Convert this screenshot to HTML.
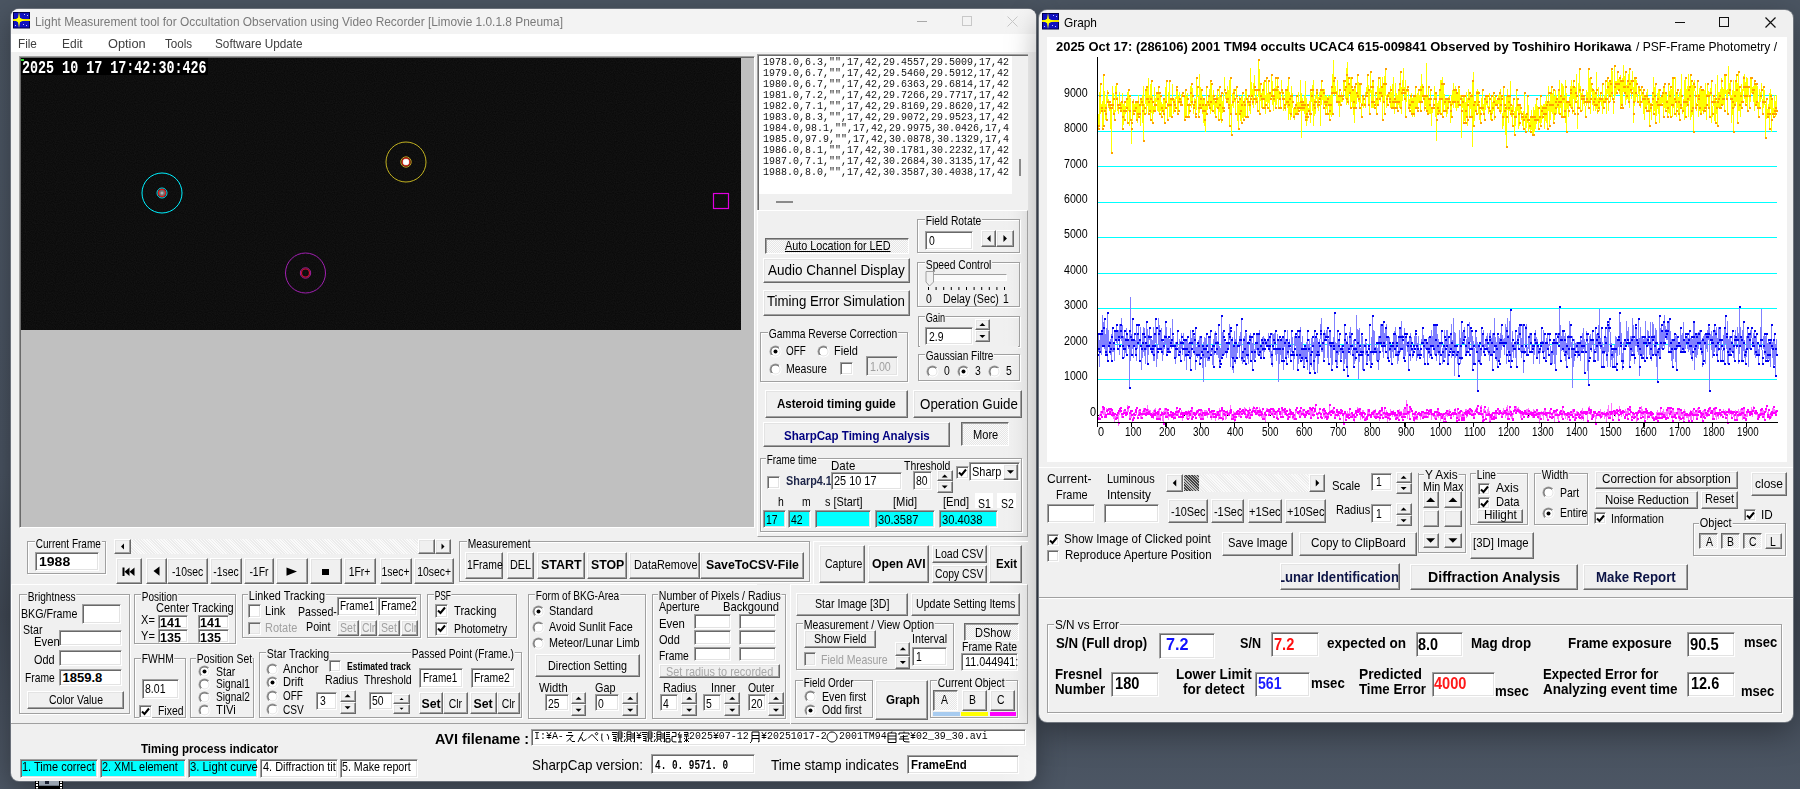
<!DOCTYPE html><html><head><meta charset="utf-8"><style>*{box-sizing:border-box;margin:0;padding:0}
html,body{width:1800px;height:789px;overflow:hidden}
body{position:relative;background:#4a5462;font-family:"Liberation Sans",sans-serif;font-size:13px;color:#000}
.a{position:absolute}
.t{position:absolute;white-space:nowrap;line-height:1;transform-origin:0 0}
</style></head><body>
<svg width="0" height="0" style="position:absolute"><defs><linearGradient id="rgo" x1="0" y1="0" x2="1" y2="1"><stop offset="0.5" stop-color="#a0a0a0"/><stop offset="0.5" stop-color="#ffffff"/></linearGradient><linearGradient id="rgi" x1="0" y1="0" x2="1" y2="1"><stop offset="0.5" stop-color="#696969"/><stop offset="0.5" stop-color="#e3e3e3"/></linearGradient></defs></svg>
<div class="a" style="left:0px;top:0px;width:1800px;height:789px;background:linear-gradient(180deg,#4b5562 0%,#485260 60%,#3f4753 78%,#4c5664 100%);"></div>
<div class="a" style="left:11px;top:9px;width:1025px;height:772px;background:#f0f0f0;border-radius:8px;box-shadow:0 0 0 1px #6a707a,0 8px 28px rgba(0,0,0,0.35);"></div>
<div class="a" style="left:11px;top:9px;width:1025px;height:25px;background:#f3f3f3;border-radius:8px 8px 0 0;"></div>
<svg class="a" style="left:13px;top:12px" width="17" height="17"><rect x="0.5" y="0.5" width="16" height="15.5" fill="#1010c0" stroke="#000050" stroke-width="1"/><path d="M0 8 H17" stroke="#f0e000" stroke-width="2"/><path d="M6 0 L7 6 L12 8 L7 10 L6 16 L5 10 L1 8 L5 6 Z" fill="#ffff00"/><circle cx="6" cy="8" r="2.2" fill="#ffff00"/><g fill="#c0c0ff"><rect x="11" y="2" width="1" height="1"/><rect x="14" y="3" width="1" height="1"/><rect x="10" y="12" width="1" height="1"/><rect x="13" y="13" width="1" height="1"/><rect x="2" y="13" width="1" height="1"/></g></svg>
<span class="t" style="left:35.3px;top:14.6px;font-size:13.5px;color:#7a7a7a;transform:scale(0.882,1.000);">Light Measurement tool for Occultation Observation using Video Recorder [Limovie 1.0.1.8 Pneuma]</span>
<div class="a" style="left:917px;top:21px;width:10px;height:1px;background:#a8a8a8;"></div>
<div class="a" style="left:962px;top:16px;width:10px;height:10px;border:1px solid #c8c8c8;"></div>
<svg class="a" style="left:1007px;top:16px" width="11" height="11"><path d="M0.5 0.5 L10.5 10.5 M10.5 0.5 L0.5 10.5" stroke="#c0c0c0" stroke-width="1"/></svg>
<div class="a" style="left:11px;top:34px;width:1025px;height:18px;background:#fff;"></div>
<span class="t" style="left:18.2px;top:36.5px;font-size:13px;color:#404040;transform:scale(0.902,1.000);">File</span>
<span class="t" style="left:62.1px;top:36.5px;font-size:13px;color:#404040;transform:scale(0.920,1.000);">Edit</span>
<span class="t" style="left:107.8px;top:36.5px;font-size:13px;color:#404040;transform:scale(0.984,1.000);">Option</span>
<span class="t" style="left:165.3px;top:36.5px;font-size:13px;color:#404040;transform:scale(0.896,1.000);">Tools</span>
<span class="t" style="left:215.3px;top:36.5px;font-size:13px;color:#404040;transform:scale(0.905,1.000);">Software Update</span>
<div class="a" style="left:1000px;top:9px;width:36px;height:772px;background:linear-gradient(90deg,rgba(255,255,255,0),rgba(255,255,255,0.35));border-radius:0 8px 8px 0;"></div>
<div class="a" style="left:1039px;top:10px;width:754px;height:712px;background:#f0f0f0;border-radius:8px;box-shadow:0 0 0 1px #70767e,0 10px 32px rgba(0,0,0,0.35);"></div>
<svg class="a" style="left:1042px;top:13px" width="17" height="17"><rect x="0.5" y="0.5" width="16" height="15.5" fill="#1010c0" stroke="#000050" stroke-width="1"/><path d="M0 8 H17" stroke="#f0e000" stroke-width="2"/><path d="M6 0 L7 6 L12 8 L7 10 L6 16 L5 10 L1 8 L5 6 Z" fill="#ffff00"/><circle cx="6" cy="8" r="2.2" fill="#ffff00"/><g fill="#c0c0ff"><rect x="11" y="2" width="1" height="1"/><rect x="14" y="3" width="1" height="1"/><rect x="10" y="12" width="1" height="1"/><rect x="13" y="13" width="1" height="1"/><rect x="2" y="13" width="1" height="1"/></g></svg>
<span class="t" style="left:1064.0px;top:15.9px;font-size:13px;transform:scale(0.911,1.000);">Graph</span>
<div class="a" style="left:1675px;top:22px;width:10px;height:1px;background:#111;"></div>
<div class="a" style="left:1719px;top:17px;width:10px;height:10px;border:1px solid #111;"></div>
<svg class="a" style="left:1765px;top:17px" width="11" height="11"><path d="M0.5 0.5 L10.5 10.5 M10.5 0.5 L0.5 10.5" stroke="#111" stroke-width="1.2"/></svg>
<svg class="a" style="left:35px;top:781px" width="28" height="8"><rect x="0" y="0" width="28" height="8" fill="#000"/><rect x="4" y="0" width="20" height="4" fill="#9aa4b0"/><rect x="10" y="0" width="4" height="3" fill="#1a2030"/><rect x="4" y="4" width="20" height="1" fill="#707a86"/><rect x="1" y="0.5" width="2" height="1.5" fill="#fff"/><rect x="1" y="3" width="2" height="2" fill="#fff"/><rect x="1" y="6" width="2" height="1.5" fill="#fff"/><rect x="25" y="0.5" width="2" height="1.5" fill="#fff"/><rect x="25" y="3" width="2" height="2" fill="#fff"/><rect x="25" y="6" width="2" height="1.5" fill="#fff"/></svg>
<div class="a" style="left:19px;top:56px;width:736px;height:472px;background:#c0c0c0;border-top:1px solid #a0a0a0;border-left:1px solid #a0a0a0;border-right:1px solid #fff;border-bottom:1px solid #fff;box-shadow:inset 1px 1px #696969;"></div>
<svg class="a" style="left:21px;top:58px" width="720" height="272"><defs><filter id="nz" x="0" y="0" width="100%" height="100%"><feTurbulence type="fractalNoise" baseFrequency="0.9" numOctaves="1" seed="3"/><feColorMatrix type="matrix" values="0 0 0 0 0.16  0 0 0 0 0.16  0 0 0 0 0.16  0 0 0 0.16 0"/></filter></defs><rect width="721" height="273" fill="#060606"/><rect width="721" height="273" filter="url(#nz)"/><rect x="0" y="0" width="187" height="17" fill="#000"/><rect x="0" y="1" width="3" height="2" fill="#30e030"/><circle cx="141" cy="135" r="20" fill="none" stroke="#00f0ff" stroke-width="1"/><circle cx="141" cy="135" r="5" fill="none" stroke="#00e0f0" stroke-width="1"/><circle cx="141" cy="135" r="3.6" fill="#707070" stroke="#e01818" stroke-width="1.2"/><circle cx="141" cy="135" r="1.5" fill="#b0b0b0"/><circle cx="385" cy="104" r="20" fill="none" stroke="#c0b020" stroke-width="1"/><circle cx="385" cy="104" r="5.2" fill="none" stroke="#c0a020" stroke-width="1"/><circle cx="385" cy="104" r="3.8" fill="#f0f0f0" stroke="#d02010" stroke-width="1.2"/><circle cx="385" cy="104" r="2.2" fill="#ffffff"/><circle cx="284.5" cy="215" r="20" fill="none" stroke="#a020b0" stroke-width="1"/><circle cx="284.5" cy="215" r="5.2" fill="none" stroke="#a020a0" stroke-width="1"/><circle cx="284.5" cy="215" r="4" fill="none" stroke="#d01030" stroke-width="1.2"/><rect x="692.5" y="135.5" width="15" height="15" fill="none" stroke="#e000e0" stroke-width="1.2"/></svg>
<span class="t" style="left:21.7px;top:59.1px;font-size:14px;font-family:'Liberation Mono',monospace;font-weight:bold;color:#fff;transform:scale(0.955,1.250);">2025 10 17 17:42:30:426</span>
<div class="a" style="left:757px;top:54px;width:271px;height:157px;background:#f0f0f0;border-top:1px solid #a0a0a0;border-left:1px solid #a0a0a0;box-shadow:inset 1px 1px #696969;"></div>
<div class="a" style="left:759px;top:56px;width:253px;height:138px;background:#fff;"></div>
<span class="t" style="left:762.9px;top:55.8px;font-size:10.5px;font-family:'Liberation Mono',monospace;color:#111;transform:scale(0.952,1.120);">1978.0,6.3,"",17,42,29.4557,29.5009,17,42</span>
<span class="t" style="left:762.9px;top:66.9px;font-size:10.5px;font-family:'Liberation Mono',monospace;color:#111;transform:scale(0.952,1.120);">1979.0,6.7,"",17,42,29.5460,29.5912,17,42</span>
<span class="t" style="left:762.9px;top:77.9px;font-size:10.5px;font-family:'Liberation Mono',monospace;color:#111;transform:scale(0.952,1.120);">1980.0,6.7,"",17,42,29.6363,29.6814,17,42</span>
<span class="t" style="left:762.9px;top:88.9px;font-size:10.5px;font-family:'Liberation Mono',monospace;color:#111;transform:scale(0.952,1.120);">1981.0,7.2,"",17,42,29.7266,29.7717,17,42</span>
<span class="t" style="left:762.9px;top:99.9px;font-size:10.5px;font-family:'Liberation Mono',monospace;color:#111;transform:scale(0.952,1.120);">1982.0,7.1,"",17,42,29.8169,29.8620,17,42</span>
<span class="t" style="left:762.9px;top:110.9px;font-size:10.5px;font-family:'Liberation Mono',monospace;color:#111;transform:scale(0.952,1.120);">1983.0,8.3,"",17,42,29.9072,29.9523,17,42</span>
<span class="t" style="left:762.9px;top:121.9px;font-size:10.5px;font-family:'Liberation Mono',monospace;color:#111;transform:scale(0.952,1.120);">1984.0,98.1,"",17,42,29.9975,30.0426,17,4</span>
<span class="t" style="left:762.9px;top:132.9px;font-size:10.5px;font-family:'Liberation Mono',monospace;color:#111;transform:scale(0.952,1.120);">1985.0,97.9,"",17,42,30.0878,30.1329,17,4</span>
<span class="t" style="left:762.9px;top:143.9px;font-size:10.5px;font-family:'Liberation Mono',monospace;color:#111;transform:scale(0.952,1.120);">1986.0,8.1,"",17,42,30.1781,30.2232,17,42</span>
<span class="t" style="left:762.9px;top:154.9px;font-size:10.5px;font-family:'Liberation Mono',monospace;color:#111;transform:scale(0.952,1.120);">1987.0,7.1,"",17,42,30.2684,30.3135,17,42</span>
<span class="t" style="left:762.9px;top:165.9px;font-size:10.5px;font-family:'Liberation Mono',monospace;color:#111;transform:scale(0.952,1.120);">1988.0,8.0,"",17,42,30.3587,30.4038,17,42</span>
<div class="a" style="left:1019px;top:159px;width:2px;height:17px;background:#8a8a8a;"></div>
<div class="a" style="left:776px;top:201px;width:17px;height:1px;background:#8a8a8a;height:2px;"></div>
<div class="a" style="left:757px;top:210px;width:271px;height:327px;border-top:1px solid #fff;border-left:1px solid #fff;border-right:1px solid #a0a0a0;border-bottom:1px solid #a0a0a0;"></div>
<div class="a" style="left:765px;top:238px;width:144px;height:16px;background:repeating-conic-gradient(#fafafa 0 25%,#e6e6e6 0 50%) 0 0/2px 2px;border:1px solid;border-color:#696969 #fff #fff #696969;box-shadow:inset 1px 1px #a0a0a0;"></div>
<span class="t" style="left:784.9px;top:239.1px;font-size:13px;text-decoration:underline;transform:scale(0.830,1.000);">Auto Location for LED</span>
<div class="a" style="left:763px;top:258px;width:147px;height:25px;background:#f0f0f0;border:1px solid;border-color:#fff #696969 #696969 #fff;box-shadow:inset -1px -1px #a0a0a0,inset 1px 1px #e3e3e3;"></div>
<span class="t" style="left:768.0px;top:262.5px;font-size:14.5px;transform:scale(0.932,1.000);">Audio Channel Display</span>
<div class="a" style="left:763px;top:290px;width:147px;height:26px;background:#f0f0f0;border:1px solid;border-color:#fff #696969 #696969 #fff;box-shadow:inset -1px -1px #a0a0a0,inset 1px 1px #e3e3e3;"></div>
<span class="t" style="left:767.2px;top:294.4px;font-size:14.5px;transform:scale(0.914,1.000);">Timing Error Simulation</span>
<div class="a" style="left:917px;top:219px;width:103px;height:34px;border:1px solid #a0a0a0;box-shadow:inset 1px 1px #fff,1px 1px #fff;"></div>
<span class="t" style="left:925.6px;top:214.3px;font-size:13px;background:#f0f0f0;padding:0 1px;margin-left:-1px;transform:scale(0.791,1.000);">Field Rotate</span>
<div class="a" style="left:925px;top:231px;width:48px;height:19px;background:#fff;border:1px solid;border-color:#a0a0a0 #fff #fff #a0a0a0;box-shadow:inset 1px 1px #696969,inset -1px -1px #e3e3e3;"></div>
<span class="t" style="left:928.5px;top:234.3px;font-size:13px;transform:scale(0.800,1.000);">0</span>
<div class="a" style="left:981px;top:230px;width:15px;height:17px;background:#f0f0f0;border:1px solid;border-color:#fff #696969 #696969 #fff;box-shadow:inset -1px -1px #a0a0a0,inset 1px 1px #e3e3e3;"></div>
<svg class="a" style="left:0;top:0;overflow:visible" width="1" height="1"><polygon points="990.55,235.0 990.55,242.0 987.05,238.5" fill="#000"/></svg>
<div class="a" style="left:996px;top:230px;width:18px;height:17px;background:#f0f0f0;border:1px solid;border-color:#fff #696969 #696969 #fff;box-shadow:inset -1px -1px #a0a0a0,inset 1px 1px #e3e3e3;"></div>
<svg class="a" style="left:0;top:0;overflow:visible" width="1" height="1"><polygon points="1003.45,235.0 1003.45,242.0 1006.95,238.5" fill="#000"/></svg>
<div class="a" style="left:917px;top:262px;width:103px;height:45px;border:1px solid #a0a0a0;box-shadow:inset 1px 1px #fff,1px 1px #fff;"></div>
<span class="t" style="left:925.6px;top:257.7px;font-size:13px;background:#f0f0f0;padding:0 1px;margin-left:-1px;transform:scale(0.789,1.000);">Speed Control</span>
<div class="a" style="left:926px;top:274px;width:81px;height:7px;background:#fafafa;border:1px solid;border-color:#a0a0a0 #fff #fff #a0a0a0;"></div>
<svg class="a" style="left:925px;top:271px" width="10" height="16"><path d="M1 0.5 H8.5 V11 L4.5 15 L1 11 Z" fill="#f0f0f0" stroke="#a0a0a0" stroke-width="1"/></svg>
<svg class="a" style="left:928px;top:287px" width="80" height="4"><rect x="0.0" y="0" width="1" height="3" fill="#000"/><rect x="7.6" y="0" width="1" height="3" fill="#000"/><rect x="15.2" y="0" width="1" height="3" fill="#000"/><rect x="22.8" y="0" width="1" height="3" fill="#000"/><rect x="30.4" y="0" width="1" height="3" fill="#000"/><rect x="38.0" y="0" width="1" height="3" fill="#000"/><rect x="45.6" y="0" width="1" height="3" fill="#000"/><rect x="53.2" y="0" width="1" height="3" fill="#000"/><rect x="60.8" y="0" width="1" height="3" fill="#000"/><rect x="68.4" y="0" width="1" height="3" fill="#000"/><rect x="76.0" y="0" width="1" height="3" fill="#000"/></svg>
<span class="t" style="left:926.0px;top:292.3px;font-size:13px;transform:scale(0.800,1.000);">0</span>
<span class="t" style="left:942.8px;top:292.3px;font-size:13px;transform:scale(0.822,1.000);">Delay (Sec)</span>
<span class="t" style="left:1003.0px;top:292.3px;font-size:13px;transform:scale(0.800,1.000);">1</span>
<div class="a" style="left:918px;top:316px;width:102px;height:31px;border:1px solid #a0a0a0;box-shadow:inset 1px 1px #fff,1px 1px #fff;"></div>
<div class="a" style="left:920px;top:346px;width:98px;height:4px;background:#f0f0f0;"></div>
<span class="t" style="left:925.6px;top:310.8px;font-size:13px;background:#f0f0f0;padding:0 1px;margin-left:-1px;transform:scale(0.703,1.000);">Gain</span>
<div class="a" style="left:925px;top:327px;width:48px;height:18px;background:#fff;border:1px solid;border-color:#a0a0a0 #fff #fff #a0a0a0;box-shadow:inset 1px 1px #696969,inset -1px -1px #e3e3e3;"></div>
<span class="t" style="left:928.5px;top:329.8px;font-size:13px;transform:scale(0.800,1.000);">2.9</span>
<div class="a" style="left:975px;top:319px;width:15px;height:11px;background:#f0f0f0;border:1px solid;border-color:#fff #696969 #696969 #fff;box-shadow:inset -1px -1px #a0a0a0,inset 1px 1px #e3e3e3;"></div>
<div class="a" style="left:975px;top:330px;width:15px;height:12px;background:#f0f0f0;border:1px solid;border-color:#fff #696969 #696969 #fff;box-shadow:inset -1px -1px #a0a0a0,inset 1px 1px #e3e3e3;"></div>
<svg class="a" style="left:0;top:0;overflow:visible" width="1" height="1"><polygon points="979.35,326.02500000000003 985.35,326.02500000000003 982.35,323.02500000000003" fill="#000"/></svg>
<svg class="a" style="left:0;top:0;overflow:visible" width="1" height="1"><polygon points="979.35,334.875 985.35,334.875 982.35,337.875" fill="#000"/></svg>
<div class="a" style="left:918px;top:354px;width:102px;height:27px;border:1px solid #a0a0a0;box-shadow:inset 1px 1px #fff,1px 1px #fff;"></div>
<span class="t" style="left:925.6px;top:348.8px;font-size:13px;background:#f0f0f0;padding:0 1px;margin-left:-1px;transform:scale(0.774,1.000);">Gaussian Filtre</span>
<svg class="a" style="left:926px;top:365px" width="13" height="13"><circle cx="6.5" cy="6.5" r="6" fill="url(#rgo)"/><circle cx="6.5" cy="6.5" r="5" fill="url(#rgi)"/><circle cx="6.5" cy="6.5" r="4" fill="#fff"/></svg>
<span class="t" style="left:943.7px;top:363.9px;font-size:13px;transform:scale(0.800,1.000);">0</span>
<svg class="a" style="left:957px;top:365px" width="13" height="13"><circle cx="6.5" cy="6.5" r="6" fill="url(#rgo)"/><circle cx="6.5" cy="6.5" r="5" fill="url(#rgi)"/><circle cx="6.5" cy="6.5" r="4" fill="#fff"/><circle cx="6.5" cy="6.5" r="2" fill="#000"/></svg>
<span class="t" style="left:974.7px;top:363.9px;font-size:13px;transform:scale(0.800,1.000);">3</span>
<svg class="a" style="left:988px;top:365px" width="13" height="13"><circle cx="6.5" cy="6.5" r="6" fill="url(#rgo)"/><circle cx="6.5" cy="6.5" r="5" fill="url(#rgi)"/><circle cx="6.5" cy="6.5" r="4" fill="#fff"/></svg>
<span class="t" style="left:1005.5px;top:363.9px;font-size:13px;transform:scale(0.800,1.000);">5</span>
<div class="a" style="left:760px;top:332px;width:148px;height:50px;border:1px solid #a0a0a0;box-shadow:inset 1px 1px #fff,1px 1px #fff;"></div>
<span class="t" style="left:768.8px;top:326.5px;font-size:13px;background:#f0f0f0;padding:0 1px;margin-left:-1px;transform:scale(0.793,1.000);">Gamma Reverse Correction</span>
<svg class="a" style="left:769px;top:345px" width="13" height="13"><circle cx="6.5" cy="6.5" r="6" fill="url(#rgo)"/><circle cx="6.5" cy="6.5" r="5" fill="url(#rgi)"/><circle cx="6.5" cy="6.5" r="4" fill="#fff"/><circle cx="6.5" cy="6.5" r="2" fill="#000"/></svg>
<span class="t" style="left:786.4px;top:344.0px;font-size:13px;transform:scale(0.760,1.000);">OFF</span>
<svg class="a" style="left:817px;top:345px" width="13" height="13"><circle cx="6.5" cy="6.5" r="6" fill="url(#rgo)"/><circle cx="6.5" cy="6.5" r="5" fill="url(#rgi)"/><circle cx="6.5" cy="6.5" r="4" fill="#fff"/></svg>
<span class="t" style="left:834.4px;top:344.0px;font-size:13px;transform:scale(0.846,1.000);">Field</span>
<svg class="a" style="left:769px;top:363px" width="13" height="13"><circle cx="6.5" cy="6.5" r="6" fill="url(#rgo)"/><circle cx="6.5" cy="6.5" r="5" fill="url(#rgi)"/><circle cx="6.5" cy="6.5" r="4" fill="#fff"/></svg>
<span class="t" style="left:786.4px;top:362.1px;font-size:13px;transform:scale(0.807,1.000);">Measure</span>
<div class="a" style="left:840px;top:362px;width:13px;height:13px;background:#fff;border:1px solid;border-color:#a0a0a0 #fff #fff #a0a0a0;box-shadow:inset 1px 1px #696969,inset -1px -1px #e3e3e3;"></div>
<div class="a" style="left:866px;top:356px;width:32px;height:20px;background:#f0f0f0;border:1px solid;border-color:#a0a0a0 #fff #fff #a0a0a0;box-shadow:inset 1px 1px #696969,inset -1px -1px #e3e3e3;"></div>
<span class="t" style="left:869.5px;top:359.6px;font-size:13px;color:#a0a0a0;transform:scale(0.823,1.000);">1.00</span>
<div class="a" style="left:765px;top:390px;width:143px;height:28px;background:#f0f0f0;border:1px solid;border-color:#fff #696969 #696969 #fff;box-shadow:inset -1px -1px #a0a0a0,inset 1px 1px #e3e3e3;"></div>
<span class="t" style="left:777.3px;top:397.2px;font-size:13.5px;font-weight:bold;transform:scale(0.856,1.000);">Asteroid timing guide</span>
<div class="a" style="left:913px;top:390px;width:109px;height:28px;background:#f0f0f0;border:1px solid;border-color:#fff #696969 #696969 #fff;box-shadow:inset -1px -1px #a0a0a0,inset 1px 1px #e3e3e3;"></div>
<span class="t" style="left:919.5px;top:397.1px;font-size:14.5px;transform:scale(0.920,1.000);">Operation Guide</span>
<div class="a" style="left:763px;top:422px;width:187px;height:25px;background:#f0f0f0;border:1px solid;border-color:#fff #696969 #696969 #fff;box-shadow:inset -1px -1px #a0a0a0,inset 1px 1px #e3e3e3;"></div>
<span class="t" style="left:784.0px;top:428.5px;font-size:13.5px;font-weight:bold;color:#000080;transform:scale(0.856,1.000);">SharpCap Timing Analysis</span>
<div class="a" style="left:961px;top:422px;width:48px;height:24px;background:repeating-conic-gradient(#fafafa 0 25%,#e6e6e6 0 50%) 0 0/2px 2px;border:1px solid;border-color:#696969 #fff #fff #696969;box-shadow:inset 1px 1px #a0a0a0;"></div>
<span class="t" style="left:973.1px;top:427.7px;font-size:13px;transform:scale(0.852,1.000);">More</span>
<div class="a" style="left:760px;top:458px;width:262px;height:74px;border:1px solid #a0a0a0;box-shadow:inset 1px 1px #fff,1px 1px #fff;"></div>
<span class="t" style="left:767.2px;top:452.9px;font-size:13px;background:#f0f0f0;padding:0 1px;margin-left:-1px;transform:scale(0.761,1.000);">Frame time</span>
<span class="t" style="left:831.1px;top:458.6px;font-size:13px;transform:scale(0.884,1.000);">Date</span>
<span class="t" style="left:904.2px;top:458.6px;font-size:13px;transform:scale(0.803,1.000);">Threshold</span>
<div class="a" style="left:767px;top:476px;width:13px;height:13px;background:#fff;border:1px solid;border-color:#a0a0a0 #fff #fff #a0a0a0;box-shadow:inset 1px 1px #696969,inset -1px -1px #e3e3e3;"></div>
<span class="t" style="left:786.1px;top:475.4px;font-size:12.5px;font-weight:bold;color:#1c2448;transform:scale(0.869,1.000);">Sharp4.1</span>
<div class="a" style="left:831px;top:472px;width:71px;height:18px;background:#fff;border:1px solid;border-color:#a0a0a0 #fff #fff #a0a0a0;box-shadow:inset 1px 1px #696969,inset -1px -1px #e3e3e3;"></div>
<span class="t" style="left:834.2px;top:474.2px;font-size:13px;transform:scale(0.839,1.000);">25 10 17</span>
<div class="a" style="left:913px;top:471px;width:19px;height:19px;background:#fff;border:1px solid;border-color:#a0a0a0 #fff #fff #a0a0a0;box-shadow:inset 1px 1px #696969,inset -1px -1px #e3e3e3;"></div>
<span class="t" style="left:916.3px;top:474.2px;font-size:13px;transform:scale(0.800,1.000);">80</span>
<div class="a" style="left:937px;top:470px;width:16px;height:11px;background:#f0f0f0;border:1px solid;border-color:#fff #696969 #696969 #fff;box-shadow:inset -1px -1px #a0a0a0,inset 1px 1px #e3e3e3;"></div>
<div class="a" style="left:937px;top:481px;width:16px;height:12px;background:#f0f0f0;border:1px solid;border-color:#fff #696969 #696969 #fff;box-shadow:inset -1px -1px #a0a0a0,inset 1px 1px #e3e3e3;"></div>
<svg class="a" style="left:0;top:0;overflow:visible" width="1" height="1"><polygon points="941.7,477.375 947.7,477.375 944.7,474.375" fill="#000"/></svg>
<svg class="a" style="left:0;top:0;overflow:visible" width="1" height="1"><polygon points="941.7,485.52500000000003 947.7,485.52500000000003 944.7,488.52500000000003" fill="#000"/></svg>
<div class="a" style="left:956px;top:466px;width:13px;height:13px;background:#fff;border:1px solid;border-color:#a0a0a0 #fff #fff #a0a0a0;box-shadow:inset 1px 1px #696969,inset -1px -1px #e3e3e3;"></div>
<svg class="a" style="left:956px;top:466px" width="13" height="13"><path d="M3 6.5 L5.5 9 L10 3.5" fill="none" stroke="#000" stroke-width="2"/></svg>
<div class="a" style="left:969px;top:462px;width:51px;height:19px;background:#fff;border:1px solid;border-color:#a0a0a0 #fff #fff #a0a0a0;box-shadow:inset 1px 1px #696969,inset -1px -1px #e3e3e3;"></div>
<span class="t" style="left:972.1px;top:465.1px;font-size:13px;transform:scale(0.843,1.000);">Sharp</span>
<div class="a" style="left:1003px;top:464px;width:15px;height:16px;background:#f0f0f0;border:1px solid;border-color:#fff #696969 #696969 #fff;box-shadow:inset -1px -1px #a0a0a0,inset 1px 1px #e3e3e3;"></div>
<svg class="a" style="left:0;top:0;overflow:visible" width="1" height="1"><polygon points="1007.0,470.25 1014.0,470.25 1010.5,473.75" fill="#000"/></svg>
<span class="t" style="left:778.4px;top:495.1px;font-size:13px;transform:scale(0.800,1.000);">h</span>
<span class="t" style="left:801.7px;top:495.1px;font-size:13px;transform:scale(0.800,1.000);">m</span>
<span class="t" style="left:825.0px;top:495.1px;font-size:13px;transform:scale(0.836,1.000);">s [Start]</span>
<span class="t" style="left:893.0px;top:495.1px;font-size:13px;transform:scale(0.858,1.000);">[Mid]</span>
<span class="t" style="left:942.7px;top:495.1px;font-size:13px;transform:scale(0.862,1.000);">[End]</span>
<div class="a" style="left:975px;top:493px;width:18px;height:15px;background:#fff;"></div>
<div class="a" style="left:997px;top:493px;width:19px;height:15px;background:#fff;"></div>
<span class="t" style="left:978.2px;top:496.9px;font-size:13px;transform:scale(0.805,1.000);">S1</span>
<span class="t" style="left:1000.5px;top:496.9px;font-size:13px;transform:scale(0.805,1.000);">S2</span>
<div class="a" style="left:763px;top:510px;width:23px;height:18px;background:#00ffff;border:1px solid;border-color:#a0a0a0 #fff #fff #a0a0a0;box-shadow:inset 1px 1px #696969,inset -1px -1px #e3e3e3;"></div>
<span class="t" style="left:766.2px;top:512.8px;font-size:13px;transform:scale(0.800,1.000);">17</span>
<div class="a" style="left:788px;top:510px;width:23px;height:18px;background:#00ffff;border:1px solid;border-color:#a0a0a0 #fff #fff #a0a0a0;box-shadow:inset 1px 1px #696969,inset -1px -1px #e3e3e3;"></div>
<span class="t" style="left:790.5px;top:512.8px;font-size:13px;transform:scale(0.800,1.000);">42</span>
<div class="a" style="left:815px;top:510px;width:56px;height:18px;background:#00ffff;border:1px solid;border-color:#a0a0a0 #fff #fff #a0a0a0;box-shadow:inset 1px 1px #696969,inset -1px -1px #e3e3e3;"></div>
<div class="a" style="left:875px;top:510px;width:60px;height:18px;background:#00ffff;border:1px solid;border-color:#a0a0a0 #fff #fff #a0a0a0;box-shadow:inset 1px 1px #696969,inset -1px -1px #e3e3e3;"></div>
<span class="t" style="left:877.7px;top:512.8px;font-size:13px;transform:scale(0.859,1.000);">30.3587</span>
<div class="a" style="left:939px;top:510px;width:59px;height:18px;background:#00ffff;border:1px solid;border-color:#a0a0a0 #fff #fff #a0a0a0;box-shadow:inset 1px 1px #696969,inset -1px -1px #e3e3e3;"></div>
<span class="t" style="left:942.0px;top:512.8px;font-size:13px;transform:scale(0.859,1.000);">30.4038</span>
<div class="a" style="left:11px;top:584px;width:746px;height:1px;background:#fff;"></div>
<div class="a" style="left:11px;top:584px;width:1px;height:139px;background:#fff;"></div>
<div class="a" style="left:11px;top:723px;width:1017px;height:1px;background:#a0a0a0;"></div>
<div class="a" style="left:790px;top:584px;width:238px;height:140px;border-top:1px solid #fff;border-left:1px solid #fff;border-right:1px solid #a0a0a0;"></div>
<div class="a" style="left:27px;top:541px;width:79px;height:33px;border:1px solid #a0a0a0;box-shadow:inset 1px 1px #fff,1px 1px #fff;"></div>
<span class="t" style="left:35.5px;top:536.6px;font-size:13px;background:#f0f0f0;padding:0 1px;margin-left:-1px;transform:scale(0.769,1.000);">Current Frame</span>
<div class="a" style="left:35px;top:552px;width:64px;height:19px;background:#fff;border:1px solid;border-color:#a0a0a0 #fff #fff #a0a0a0;box-shadow:inset 1px 1px #696969,inset -1px -1px #e3e3e3;"></div>
<span class="t" style="left:38.9px;top:554.9px;font-size:13px;font-weight:bold;transform:scale(1.078,1.000);">1988</span>
<div class="a" style="left:114px;top:539px;width:337px;height:15px;background:#f4f4f4;background-image:repeating-linear-gradient(45deg,#ececec 0 1px,#fafafa 1px 2px);"></div>
<div class="a" style="left:114px;top:539px;width:17px;height:15px;background:#f0f0f0;border:1px solid;border-color:#fff #696969 #696969 #fff;box-shadow:inset -1px -1px #a0a0a0,inset 1px 1px #e3e3e3;"></div>
<svg class="a" style="left:0;top:0;overflow:visible" width="1" height="1"><polygon points="124.0,543.5 124.0,549.5 121.0,546.5" fill="#000"/></svg>
<div class="a" style="left:418px;top:539px;width:17px;height:15px;background:#f0f0f0;border:1px solid;border-color:#fff #696969 #696969 #fff;box-shadow:inset -1px -1px #a0a0a0,inset 1px 1px #e3e3e3;"></div>
<div class="a" style="left:435px;top:539px;width:16px;height:15px;background:#f0f0f0;border:1px solid;border-color:#fff #696969 #696969 #fff;box-shadow:inset -1px -1px #a0a0a0,inset 1px 1px #e3e3e3;"></div>
<svg class="a" style="left:0;top:0;overflow:visible" width="1" height="1"><polygon points="441.5,543.5 441.5,549.5 444.5,546.5" fill="#000"/></svg>
<div class="a" style="left:116px;top:558px;width:26px;height:26px;background:#f0f0f0;border:1px solid;border-color:#fff #696969 #696969 #fff;box-shadow:inset -1px -1px #a0a0a0,inset 1px 1px #e3e3e3;"></div>
<div class="a" style="left:146px;top:558px;width:21px;height:26px;background:#f0f0f0;border:1px solid;border-color:#fff #696969 #696969 #fff;box-shadow:inset -1px -1px #a0a0a0,inset 1px 1px #e3e3e3;"></div>
<div class="a" style="left:167px;top:558px;width:41px;height:26px;background:#f0f0f0;border:1px solid;border-color:#fff #696969 #696969 #fff;box-shadow:inset -1px -1px #a0a0a0,inset 1px 1px #e3e3e3;"></div>
<div class="a" style="left:167px;top:558px;width:41px;height:25px;display:flex;align-items:center;justify-content:center;"><span style="font-size:13px;transform:scaleX(0.8);white-space:nowrap;line-height:1;margin-top:1px">-10sec</span></div>
<div class="a" style="left:210px;top:558px;width:32px;height:26px;background:#f0f0f0;border:1px solid;border-color:#fff #696969 #696969 #fff;box-shadow:inset -1px -1px #a0a0a0,inset 1px 1px #e3e3e3;"></div>
<div class="a" style="left:210px;top:558px;width:32px;height:25px;display:flex;align-items:center;justify-content:center;"><span style="font-size:13px;transform:scaleX(0.8);white-space:nowrap;line-height:1;margin-top:1px">-1sec</span></div>
<div class="a" style="left:244px;top:558px;width:30px;height:26px;background:#f0f0f0;border:1px solid;border-color:#fff #696969 #696969 #fff;box-shadow:inset -1px -1px #a0a0a0,inset 1px 1px #e3e3e3;"></div>
<div class="a" style="left:244px;top:558px;width:30px;height:25px;display:flex;align-items:center;justify-content:center;"><span style="font-size:13px;transform:scaleX(0.8);white-space:nowrap;line-height:1;margin-top:1px">-1Fr</span></div>
<div class="a" style="left:276px;top:558px;width:32px;height:26px;background:#f0f0f0;border:1px solid;border-color:#fff #696969 #696969 #fff;box-shadow:inset -1px -1px #a0a0a0,inset 1px 1px #e3e3e3;"></div>
<div class="a" style="left:310px;top:558px;width:32px;height:26px;background:#f0f0f0;border:1px solid;border-color:#fff #696969 #696969 #fff;box-shadow:inset -1px -1px #a0a0a0,inset 1px 1px #e3e3e3;"></div>
<div class="a" style="left:344px;top:558px;width:32px;height:26px;background:#f0f0f0;border:1px solid;border-color:#fff #696969 #696969 #fff;box-shadow:inset -1px -1px #a0a0a0,inset 1px 1px #e3e3e3;"></div>
<div class="a" style="left:344px;top:558px;width:32px;height:25px;display:flex;align-items:center;justify-content:center;"><span style="font-size:13px;transform:scaleX(0.8);white-space:nowrap;line-height:1;margin-top:1px">1Fr+</span></div>
<div class="a" style="left:380px;top:558px;width:32px;height:26px;background:#f0f0f0;border:1px solid;border-color:#fff #696969 #696969 #fff;box-shadow:inset -1px -1px #a0a0a0,inset 1px 1px #e3e3e3;"></div>
<div class="a" style="left:380px;top:558px;width:32px;height:25px;display:flex;align-items:center;justify-content:center;"><span style="font-size:13px;transform:scaleX(0.8);white-space:nowrap;line-height:1;margin-top:1px">1sec+</span></div>
<div class="a" style="left:414px;top:558px;width:40px;height:26px;background:#f0f0f0;border:1px solid;border-color:#fff #696969 #696969 #fff;box-shadow:inset -1px -1px #a0a0a0,inset 1px 1px #e3e3e3;"></div>
<div class="a" style="left:414px;top:558px;width:40px;height:25px;display:flex;align-items:center;justify-content:center;"><span style="font-size:13px;transform:scaleX(0.8);white-space:nowrap;line-height:1;margin-top:1px">10sec+</span></div>
<svg class="a" style="left:122px;top:567px" width="14" height="10"><rect x="0.5" y="0.5" width="2" height="8.5" fill="#000"/><polygon points="2.5,4.8 7.5,0.5 7.5,9" fill="#000"/><polygon points="7.5,4.8 12.5,0.5 12.5,9" fill="#000"/></svg>
<svg class="a" style="left:153px;top:566px" width="8" height="11"><polygon points="0.5,5 6.5,0.5 6.5,9.8" fill="#000"/></svg>
<svg class="a" style="left:286px;top:567px" width="12" height="10"><polygon points="0.5,0.5 11,4.6 0.5,8.8" fill="#000"/></svg>
<div class="a" style="left:322px;top:569px;width:7px;height:6px;background:#000;"></div>
<div class="a" style="left:19px;top:594px;width:111px;height:120px;border:1px solid #a0a0a0;box-shadow:inset 1px 1px #fff,1px 1px #fff;"></div>
<span class="t" style="left:27.5px;top:589.9px;font-size:13px;background:#f0f0f0;padding:0 1px;margin-left:-1px;transform:scale(0.780,1.000);">Brightness</span>
<span class="t" style="left:21.4px;top:606.9px;font-size:13px;transform:scale(0.821,1.000);">BKG/Frame</span>
<div class="a" style="left:82px;top:604px;width:39px;height:20px;background:#fff;border:1px solid;border-color:#a0a0a0 #fff #fff #a0a0a0;box-shadow:inset 1px 1px #696969,inset -1px -1px #e3e3e3;"></div>
<span class="t" style="left:23.4px;top:623.3px;font-size:13px;transform:scale(0.814,1.000);">Star</span>
<span class="t" style="left:33.6px;top:634.7px;font-size:13px;transform:scale(0.866,1.000);">Even</span>
<div class="a" style="left:59px;top:630px;width:63px;height:16px;background:#fff;border:1px solid;border-color:#a0a0a0 #fff #fff #a0a0a0;box-shadow:inset 1px 1px #696969,inset -1px -1px #e3e3e3;"></div>
<span class="t" style="left:33.6px;top:653.1px;font-size:13px;transform:scale(0.836,1.000);">Odd</span>
<div class="a" style="left:59px;top:650px;width:63px;height:16px;background:#fff;border:1px solid;border-color:#a0a0a0 #fff #fff #a0a0a0;box-shadow:inset 1px 1px #696969,inset -1px -1px #e3e3e3;"></div>
<span class="t" style="left:25.2px;top:671.1px;font-size:13px;transform:scale(0.790,1.000);">Frame</span>
<div class="a" style="left:59px;top:669px;width:63px;height:17px;background:#fff;border:1px solid;border-color:#a0a0a0 #fff #fff #a0a0a0;box-shadow:inset 1px 1px #696969,inset -1px -1px #e3e3e3;"></div>
<span class="t" style="left:62.5px;top:671.4px;font-size:13px;font-weight:bold;">1859.8</span>
<div class="a" style="left:27px;top:691px;width:97px;height:18px;background:#f0f0f0;border:1px solid;border-color:#fff #696969 #696969 #fff;box-shadow:inset -1px -1px #a0a0a0,inset 1px 1px #e3e3e3;"></div>
<span class="t" style="left:48.8px;top:693.4px;font-size:13px;transform:scale(0.806,1.000);">Color Value</span>
<div class="a" style="left:134px;top:594px;width:102px;height:50px;border:1px solid #a0a0a0;box-shadow:inset 1px 1px #fff,1px 1px #fff;"></div>
<span class="t" style="left:141.6px;top:589.9px;font-size:13px;background:#f0f0f0;padding:0 1px;margin-left:-1px;transform:scale(0.770,1.000);">Position</span>
<span class="t" style="left:155.5px;top:600.8px;font-size:13px;transform:scale(0.847,1.000);">Center Tracking</span>
<span class="t" style="left:140.5px;top:613.4px;font-size:13px;transform:scale(0.852,1.000);">X=</span>
<span class="t" style="left:140.5px;top:629.4px;font-size:13px;transform:scale(0.852,1.000);">Y=</span>
<div class="a" style="left:158px;top:615px;width:30px;height:14px;background:#fff;border:1px solid;border-color:#a0a0a0 #fff #fff #a0a0a0;box-shadow:inset 1px 1px #696969,inset -1px -1px #e3e3e3;"></div>
<span class="t" style="left:159.8px;top:616.0px;font-size:13px;font-weight:bold;transform:scale(0.966,1.000);">141</span>
<div class="a" style="left:198px;top:615px;width:31px;height:14px;background:#fff;border:1px solid;border-color:#a0a0a0 #fff #fff #a0a0a0;box-shadow:inset 1px 1px #696969,inset -1px -1px #e3e3e3;"></div>
<span class="t" style="left:200.1px;top:616.0px;font-size:13px;font-weight:bold;transform:scale(0.966,1.000);">141</span>
<div class="a" style="left:158px;top:629px;width:30px;height:14px;background:#fff;border:1px solid;border-color:#a0a0a0 #fff #fff #a0a0a0;box-shadow:inset 1px 1px #696969,inset -1px -1px #e3e3e3;"></div>
<span class="t" style="left:159.8px;top:630.9px;font-size:13px;font-weight:bold;transform:scale(0.966,1.000);">135</span>
<div class="a" style="left:198px;top:629px;width:31px;height:14px;background:#fff;border:1px solid;border-color:#a0a0a0 #fff #fff #a0a0a0;box-shadow:inset 1px 1px #696969,inset -1px -1px #e3e3e3;"></div>
<span class="t" style="left:200.1px;top:630.9px;font-size:13px;font-weight:bold;transform:scale(0.966,1.000);">135</span>
<div class="a" style="left:134px;top:658px;width:52px;height:60px;border:1px solid #a0a0a0;box-shadow:inset 1px 1px #fff,1px 1px #fff;"></div>
<span class="t" style="left:141.6px;top:652.3px;font-size:13px;background:#f0f0f0;padding:0 1px;margin-left:-1px;transform:scale(0.789,1.000);">FWHM</span>
<div class="a" style="left:142px;top:679px;width:37px;height:20px;background:#fff;border:1px solid;border-color:#a0a0a0 #fff #fff #a0a0a0;box-shadow:inset 1px 1px #696969,inset -1px -1px #e3e3e3;"></div>
<span class="t" style="left:145.4px;top:682.0px;font-size:13px;transform:scale(0.810,1.000);">8.01</span>
<div class="a" style="left:139px;top:705px;width:13px;height:13px;background:#fff;border:1px solid;border-color:#a0a0a0 #fff #fff #a0a0a0;box-shadow:inset 1px 1px #696969,inset -1px -1px #e3e3e3;"></div>
<svg class="a" style="left:139px;top:705px" width="13" height="13"><path d="M3 6.5 L5.5 9 L10 3.5" fill="none" stroke="#000" stroke-width="2"/></svg>
<span class="t" style="left:157.5px;top:704.1px;font-size:13px;transform:scale(0.802,1.000);">Fixed</span>
<div class="a" style="left:190px;top:658px;width:64px;height:60px;border:1px solid #a0a0a0;box-shadow:inset 1px 1px #fff,1px 1px #fff;"></div>
<span class="t" style="left:197.4px;top:652.3px;font-size:13px;background:#f0f0f0;padding:0 1px;margin-left:-1px;transform:scale(0.796,1.000);">Position Set</span>
<svg class="a" style="left:198px;top:665px" width="13" height="13"><circle cx="6.5" cy="6.5" r="6" fill="url(#rgo)"/><circle cx="6.5" cy="6.5" r="5" fill="url(#rgi)"/><circle cx="6.5" cy="6.5" r="4" fill="#fff"/><circle cx="6.5" cy="6.5" r="2" fill="#000"/></svg>
<span class="t" style="left:215.6px;top:664.5px;font-size:13px;transform:scale(0.805,1.000);">Star</span>
<svg class="a" style="left:198px;top:678px" width="13" height="13"><circle cx="6.5" cy="6.5" r="6" fill="url(#rgo)"/><circle cx="6.5" cy="6.5" r="5" fill="url(#rgi)"/><circle cx="6.5" cy="6.5" r="4" fill="#fff"/></svg>
<span class="t" style="left:215.6px;top:676.7px;font-size:13px;transform:scale(0.779,1.000);">Signal1</span>
<svg class="a" style="left:198px;top:691px" width="13" height="13"><circle cx="6.5" cy="6.5" r="6" fill="url(#rgo)"/><circle cx="6.5" cy="6.5" r="5" fill="url(#rgi)"/><circle cx="6.5" cy="6.5" r="4" fill="#fff"/></svg>
<span class="t" style="left:215.6px;top:689.6px;font-size:13px;transform:scale(0.779,1.000);">Signal2</span>
<svg class="a" style="left:198px;top:704px" width="13" height="13"><circle cx="6.5" cy="6.5" r="6" fill="url(#rgo)"/><circle cx="6.5" cy="6.5" r="5" fill="url(#rgi)"/><circle cx="6.5" cy="6.5" r="4" fill="#fff"/></svg>
<span class="t" style="left:215.6px;top:702.5px;font-size:13px;transform:scale(0.868,1.000);">TIVi</span>
<div class="a" style="left:242px;top:594px;width:179px;height:44px;border:1px solid #a0a0a0;box-shadow:inset 1px 1px #fff,1px 1px #fff;"></div>
<span class="t" style="left:249.4px;top:588.7px;font-size:13px;background:#f0f0f0;padding:0 1px;margin-left:-1px;transform:scale(0.836,1.000);">Linked Tracking</span>
<div class="a" style="left:248px;top:604px;width:13px;height:14px;background:#fff;border:1px solid;border-color:#a0a0a0 #fff #fff #a0a0a0;box-shadow:inset 1px 1px #696969,inset -1px -1px #e3e3e3;"></div>
<span class="t" style="left:265.1px;top:603.9px;font-size:13px;transform:scale(0.853,1.000);">Link</span>
<span class="t" style="left:297.5px;top:604.7px;font-size:13px;transform:scale(0.814,1.000);">Passed-</span>
<div class="a" style="left:248px;top:622px;width:13px;height:13px;background:#f0f0f0;border:1px solid;border-color:#a0a0a0 #fff #fff #a0a0a0;box-shadow:inset 1px 1px #696969,inset -1px -1px #e3e3e3;"></div>
<span class="t" style="left:265.1px;top:621.4px;font-size:13px;color:#a0a0a0;transform:scale(0.844,1.000);">Rotate</span>
<span class="t" style="left:305.7px;top:620.4px;font-size:13px;transform:scale(0.824,1.000);">Point</span>
<div class="a" style="left:337px;top:597px;width:41px;height:19px;background:#fff;border:1px solid;border-color:#a0a0a0 #fff #fff #a0a0a0;box-shadow:inset 1px 1px #696969,inset -1px -1px #e3e3e3;"></div>
<span class="t" style="left:340.4px;top:599.4px;font-size:13px;transform:scale(0.763,1.000);">Frame1</span>
<div class="a" style="left:378px;top:597px;width:39px;height:19px;background:#fff;border:1px solid;border-color:#a0a0a0 #fff #fff #a0a0a0;box-shadow:inset 1px 1px #696969,inset -1px -1px #e3e3e3;"></div>
<span class="t" style="left:380.7px;top:599.4px;font-size:13px;transform:scale(0.799,1.000);">Frame2</span>
<div class="a" style="left:337px;top:620px;width:22px;height:16px;background:#f0f0f0;border:1px solid;border-color:#fff #696969 #696969 #fff;box-shadow:inset -1px -1px #a0a0a0,inset 1px 1px #e3e3e3;"></div>
<span class="t" style="left:340.4px;top:621.4px;font-size:13px;color:#a0a0a0;transform:scale(0.810,1.000);">Set</span>
<div class="a" style="left:360px;top:620px;width:17px;height:16px;background:#f0f0f0;border:1px solid;border-color:#fff #696969 #696969 #fff;box-shadow:inset -1px -1px #a0a0a0,inset 1px 1px #e3e3e3;"></div>
<span class="t" style="left:362.4px;top:621.4px;font-size:13px;color:#a0a0a0;transform:scale(0.801,1.000);">Clr</span>
<div class="a" style="left:378px;top:620px;width:22px;height:16px;background:#f0f0f0;border:1px solid;border-color:#fff #696969 #696969 #fff;box-shadow:inset -1px -1px #a0a0a0,inset 1px 1px #e3e3e3;"></div>
<span class="t" style="left:381.4px;top:621.4px;font-size:13px;color:#a0a0a0;transform:scale(0.810,1.000);">Set</span>
<div class="a" style="left:401px;top:620px;width:17px;height:16px;background:#f0f0f0;border:1px solid;border-color:#fff #696969 #696969 #fff;box-shadow:inset -1px -1px #a0a0a0,inset 1px 1px #e3e3e3;"></div>
<span class="t" style="left:403.5px;top:621.4px;font-size:13px;color:#a0a0a0;transform:scale(0.801,1.000);">Clr</span>
<div class="a" style="left:427px;top:594px;width:90px;height:44px;border:1px solid #a0a0a0;box-shadow:inset 1px 1px #fff,1px 1px #fff;"></div>
<span class="t" style="left:435.4px;top:588.7px;font-size:13px;background:#f0f0f0;padding:0 1px;margin-left:-1px;transform:scale(0.646,1.000);">PSF</span>
<div class="a" style="left:435px;top:604px;width:13px;height:14px;background:#fff;border:1px solid;border-color:#a0a0a0 #fff #fff #a0a0a0;box-shadow:inset 1px 1px #696969,inset -1px -1px #e3e3e3;"></div>
<svg class="a" style="left:435px;top:604px" width="13" height="13"><path d="M3 6.5 L5.5 9 L10 3.5" fill="none" stroke="#000" stroke-width="2"/></svg>
<span class="t" style="left:453.8px;top:603.9px;font-size:13px;transform:scale(0.858,1.000);">Tracking</span>
<div class="a" style="left:435px;top:622px;width:13px;height:14px;background:#fff;border:1px solid;border-color:#a0a0a0 #fff #fff #a0a0a0;box-shadow:inset 1px 1px #696969,inset -1px -1px #e3e3e3;"></div>
<svg class="a" style="left:435px;top:622px" width="13" height="13"><path d="M3 6.5 L5.5 9 L10 3.5" fill="none" stroke="#000" stroke-width="2"/></svg>
<span class="t" style="left:453.8px;top:621.9px;font-size:13px;transform:scale(0.799,1.000);">Photometry</span>
<div class="a" style="left:259px;top:652px;width:263px;height:66px;border:1px solid #a0a0a0;box-shadow:inset 1px 1px #fff,1px 1px #fff;"></div>
<span class="t" style="left:267.4px;top:646.8px;font-size:13px;background:#f0f0f0;padding:0 1px;margin-left:-1px;transform:scale(0.812,1.000);">Star Tracking</span>
<span class="t" style="left:411.5px;top:646.8px;font-size:13px;background:#f0f0f0;padding:0 1px;margin-left:-1px;transform:scale(0.786,1.000);">Passed Point (Frame.)</span>
<svg class="a" style="left:266px;top:663px" width="13" height="13"><circle cx="6.5" cy="6.5" r="6" fill="url(#rgo)"/><circle cx="6.5" cy="6.5" r="5" fill="url(#rgi)"/><circle cx="6.5" cy="6.5" r="4" fill="#fff"/></svg>
<span class="t" style="left:282.8px;top:662.4px;font-size:13px;transform:scale(0.858,1.000);">Anchor</span>
<svg class="a" style="left:266px;top:676px" width="13" height="13"><circle cx="6.5" cy="6.5" r="6" fill="url(#rgo)"/><circle cx="6.5" cy="6.5" r="5" fill="url(#rgi)"/><circle cx="6.5" cy="6.5" r="4" fill="#fff"/><circle cx="6.5" cy="6.5" r="2" fill="#000"/></svg>
<span class="t" style="left:282.8px;top:675.4px;font-size:13px;transform:scale(0.854,1.000);">Drift</span>
<svg class="a" style="left:266px;top:690px" width="13" height="13"><circle cx="6.5" cy="6.5" r="6" fill="url(#rgo)"/><circle cx="6.5" cy="6.5" r="5" fill="url(#rgi)"/><circle cx="6.5" cy="6.5" r="4" fill="#fff"/></svg>
<span class="t" style="left:282.8px;top:689.4px;font-size:13px;transform:scale(0.760,1.000);">OFF</span>
<svg class="a" style="left:266px;top:703px" width="13" height="13"><circle cx="6.5" cy="6.5" r="6" fill="url(#rgo)"/><circle cx="6.5" cy="6.5" r="5" fill="url(#rgi)"/><circle cx="6.5" cy="6.5" r="4" fill="#fff"/></svg>
<span class="t" style="left:282.8px;top:702.9px;font-size:13px;transform:scale(0.777,1.000);">CSV</span>
<div class="a" style="left:329px;top:660px;width:12px;height:12px;background:#fff;border:1px solid;border-color:#a0a0a0 #fff #fff #a0a0a0;box-shadow:inset 1px 1px #696969,inset -1px -1px #e3e3e3;"></div>
<span class="t" style="left:346.7px;top:661.2px;font-size:11px;font-weight:bold;transform:scale(0.778,1.000);">Estimated track</span>
<span class="t" style="left:325.4px;top:673.4px;font-size:13px;transform:scale(0.818,1.000);">Radius</span>
<span class="t" style="left:363.6px;top:673.4px;font-size:13px;transform:scale(0.827,1.000);">Threshold</span>
<div class="a" style="left:316px;top:692px;width:21px;height:18px;background:#fff;border:1px solid;border-color:#a0a0a0 #fff #fff #a0a0a0;box-shadow:inset 1px 1px #696969,inset -1px -1px #e3e3e3;"></div>
<span class="t" style="left:319.5px;top:694.4px;font-size:13px;transform:scale(0.800,1.000);">3</span>
<div class="a" style="left:340px;top:690px;width:16px;height:12px;background:#f0f0f0;border:1px solid;border-color:#fff #696969 #696969 #fff;box-shadow:inset -1px -1px #a0a0a0,inset 1px 1px #e3e3e3;"></div>
<div class="a" style="left:340px;top:702px;width:16px;height:12px;background:#f0f0f0;border:1px solid;border-color:#fff #696969 #696969 #fff;box-shadow:inset -1px -1px #a0a0a0,inset 1px 1px #e3e3e3;"></div>
<svg class="a" style="left:0;top:0;overflow:visible" width="1" height="1"><polygon points="344.6,697.1750000000001 350.6,697.1750000000001 347.6,694.1750000000001" fill="#000"/></svg>
<svg class="a" style="left:0;top:0;overflow:visible" width="1" height="1"><polygon points="344.6,706.125 350.6,706.125 347.6,709.125" fill="#000"/></svg>
<div class="a" style="left:369px;top:692px;width:24px;height:18px;background:#fff;border:1px solid;border-color:#a0a0a0 #fff #fff #a0a0a0;box-shadow:inset 1px 1px #696969,inset -1px -1px #e3e3e3;"></div>
<span class="t" style="left:372.0px;top:694.4px;font-size:13px;transform:scale(0.800,1.000);">50</span>
<div class="a" style="left:393px;top:694px;width:17px;height:10px;background:#f0f0f0;border:1px solid;border-color:#fff #696969 #696969 #fff;box-shadow:inset -1px -1px #a0a0a0,inset 1px 1px #e3e3e3;"></div>
<div class="a" style="left:393px;top:704px;width:17px;height:10px;background:#f0f0f0;border:1px solid;border-color:#fff #696969 #696969 #fff;box-shadow:inset -1px -1px #a0a0a0,inset 1px 1px #e3e3e3;"></div>
<svg class="a" style="left:0;top:0;overflow:visible" width="1" height="1"><polygon points="399.54999999999995,699.9 403.54999999999995,699.9 401.54999999999995,697.9" fill="#000"/></svg>
<svg class="a" style="left:0;top:0;overflow:visible" width="1" height="1"><polygon points="399.54999999999995,707.7 403.54999999999995,707.7 401.54999999999995,709.7" fill="#000"/></svg>
<div class="a" style="left:419px;top:668px;width:44px;height:20px;background:#fff;border:1px solid;border-color:#a0a0a0 #fff #fff #a0a0a0;box-shadow:inset 1px 1px #696969,inset -1px -1px #e3e3e3;"></div>
<span class="t" style="left:422.5px;top:670.9px;font-size:13px;transform:scale(0.763,1.000);">Frame1</span>
<div class="a" style="left:471px;top:668px;width:44px;height:20px;background:#fff;border:1px solid;border-color:#a0a0a0 #fff #fff #a0a0a0;box-shadow:inset 1px 1px #696969,inset -1px -1px #e3e3e3;"></div>
<span class="t" style="left:474.2px;top:670.9px;font-size:13px;transform:scale(0.799,1.000);">Frame2</span>
<div class="a" style="left:419px;top:692px;width:24px;height:22px;background:#f0f0f0;border:1px solid;border-color:#fff #696969 #696969 #fff;box-shadow:inset -1px -1px #a0a0a0,inset 1px 1px #e3e3e3;"></div>
<div class="a" style="left:419px;top:692px;width:24px;height:21px;display:flex;align-items:center;justify-content:center;"><span style="font-size:13px;font-weight:bold;transform:scaleX(0.95);white-space:nowrap;line-height:1;margin-top:1px">Set</span></div>
<div class="a" style="left:443px;top:692px;width:25px;height:22px;background:#f0f0f0;border:1px solid;border-color:#fff #696969 #696969 #fff;box-shadow:inset -1px -1px #a0a0a0,inset 1px 1px #e3e3e3;"></div>
<div class="a" style="left:443px;top:692px;width:25px;height:21px;display:flex;align-items:center;justify-content:center;"><span style="font-size:13px;transform:scaleX(0.8);white-space:nowrap;line-height:1;margin-top:1px">Clr</span></div>
<div class="a" style="left:470px;top:692px;width:27px;height:22px;background:#f0f0f0;border:1px solid;border-color:#fff #696969 #696969 #fff;box-shadow:inset -1px -1px #a0a0a0,inset 1px 1px #e3e3e3;"></div>
<div class="a" style="left:470px;top:692px;width:27px;height:21px;display:flex;align-items:center;justify-content:center;"><span style="font-size:13px;font-weight:bold;transform:scaleX(0.95);white-space:nowrap;line-height:1;margin-top:1px">Set</span></div>
<div class="a" style="left:497px;top:692px;width:23px;height:22px;background:#f0f0f0;border:1px solid;border-color:#fff #696969 #696969 #fff;box-shadow:inset -1px -1px #a0a0a0,inset 1px 1px #e3e3e3;"></div>
<div class="a" style="left:497px;top:692px;width:23px;height:21px;display:flex;align-items:center;justify-content:center;"><span style="font-size:13px;transform:scaleX(0.8);white-space:nowrap;line-height:1;margin-top:1px">Clr</span></div>
<div class="a" style="left:459px;top:541px;width:351px;height:41px;border:1px solid #a0a0a0;box-shadow:inset 1px 1px #fff,1px 1px #fff;"></div>
<span class="t" style="left:467.5px;top:537.3px;font-size:13px;background:#f0f0f0;padding:0 1px;margin-left:-1px;transform:scale(0.789,1.000);">Measurement</span>
<div class="a" style="left:465px;top:552px;width:38px;height:27px;background:#f0f0f0;border:1px solid;border-color:#fff #696969 #696969 #fff;box-shadow:inset -1px -1px #a0a0a0,inset 1px 1px #e3e3e3;"></div>
<span class="t" style="left:466.6px;top:558.3px;font-size:13px;transform:scale(0.799,1.000);">1Frame</span>
<div class="a" style="left:507px;top:552px;width:27px;height:27px;background:#f0f0f0;border:1px solid;border-color:#fff #696969 #696969 #fff;box-shadow:inset -1px -1px #a0a0a0,inset 1px 1px #e3e3e3;"></div>
<span class="t" style="left:510.4px;top:558.3px;font-size:13px;transform:scale(0.831,1.000);">DEL</span>
<div class="a" style="left:537px;top:552px;width:48px;height:27px;background:#f0f0f0;border:1px solid;border-color:#fff #696969 #696969 #fff;box-shadow:inset -1px -1px #a0a0a0,inset 1px 1px #e3e3e3;"></div>
<span class="t" style="left:541.1px;top:558.3px;font-size:13px;font-weight:bold;transform:scale(0.957,1.000);">START</span>
<div class="a" style="left:587px;top:552px;width:40px;height:27px;background:#f0f0f0;border:1px solid;border-color:#fff #696969 #696969 #fff;box-shadow:inset -1px -1px #a0a0a0,inset 1px 1px #e3e3e3;"></div>
<span class="t" style="left:590.8px;top:558.3px;font-size:13px;font-weight:bold;transform:scale(0.948,1.000);">STOP</span>
<div class="a" style="left:629px;top:552px;width:71px;height:27px;background:#f0f0f0;border:1px solid;border-color:#fff #696969 #696969 #fff;box-shadow:inset -1px -1px #a0a0a0,inset 1px 1px #e3e3e3;"></div>
<span class="t" style="left:633.6px;top:558.3px;font-size:13px;transform:scale(0.836,1.000);">DataRemove</span>
<div class="a" style="left:700px;top:552px;width:104px;height:27px;background:#f0f0f0;border:1px solid;border-color:#fff #696969 #696969 #fff;box-shadow:inset -1px -1px #a0a0a0,inset 1px 1px #e3e3e3;"></div>
<span class="t" style="left:706.1px;top:558.3px;font-size:13px;font-weight:bold;transform:scale(0.948,1.000);">SaveToCSV-File</span>
<div class="a" style="left:528px;top:594px;width:118px;height:125px;border:1px solid #a0a0a0;box-shadow:inset 1px 1px #fff,1px 1px #fff;"></div>
<span class="t" style="left:535.6px;top:588.7px;font-size:13px;background:#f0f0f0;padding:0 1px;margin-left:-1px;transform:scale(0.775,1.000);">Form of BKG-Area</span>
<svg class="a" style="left:532px;top:605px" width="13" height="13"><circle cx="6.5" cy="6.5" r="6" fill="url(#rgo)"/><circle cx="6.5" cy="6.5" r="5" fill="url(#rgi)"/><circle cx="6.5" cy="6.5" r="4" fill="#fff"/><circle cx="6.5" cy="6.5" r="2" fill="#000"/></svg>
<span class="t" style="left:549.3px;top:603.9px;font-size:13px;transform:scale(0.836,1.000);">Standard</span>
<svg class="a" style="left:532px;top:621px" width="13" height="13"><circle cx="6.5" cy="6.5" r="6" fill="url(#rgo)"/><circle cx="6.5" cy="6.5" r="5" fill="url(#rgi)"/><circle cx="6.5" cy="6.5" r="4" fill="#fff"/></svg>
<span class="t" style="left:549.3px;top:619.9px;font-size:13px;transform:scale(0.830,1.000);">Avoid Sunlit Face</span>
<svg class="a" style="left:532px;top:637px" width="13" height="13"><circle cx="6.5" cy="6.5" r="6" fill="url(#rgo)"/><circle cx="6.5" cy="6.5" r="5" fill="url(#rgi)"/><circle cx="6.5" cy="6.5" r="4" fill="#fff"/></svg>
<span class="t" style="left:549.3px;top:635.9px;font-size:13px;transform:scale(0.830,1.000);">Meteor/Lunar Limb</span>
<div class="a" style="left:535px;top:654px;width:105px;height:23px;background:#f0f0f0;border:1px solid;border-color:#fff #696969 #696969 #fff;box-shadow:inset -1px -1px #a0a0a0,inset 1px 1px #e3e3e3;"></div>
<span class="t" style="left:548.4px;top:658.9px;font-size:13px;transform:scale(0.827,1.000);">Direction Setting</span>
<span class="t" style="left:539.2px;top:680.5px;font-size:13px;transform:scale(0.862,1.000);">Width</span>
<span class="t" style="left:595.4px;top:680.5px;font-size:13px;transform:scale(0.831,1.000);">Gap</span>
<div class="a" style="left:545px;top:694px;width:24px;height:17px;background:#fff;border:1px solid;border-color:#a0a0a0 #fff #fff #a0a0a0;box-shadow:inset 1px 1px #696969,inset -1px -1px #e3e3e3;"></div>
<span class="t" style="left:547.5px;top:696.5px;font-size:13px;transform:scale(0.800,1.000);">25</span>
<div class="a" style="left:571px;top:692px;width:15px;height:12px;background:#f0f0f0;border:1px solid;border-color:#fff #696969 #696969 #fff;box-shadow:inset -1px -1px #a0a0a0,inset 1px 1px #e3e3e3;"></div>
<div class="a" style="left:571px;top:704px;width:15px;height:12px;background:#f0f0f0;border:1px solid;border-color:#fff #696969 #696969 #fff;box-shadow:inset -1px -1px #a0a0a0,inset 1px 1px #e3e3e3;"></div>
<svg class="a" style="left:0;top:0;overflow:visible" width="1" height="1"><polygon points="575.55,699.8 581.55,699.8 578.55,696.8" fill="#000"/></svg>
<svg class="a" style="left:0;top:0;overflow:visible" width="1" height="1"><polygon points="575.55,708.8 581.55,708.8 578.55,711.8" fill="#000"/></svg>
<div class="a" style="left:595px;top:694px;width:24px;height:17px;background:#fff;border:1px solid;border-color:#a0a0a0 #fff #fff #a0a0a0;box-shadow:inset 1px 1px #696969,inset -1px -1px #e3e3e3;"></div>
<span class="t" style="left:598.4px;top:696.5px;font-size:13px;transform:scale(0.800,1.000);">0</span>
<div class="a" style="left:622px;top:692px;width:16px;height:12px;background:#f0f0f0;border:1px solid;border-color:#fff #696969 #696969 #fff;box-shadow:inset -1px -1px #a0a0a0,inset 1px 1px #e3e3e3;"></div>
<div class="a" style="left:622px;top:704px;width:16px;height:12px;background:#f0f0f0;border:1px solid;border-color:#fff #696969 #696969 #fff;box-shadow:inset -1px -1px #a0a0a0,inset 1px 1px #e3e3e3;"></div>
<svg class="a" style="left:0;top:0;overflow:visible" width="1" height="1"><polygon points="627.25,699.8 633.25,699.8 630.25,696.8" fill="#000"/></svg>
<svg class="a" style="left:0;top:0;overflow:visible" width="1" height="1"><polygon points="627.25,708.8 633.25,708.8 630.25,711.8" fill="#000"/></svg>
<div class="a" style="left:652px;top:594px;width:134px;height:125px;border:1px solid #a0a0a0;box-shadow:inset 1px 1px #fff,1px 1px #fff;"></div>
<span class="t" style="left:659.3px;top:588.7px;font-size:13px;background:#f0f0f0;padding:0 1px;margin-left:-1px;transform:scale(0.812,1.000);">Number of Pixels / Radius</span>
<span class="t" style="left:659.3px;top:600.1px;font-size:13px;transform:scale(0.816,1.000);">Aperture</span>
<span class="t" style="left:723.2px;top:600.1px;font-size:13px;transform:scale(0.860,1.000);">Backgound</span>
<span class="t" style="left:659.3px;top:616.9px;font-size:13px;transform:scale(0.873,1.000);">Even</span>
<span class="t" style="left:659.3px;top:632.5px;font-size:13px;transform:scale(0.848,1.000);">Odd</span>
<span class="t" style="left:659.3px;top:648.5px;font-size:13px;transform:scale(0.793,1.000);">Frame</span>
<div class="a" style="left:694px;top:614px;width:37px;height:15px;background:#fff;border:1px solid;border-color:#a0a0a0 #fff #fff #a0a0a0;box-shadow:inset 1px 1px #696969,inset -1px -1px #e3e3e3;"></div>
<div class="a" style="left:739px;top:614px;width:37px;height:15px;background:#fff;border:1px solid;border-color:#a0a0a0 #fff #fff #a0a0a0;box-shadow:inset 1px 1px #696969,inset -1px -1px #e3e3e3;"></div>
<div class="a" style="left:694px;top:630px;width:37px;height:15px;background:#fff;border:1px solid;border-color:#a0a0a0 #fff #fff #a0a0a0;box-shadow:inset 1px 1px #696969,inset -1px -1px #e3e3e3;"></div>
<div class="a" style="left:739px;top:630px;width:37px;height:15px;background:#fff;border:1px solid;border-color:#a0a0a0 #fff #fff #a0a0a0;box-shadow:inset 1px 1px #696969,inset -1px -1px #e3e3e3;"></div>
<div class="a" style="left:694px;top:647px;width:37px;height:14px;background:#fff;border:1px solid;border-color:#a0a0a0 #fff #fff #a0a0a0;box-shadow:inset 1px 1px #696969,inset -1px -1px #e3e3e3;"></div>
<div class="a" style="left:739px;top:647px;width:37px;height:14px;background:#fff;border:1px solid;border-color:#a0a0a0 #fff #fff #a0a0a0;box-shadow:inset 1px 1px #696969,inset -1px -1px #e3e3e3;"></div>
<div class="a" style="left:659px;top:664px;width:121px;height:14px;background:#f0f0f0;border:1px solid;border-color:#fff #696969 #696969 #fff;box-shadow:inset -1px -1px #a0a0a0,inset 1px 1px #e3e3e3;"></div>
<span class="t" style="left:666.4px;top:664.5px;font-size:13px;color:#a8a8a8;transform:scale(0.838,1.000);">Set  radius to recorded</span>
<span class="t" style="left:663.4px;top:680.5px;font-size:13px;transform:scale(0.826,1.000);">Radius</span>
<span class="t" style="left:711.3px;top:680.5px;font-size:13px;transform:scale(0.827,1.000);">Inner</span>
<span class="t" style="left:747.5px;top:680.5px;font-size:13px;transform:scale(0.803,1.000);">Outer</span>
<div class="a" style="left:660px;top:694px;width:18px;height:17px;background:#fff;border:1px solid;border-color:#a0a0a0 #fff #fff #a0a0a0;box-shadow:inset 1px 1px #696969,inset -1px -1px #e3e3e3;"></div>
<span class="t" style="left:662.8px;top:696.5px;font-size:13px;transform:scale(0.800,1.000);">4</span>
<div class="a" style="left:681px;top:692px;width:16px;height:12px;background:#f0f0f0;border:1px solid;border-color:#fff #696969 #696969 #fff;box-shadow:inset -1px -1px #a0a0a0,inset 1px 1px #e3e3e3;"></div>
<div class="a" style="left:681px;top:704px;width:16px;height:12px;background:#f0f0f0;border:1px solid;border-color:#fff #696969 #696969 #fff;box-shadow:inset -1px -1px #a0a0a0,inset 1px 1px #e3e3e3;"></div>
<svg class="a" style="left:0;top:0;overflow:visible" width="1" height="1"><polygon points="686.25,699.8 692.25,699.8 689.25,696.8" fill="#000"/></svg>
<svg class="a" style="left:0;top:0;overflow:visible" width="1" height="1"><polygon points="686.25,708.8 692.25,708.8 689.25,711.8" fill="#000"/></svg>
<div class="a" style="left:703px;top:694px;width:18px;height:17px;background:#fff;border:1px solid;border-color:#a0a0a0 #fff #fff #a0a0a0;box-shadow:inset 1px 1px #696969,inset -1px -1px #e3e3e3;"></div>
<span class="t" style="left:706.3px;top:696.5px;font-size:13px;transform:scale(0.800,1.000);">5</span>
<div class="a" style="left:724px;top:692px;width:16px;height:12px;background:#f0f0f0;border:1px solid;border-color:#fff #696969 #696969 #fff;box-shadow:inset -1px -1px #a0a0a0,inset 1px 1px #e3e3e3;"></div>
<div class="a" style="left:724px;top:704px;width:16px;height:12px;background:#f0f0f0;border:1px solid;border-color:#fff #696969 #696969 #fff;box-shadow:inset -1px -1px #a0a0a0,inset 1px 1px #e3e3e3;"></div>
<svg class="a" style="left:0;top:0;overflow:visible" width="1" height="1"><polygon points="729.25,699.8 735.25,699.8 732.25,696.8" fill="#000"/></svg>
<svg class="a" style="left:0;top:0;overflow:visible" width="1" height="1"><polygon points="729.25,708.8 735.25,708.8 732.25,711.8" fill="#000"/></svg>
<div class="a" style="left:748px;top:694px;width:18px;height:17px;background:#fff;border:1px solid;border-color:#a0a0a0 #fff #fff #a0a0a0;box-shadow:inset 1px 1px #696969,inset -1px -1px #e3e3e3;"></div>
<span class="t" style="left:750.7px;top:696.5px;font-size:13px;transform:scale(0.800,1.000);">20</span>
<div class="a" style="left:768px;top:692px;width:16px;height:12px;background:#f0f0f0;border:1px solid;border-color:#fff #696969 #696969 #fff;box-shadow:inset -1px -1px #a0a0a0,inset 1px 1px #e3e3e3;"></div>
<div class="a" style="left:768px;top:704px;width:16px;height:12px;background:#f0f0f0;border:1px solid;border-color:#fff #696969 #696969 #fff;box-shadow:inset -1px -1px #a0a0a0,inset 1px 1px #e3e3e3;"></div>
<svg class="a" style="left:0;top:0;overflow:visible" width="1" height="1"><polygon points="773.0,699.8 779.0,699.8 776.0,696.8" fill="#000"/></svg>
<svg class="a" style="left:0;top:0;overflow:visible" width="1" height="1"><polygon points="773.0,708.8 779.0,708.8 776.0,711.8" fill="#000"/></svg>
<div class="a" style="left:813px;top:541px;width:215px;height:44px;border-top:1px solid #fff;border-left:1px solid #fff;"></div>
<div class="a" style="left:819px;top:545px;width:46px;height:38px;background:#f0f0f0;border:1px solid;border-color:#fff #696969 #696969 #fff;box-shadow:inset -1px -1px #a0a0a0,inset 1px 1px #e3e3e3;"></div>
<span class="t" style="left:824.5px;top:557.2px;font-size:13px;transform:scale(0.807,1.000);">Capture</span>
<div class="a" style="left:868px;top:545px;width:61px;height:38px;background:#f0f0f0;border:1px solid;border-color:#fff #696969 #696969 #fff;box-shadow:inset -1px -1px #a0a0a0,inset 1px 1px #e3e3e3;"></div>
<span class="t" style="left:871.6px;top:557.2px;font-size:13px;font-weight:bold;transform:scale(0.940,1.000);">Open AVI</span>
<div class="a" style="left:932px;top:545px;width:55px;height:18px;background:#f0f0f0;border:1px solid;border-color:#fff #696969 #696969 #fff;box-shadow:inset -1px -1px #a0a0a0,inset 1px 1px #e3e3e3;"></div>
<span class="t" style="left:935.4px;top:547.2px;font-size:13px;transform:scale(0.817,1.000);">Load CSV</span>
<div class="a" style="left:932px;top:565px;width:55px;height:18px;background:#f0f0f0;border:1px solid;border-color:#fff #696969 #696969 #fff;box-shadow:inset -1px -1px #a0a0a0,inset 1px 1px #e3e3e3;"></div>
<span class="t" style="left:935.4px;top:567.2px;font-size:13px;transform:scale(0.797,1.000);">Copy CSV</span>
<div class="a" style="left:989px;top:545px;width:33px;height:38px;background:#f0f0f0;border:1px solid;border-color:#fff #696969 #696969 #fff;box-shadow:inset -1px -1px #a0a0a0,inset 1px 1px #e3e3e3;"></div>
<span class="t" style="left:995.6px;top:557.2px;font-size:13px;font-weight:bold;transform:scale(0.884,1.000);">Exit</span>
<div class="a" style="left:796px;top:593px;width:112px;height:23px;background:#f0f0f0;border:1px solid;border-color:#fff #696969 #696969 #fff;box-shadow:inset -1px -1px #a0a0a0,inset 1px 1px #e3e3e3;"></div>
<span class="t" style="left:814.6px;top:596.8px;font-size:13px;transform:scale(0.817,1.000);">Star Image [3D]</span>
<div class="a" style="left:911px;top:593px;width:109px;height:23px;background:#f0f0f0;border:1px solid;border-color:#fff #696969 #696969 #fff;box-shadow:inset -1px -1px #a0a0a0,inset 1px 1px #e3e3e3;"></div>
<span class="t" style="left:916.4px;top:596.8px;font-size:13px;transform:scale(0.819,1.000);">Update Setting Items</span>
<div class="a" style="left:796px;top:623px;width:158px;height:47px;border:1px solid #a0a0a0;box-shadow:inset 1px 1px #fff,1px 1px #fff;"></div>
<span class="t" style="left:804.0px;top:618.2px;font-size:13px;background:#f0f0f0;padding:0 1px;margin-left:-1px;transform:scale(0.813,1.000);">Measurement / View Option</span>
<div class="a" style="left:804px;top:630px;width:72px;height:18px;background:#f0f0f0;border:1px solid;border-color:#fff #696969 #696969 #fff;box-shadow:inset -1px -1px #a0a0a0,inset 1px 1px #e3e3e3;"></div>
<span class="t" style="left:813.8px;top:632.1px;font-size:13px;transform:scale(0.813,1.000);">Show Field</span>
<div class="a" style="left:804px;top:652px;width:12px;height:14px;background:#f0f0f0;border:1px solid;border-color:#a0a0a0 #fff #fff #a0a0a0;box-shadow:inset 1px 1px #696969,inset -1px -1px #e3e3e3;"></div>
<span class="t" style="left:821.3px;top:652.9px;font-size:13px;color:#a0a0a0;transform:scale(0.810,1.000);">Field Measure</span>
<div class="a" style="left:895px;top:642px;width:15px;height:14px;background:#f0f0f0;border:1px solid;border-color:#fff #696969 #696969 #fff;box-shadow:inset -1px -1px #a0a0a0,inset 1px 1px #e3e3e3;"></div>
<div class="a" style="left:895px;top:656px;width:15px;height:13px;background:#f0f0f0;border:1px solid;border-color:#fff #696969 #696969 #fff;box-shadow:inset -1px -1px #a0a0a0,inset 1px 1px #e3e3e3;"></div>
<svg class="a" style="left:0;top:0;overflow:visible" width="1" height="1"><polygon points="899.9,650.125 905.9,650.125 902.9,647.125" fill="#000"/></svg>
<svg class="a" style="left:0;top:0;overflow:visible" width="1" height="1"><polygon points="899.9,660.9749999999999 905.9,660.9749999999999 902.9,663.9749999999999" fill="#000"/></svg>
<span class="t" style="left:911.7px;top:631.7px;font-size:13px;transform:scale(0.824,1.000);">Interval</span>
<div class="a" style="left:912px;top:647px;width:35px;height:19px;background:#fff;border:1px solid;border-color:#a0a0a0 #fff #fff #a0a0a0;box-shadow:inset 1px 1px #696969,inset -1px -1px #e3e3e3;"></div>
<span class="t" style="left:915.6px;top:650.4px;font-size:13px;transform:scale(0.800,1.000);">1</span>
<div class="a" style="left:964px;top:623px;width:55px;height:18px;background:repeating-conic-gradient(#fafafa 0 25%,#e6e6e6 0 50%) 0 0/2px 2px;border:1px solid;border-color:#696969 #fff #fff #696969;box-shadow:inset 1px 1px #a0a0a0;"></div>
<span class="t" style="left:974.6px;top:625.8px;font-size:13px;transform:scale(0.850,1.000);">DShow</span>
<span class="t" style="left:961.9px;top:640.4px;font-size:13px;transform:scale(0.803,1.000);">Frame Rate</span>
<div class="a" style="left:961px;top:653px;width:57px;height:18px;background:#fff;border:1px solid;border-color:#a0a0a0 #fff #fff #a0a0a0;box-shadow:inset 1px 1px #696969,inset -1px -1px #e3e3e3;"></div>
<span class="t" style="left:964.7px;top:655.3px;font-size:13px;transform:scale(0.832,1.000);">11.044941:</span>
<div class="a" style="left:795px;top:680px;width:78px;height:38px;border:1px solid #a0a0a0;box-shadow:inset 1px 1px #fff,1px 1px #fff;"></div>
<span class="t" style="left:803.5px;top:675.9px;font-size:13px;background:#f0f0f0;padding:0 1px;margin-left:-1px;transform:scale(0.765,1.000);">Field Order</span>
<svg class="a" style="left:804px;top:690px" width="13" height="13"><circle cx="6.5" cy="6.5" r="6" fill="url(#rgo)"/><circle cx="6.5" cy="6.5" r="5" fill="url(#rgi)"/><circle cx="6.5" cy="6.5" r="4" fill="#fff"/></svg>
<span class="t" style="left:821.6px;top:689.9px;font-size:13px;transform:scale(0.816,1.000);">Even first</span>
<svg class="a" style="left:804px;top:704px" width="13" height="13"><circle cx="6.5" cy="6.5" r="6" fill="url(#rgo)"/><circle cx="6.5" cy="6.5" r="5" fill="url(#rgi)"/><circle cx="6.5" cy="6.5" r="4" fill="#fff"/><circle cx="6.5" cy="6.5" r="2" fill="#000"/></svg>
<span class="t" style="left:821.6px;top:703.1px;font-size:13px;transform:scale(0.810,1.000);">Odd first</span>
<div class="a" style="left:875px;top:680px;width:53px;height:40px;background:#f0f0f0;border:1px solid;border-color:#fff #696969 #696969 #fff;box-shadow:inset -1px -1px #a0a0a0,inset 1px 1px #e3e3e3;"></div>
<span class="t" style="left:885.9px;top:693.2px;font-size:13px;font-weight:bold;transform:scale(0.885,1.000);">Graph</span>
<div class="a" style="left:930px;top:680px;width:88px;height:38px;border:1px solid #a0a0a0;box-shadow:inset 1px 1px #fff,1px 1px #fff;"></div>
<span class="t" style="left:937.5px;top:675.9px;font-size:13px;background:#f0f0f0;padding:0 1px;margin-left:-1px;transform:scale(0.789,1.000);">Current Object</span>
<div class="a" style="left:933px;top:690px;width:25px;height:21px;background:repeating-conic-gradient(#fafafa 0 25%,#e6e6e6 0 50%) 0 0/2px 2px;border:1px solid;border-color:#696969 #fff #fff #696969;box-shadow:inset 1px 1px #a0a0a0;"></div>
<div class="a" style="left:962px;top:690px;width:25px;height:21px;background:#f0f0f0;border:1px solid;border-color:#fff #696969 #696969 #fff;box-shadow:inset -1px -1px #a0a0a0,inset 1px 1px #e3e3e3;"></div>
<div class="a" style="left:990px;top:690px;width:25px;height:21px;background:#f0f0f0;border:1px solid;border-color:#fff #696969 #696969 #fff;box-shadow:inset -1px -1px #a0a0a0,inset 1px 1px #e3e3e3;"></div>
<span class="t" style="left:941.0px;top:693.4px;font-size:13px;transform:scale(0.800,1.000);">A</span>
<span class="t" style="left:968.5px;top:693.4px;font-size:13px;transform:scale(0.800,1.000);">B</span>
<span class="t" style="left:997.0px;top:693.4px;font-size:13px;transform:scale(0.800,1.000);">C</span>
<div class="a" style="left:933px;top:712px;width:27px;height:4px;background:#a8ccf0;"></div>
<div class="a" style="left:961px;top:712px;width:27px;height:4px;background:#ffff00;"></div>
<div class="a" style="left:990px;top:712px;width:26px;height:4px;background:#ff00ff;"></div>
<span class="t" style="left:140.5px;top:742.1px;font-size:13px;font-weight:bold;transform:scale(0.890,1.000);">Timing process indicator</span>
<div class="a" style="left:20px;top:759px;width:78px;height:19px;background:#00ffff;border:1px solid;border-color:#a0a0a0 #fff #fff #a0a0a0;box-shadow:inset 1px 1px #696969,inset -1px -1px #e3e3e3;"></div>
<span class="t" style="left:22.0px;top:760.4px;font-size:13px;transform:scale(0.847,1.000);">1. Time correct</span>
<div class="a" style="left:100px;top:759px;width:86px;height:19px;background:#00ffff;border:1px solid;border-color:#a0a0a0 #fff #fff #a0a0a0;box-shadow:inset 1px 1px #696969,inset -1px -1px #e3e3e3;"></div>
<span class="t" style="left:102.0px;top:760.4px;font-size:13px;transform:scale(0.837,1.000);">2. XML element</span>
<div class="a" style="left:188px;top:759px;width:70px;height:19px;background:#00ffff;border:1px solid;border-color:#a0a0a0 #fff #fff #a0a0a0;box-shadow:inset 1px 1px #696969,inset -1px -1px #e3e3e3;"></div>
<span class="t" style="left:190.3px;top:760.4px;font-size:13px;transform:scale(0.870,1.000);">3. Light curve</span>
<div class="a" style="left:260px;top:759px;width:78px;height:19px;background:#fff;border:1px solid;border-color:#a0a0a0 #fff #fff #a0a0a0;box-shadow:inset 1px 1px #696969,inset -1px -1px #e3e3e3;"></div>
<span class="t" style="left:262.5px;top:760.4px;font-size:13px;transform:scale(0.842,1.000);">4. Diffraction tit</span>
<div class="a" style="left:340px;top:759px;width:78px;height:19px;background:#fff;border:1px solid;border-color:#a0a0a0 #fff #fff #a0a0a0;box-shadow:inset 1px 1px #696969,inset -1px -1px #e3e3e3;"></div>
<span class="t" style="left:342.4px;top:760.4px;font-size:13px;transform:scale(0.821,1.000);">5. Make report</span>
<span class="t" style="left:435.4px;top:730.6px;font-size:15px;font-weight:bold;transform:scale(0.960,1.000);">AVI filename :</span>
<div class="a" style="left:531px;top:729px;width:495px;height:17px;background:#fff;border:1px solid;border-color:#a0a0a0 #fff #fff #a0a0a0;box-shadow:inset 1px 1px #696969,inset -1px -1px #e3e3e3;"></div>
<span class="t" style="left:534.2px;top:731.3px;font-size:10px;font-family:'Liberation Mono',monospace;color:#000;transform:scale(0.994,1.150);">I:¥A-</span>
<svg class="a" style="left:563.6px;top:730.8px" width="12" height="12"><path d="M4 1.5 h4 M2 4.5 h7 L3 10.5 M5.5 7.5 L8 10.5 h3" fill="none" stroke="#000" stroke-width="1"/></svg>
<svg class="a" style="left:575.5px;top:730.8px" width="12" height="12"><path d="M7 1 L2 11 M3.5 8 Q6 4.5 6.5 9 Q7 11 10.5 8" fill="none" stroke="#000" stroke-width="1"/></svg>
<svg class="a" style="left:587.4px;top:730.8px" width="12" height="12"><path d="M1 7.5 L5 3.5 L11 10 M9.5 1.5 a1.2 1.2 0 1 0 0.1 0" fill="none" stroke="#000" stroke-width="1"/></svg>
<svg class="a" style="left:599.4px;top:730.8px" width="12" height="12"><path d="M3 2.5 Q2 9 4 10.5 M8 3 Q10.5 6 9.5 8.5" fill="none" stroke="#000" stroke-width="1"/></svg>
<svg class="a" style="left:611.3px;top:730.8px" width="12" height="12"><path d="M1 1.5 h5 M1 3.5 h5 M2 5.5 h3 v5.5 M2 7.5 h3 M2 9.5 h3 M7 1 v6 h4 v-6 z M7 3 h4 M7 5 h4 M8 7 L7 11 M10 7 v3.5 h1.5" fill="none" stroke="#000" stroke-width="1"/></svg>
<svg class="a" style="left:623.2px;top:730.8px" width="12" height="12"><path d="M1 2 l1 1 M1 5 l1 1 M1 11 L2.5 8 M4 1 v7 h4 v-7 z M4 3.5 h4 M4 5.7 h4 M5 8 L3.5 11 M7 8 L8.5 11 M10 2 v6 M11.5 1 v10 l-1 -0.5" fill="none" stroke="#000" stroke-width="1"/></svg>
<span class="t" style="left:635.7px;top:731.3px;font-size:10px;font-family:'Liberation Mono',monospace;color:#000;transform:scale(0.991,1.150);">¥</span>
<svg class="a" style="left:641.2px;top:730.8px" width="12" height="12"><path d="M1 1.5 h5 M1 3.5 h5 M2 5.5 h3 v5.5 M2 7.5 h3 M2 9.5 h3 M7 1 v6 h4 v-6 z M7 3 h4 M7 5 h4 M8 7 L7 11 M10 7 v3.5 h1.5" fill="none" stroke="#000" stroke-width="1"/></svg>
<svg class="a" style="left:653.1px;top:730.8px" width="12" height="12"><path d="M1 2 l1 1 M1 5 l1 1 M1 11 L2.5 8 M4 1 v7 h4 v-7 z M4 3.5 h4 M4 5.7 h4 M5 8 L3.5 11 M7 8 L8.5 11 M10 2 v6 M11.5 1 v10 l-1 -0.5" fill="none" stroke="#000" stroke-width="1"/></svg>
<svg class="a" style="left:665.0px;top:730.8px" width="12" height="12"><path d="M1 1.5 h4 M1 3.5 h4 M1 5.5 h4 M1 7.5 h4 v3.5 h-4 z M7 1.5 h4 v4 h-4 M7 5.5 v4.5 q0 1 4.5 1" fill="none" stroke="#000" stroke-width="1"/></svg>
<svg class="a" style="left:677.0px;top:730.8px" width="12" height="12"><path d="M3 1 L1 4 h4 M1 6 h4 M3 4 v7 M1 11 h4 M7 1.5 h4 v2 h-4 M7 5 h5 M9.5 5 v6 M7 7 l1.5 1.5 M12 7 l-1.5 1.5 M7 11 l2 -2 M12 11 l-2 -2" fill="none" stroke="#000" stroke-width="1"/></svg>
<span class="t" style="left:689.4px;top:731.3px;font-size:10px;font-family:'Liberation Mono',monospace;color:#000;transform:scale(0.995,1.150);">2025¥07-12</span>
<svg class="a" style="left:748.6px;top:730.8px" width="12" height="12"><path d="M3 1 v7 q0 3 -2 4 M3 1 h7 v10 l-1 -0.5 M3 4.5 h7 M3 7.5 h7" fill="none" stroke="#000" stroke-width="1"/></svg>
<span class="t" style="left:761.1px;top:731.3px;font-size:10px;font-family:'Liberation Mono',monospace;color:#000;transform:scale(0.995,1.150);">¥20251017-2</span>
<svg class="a" style="left:826.2px;top:730.8px" width="12" height="12"><path d="M6 1 a5 5 0 1 0 0.1 0" fill="none" stroke="#000" stroke-width="1"/></svg>
<span class="t" style="left:838.7px;top:731.3px;font-size:10px;font-family:'Liberation Mono',monospace;color:#000;transform:scale(0.995,1.150);">2001TM94</span>
<svg class="a" style="left:885.9px;top:730.8px" width="12" height="12"><path d="M6 0.5 L5 2 M2 2 h8 v9.5 h-8 z M2 5 h8 M2 8 h8" fill="none" stroke="#000" stroke-width="1"/></svg>
<svg class="a" style="left:897.9px;top:730.8px" width="12" height="12"><path d="M6 0.5 v1.5 M1 4 v-2 h10 v2 M2 6 L10 5 M1 8 h10 M5.5 4 v6 q0 1 6 1" fill="none" stroke="#000" stroke-width="1"/></svg>
<span class="t" style="left:910.3px;top:731.3px;font-size:10px;font-family:'Liberation Mono',monospace;color:#000;transform:scale(0.995,1.150);">¥02_39_30.avi</span>
<span class="t" style="left:531.5px;top:757.5px;font-size:14.5px;transform:scale(0.924,1.000);">SharpCap version:</span>
<div class="a" style="left:651px;top:754px;width:104px;height:20px;background:#fff;border:1px solid;border-color:#a0a0a0 #fff #fff #a0a0a0;box-shadow:inset 1px 1px #696969,inset -1px -1px #e3e3e3;"></div>
<span class="t" style="left:654.8px;top:758.6px;font-size:12px;font-family:'Liberation Mono',monospace;font-weight:bold;transform:scale(0.782,1.100);">4. 0. 9571. 0</span>
<span class="t" style="left:771.0px;top:758.2px;font-size:14.5px;transform:scale(0.937,1.000);">Time stamp indicates</span>
<div class="a" style="left:907px;top:755px;width:112px;height:19px;background:#fff;border:1px solid;border-color:#a0a0a0 #fff #fff #a0a0a0;box-shadow:inset 1px 1px #696969,inset -1px -1px #e3e3e3;"></div>
<span class="t" style="left:911.1px;top:758.0px;font-size:13px;font-weight:bold;transform:scale(0.877,1.000);">FrameEnd</span>
<div class="a" style="left:1047px;top:37px;width:740px;height:425px;background:#fff;"></div>
<span class="t" style="left:1055.6px;top:39.7px;font-size:13px;font-weight:bold;transform:scale(0.996,1.000);">2025 Oct 17: (286106) 2001 TM94 occults UCAC4 615-009841 Observed by Toshihiro Horikawa</span>
<span class="t" style="left:1635.5px;top:39.7px;font-size:13px;transform:scale(0.930,1.000);">/ PSF-Frame Photometry /</span>
<svg class="a" style="left:0;top:0" width="1800" height="470" shape-rendering="crispEdges"><rect x="1098" y="379" width="679" height="1" fill="#00ffff"/><rect x="1098" y="344" width="679" height="1" fill="#00ffff"/><rect x="1098" y="308" width="679" height="1" fill="#00ffff"/><rect x="1098" y="273" width="679" height="1" fill="#00ffff"/><rect x="1098" y="237" width="679" height="1" fill="#00ffff"/><rect x="1098" y="202" width="679" height="1" fill="#00ffff"/><rect x="1098" y="166" width="679" height="1" fill="#00ffff"/><rect x="1098" y="131" width="679" height="1" fill="#00ffff"/><rect x="1098" y="95" width="679" height="1" fill="#00ffff"/><line x1="1098" y1="415.5" x2="1777" y2="415.5" stroke="#000" stroke-width="1" stroke-dasharray="1 42"/><polyline points="1097.5,417.5 1097.5,416.5 1098.5,418.5 1098.5,419.5 1098.5,418.5 1099.5,418.5 1099.5,418.5 1099.5,414.5 1100.5,414.5 1100.5,411.5 1101.5,416.5 1101.5,417.5 1101.5,411.5 1102.5,413.5 1102.5,406.5 1102.5,408.5 1103.5,408.5 1103.5,414.5 1103.5,407.5 1104.5,411.5 1104.5,416.5 1104.5,411.5 1105.5,416.5 1105.5,417.5 1105.5,414.5 1106.5,409.5 1106.5,410.5 1106.5,408.5 1107.5,413.5 1107.5,410.5 1107.5,409.5 1108.5,410.5 1108.5,408.5 1108.5,408.5 1109.5,413.5 1109.5,412.5 1109.5,411.5 1110.5,409.5 1110.5,408.5 1110.5,409.5 1111.5,414.5 1111.5,412.5 1111.5,409.5 1112.5,412.5 1112.5,412.5 1112.5,416.5 1113.5,414.5 1113.5,418.5 1113.5,413.5 1114.5,421.5 1114.5,413.5 1115.5,419.5 1115.5,418.5 1115.5,417.5 1116.5,414.5 1116.5,416.5 1116.5,417.5 1117.5,416.5 1117.5,412.5 1117.5,413.5 1118.5,422.5 1118.5,425.5 1118.5,410.5 1119.5,414.5 1119.5,408.5 1119.5,411.5 1120.5,410.5 1120.5,410.5 1120.5,407.5 1121.5,417.5 1121.5,413.5 1121.5,413.5 1122.5,413.5 1122.5,412.5 1122.5,416.5 1123.5,413.5 1123.5,412.5 1123.5,411.5 1124.5,409.5 1124.5,408.5 1124.5,412.5 1125.5,414.5 1125.5,414.5 1125.5,411.5 1126.5,412.5 1126.5,413.5 1126.5,413.5 1127.5,409.5 1127.5,407.5 1127.5,405.5 1128.5,406.5 1128.5,411.5 1129.5,412.5 1129.5,413.5 1129.5,418.5 1130.5,416.5 1130.5,410.5 1130.5,410.5 1131.5,410.5 1131.5,414.5 1131.5,414.5 1132.5,420.5 1132.5,419.5 1132.5,421.5 1133.5,417.5 1133.5,413.5 1133.5,413.5 1134.5,412.5 1134.5,414.5 1134.5,413.5 1135.5,411.5 1135.5,411.5 1135.5,409.5 1136.5,413.5 1136.5,407.5 1136.5,411.5 1137.5,417.5 1137.5,417.5 1137.5,417.5 1138.5,414.5 1138.5,414.5 1138.5,410.5 1139.5,412.5 1139.5,410.5 1139.5,409.5 1140.5,418.5 1140.5,413.5 1140.5,410.5 1141.5,417.5 1141.5,418.5 1142.5,413.5 1142.5,412.5 1142.5,413.5 1143.5,408.5 1143.5,410.5 1143.5,414.5 1144.5,413.5 1144.5,412.5 1144.5,408.5 1145.5,410.5 1145.5,414.5 1145.5,408.5 1146.5,412.5 1146.5,411.5 1146.5,409.5 1147.5,411.5 1147.5,413.5 1147.5,405.5 1148.5,411.5 1148.5,411.5 1148.5,411.5 1149.5,411.5 1149.5,413.5 1149.5,410.5 1150.5,413.5 1150.5,409.5 1150.5,414.5 1151.5,414.5 1151.5,416.5 1151.5,417.5 1152.5,414.5 1152.5,411.5 1152.5,416.5 1153.5,418.5 1153.5,413.5 1153.5,410.5 1154.5,414.5 1154.5,409.5 1154.5,410.5 1155.5,408.5 1155.5,412.5 1156.5,419.5 1156.5,418.5 1156.5,412.5 1157.5,413.5 1157.5,418.5 1157.5,411.5 1158.5,416.5 1158.5,418.5 1158.5,410.5 1159.5,408.5 1159.5,414.5 1159.5,418.5 1160.5,419.5 1160.5,414.5 1160.5,420.5 1161.5,412.5 1161.5,410.5 1161.5,412.5 1162.5,413.5 1162.5,413.5 1162.5,417.5 1163.5,423.5 1163.5,411.5 1163.5,413.5 1164.5,408.5 1164.5,412.5 1164.5,411.5 1165.5,408.5 1165.5,413.5 1165.5,416.5 1166.5,414.5 1166.5,416.5 1166.5,411.5 1167.5,409.5 1167.5,409.5 1167.5,412.5 1168.5,419.5 1168.5,414.5 1168.5,417.5 1169.5,414.5 1169.5,416.5 1170.5,411.5 1170.5,416.5 1170.5,414.5 1171.5,412.5 1171.5,416.5 1171.5,414.5 1172.5,414.5 1172.5,411.5 1172.5,412.5 1173.5,419.5 1173.5,417.5 1173.5,414.5 1174.5,413.5 1174.5,417.5 1174.5,417.5 1175.5,414.5 1175.5,411.5 1175.5,417.5 1176.5,407.5 1176.5,410.5 1176.5,414.5 1177.5,410.5 1177.5,411.5 1177.5,414.5 1178.5,410.5 1178.5,413.5 1178.5,416.5 1179.5,410.5 1179.5,408.5 1179.5,411.5 1180.5,413.5 1180.5,411.5 1180.5,416.5 1181.5,410.5 1181.5,412.5 1181.5,413.5 1182.5,414.5 1182.5,420.5 1182.5,416.5 1183.5,413.5 1183.5,412.5 1184.5,413.5 1184.5,413.5 1184.5,414.5 1185.5,411.5 1185.5,412.5 1185.5,411.5 1186.5,411.5 1186.5,413.5 1186.5,418.5 1187.5,418.5 1187.5,417.5 1187.5,412.5 1188.5,410.5 1188.5,411.5 1188.5,416.5 1189.5,414.5 1189.5,418.5 1189.5,413.5 1190.5,410.5 1190.5,410.5 1190.5,413.5 1191.5,418.5 1191.5,407.5 1191.5,407.5 1192.5,411.5 1192.5,416.5 1192.5,411.5 1193.5,412.5 1193.5,412.5 1193.5,413.5 1194.5,412.5 1194.5,414.5 1194.5,412.5 1195.5,417.5 1195.5,411.5 1195.5,413.5 1196.5,413.5 1196.5,411.5 1196.5,410.5 1197.5,410.5 1197.5,412.5 1198.5,414.5 1198.5,413.5 1198.5,409.5 1199.5,417.5 1199.5,413.5 1199.5,416.5 1200.5,409.5 1200.5,412.5 1200.5,418.5 1201.5,418.5 1201.5,414.5 1201.5,411.5 1202.5,412.5 1202.5,409.5 1202.5,418.5 1203.5,413.5 1203.5,412.5 1203.5,417.5 1204.5,412.5 1204.5,409.5 1204.5,414.5 1205.5,410.5 1205.5,413.5 1205.5,411.5 1206.5,412.5 1206.5,409.5 1206.5,413.5 1207.5,417.5 1207.5,413.5 1207.5,414.5 1208.5,408.5 1208.5,410.5 1208.5,409.5 1209.5,411.5 1209.5,411.5 1209.5,414.5 1210.5,411.5 1210.5,413.5 1210.5,416.5 1211.5,419.5 1211.5,410.5 1212.5,411.5 1212.5,413.5 1212.5,417.5 1213.5,410.5 1213.5,414.5 1213.5,416.5 1214.5,413.5 1214.5,413.5 1214.5,413.5 1215.5,414.5 1215.5,420.5 1215.5,416.5 1216.5,417.5 1216.5,414.5 1216.5,411.5 1217.5,411.5 1217.5,410.5 1217.5,412.5 1218.5,419.5 1218.5,414.5 1218.5,413.5 1219.5,410.5 1219.5,407.5 1219.5,417.5 1220.5,416.5 1220.5,417.5 1220.5,414.5 1221.5,409.5 1221.5,408.5 1221.5,407.5 1222.5,412.5 1222.5,418.5 1222.5,420.5 1223.5,413.5 1223.5,417.5 1223.5,410.5 1224.5,413.5 1224.5,414.5 1224.5,412.5 1225.5,411.5 1225.5,419.5 1226.5,411.5 1226.5,418.5 1226.5,411.5 1227.5,410.5 1227.5,413.5 1227.5,411.5 1228.5,414.5 1228.5,413.5 1228.5,414.5 1229.5,410.5 1229.5,412.5 1229.5,414.5 1230.5,409.5 1230.5,404.5 1230.5,411.5 1231.5,416.5 1231.5,418.5 1231.5,412.5 1232.5,418.5 1232.5,417.5 1232.5,414.5 1233.5,416.5 1233.5,416.5 1233.5,411.5 1234.5,413.5 1234.5,422.5 1234.5,419.5 1235.5,418.5 1235.5,416.5 1235.5,412.5 1236.5,411.5 1236.5,411.5 1236.5,413.5 1237.5,414.5 1237.5,410.5 1237.5,412.5 1238.5,413.5 1238.5,416.5 1239.5,408.5 1239.5,416.5 1239.5,411.5 1240.5,412.5 1240.5,416.5 1240.5,413.5 1241.5,413.5 1241.5,413.5 1241.5,410.5 1242.5,412.5 1242.5,409.5 1242.5,411.5 1243.5,412.5 1243.5,409.5 1243.5,411.5 1244.5,410.5 1244.5,413.5 1244.5,407.5 1245.5,409.5 1245.5,411.5 1245.5,416.5 1246.5,417.5 1246.5,416.5 1246.5,418.5 1247.5,410.5 1247.5,413.5 1247.5,414.5 1248.5,418.5 1248.5,412.5 1248.5,417.5 1249.5,417.5 1249.5,406.5 1249.5,409.5 1250.5,416.5 1250.5,414.5 1250.5,413.5 1251.5,411.5 1251.5,414.5 1251.5,414.5 1252.5,414.5 1252.5,410.5 1253.5,406.5 1253.5,407.5 1253.5,410.5 1254.5,411.5 1254.5,411.5 1254.5,410.5 1255.5,410.5 1255.5,413.5 1255.5,409.5 1256.5,407.5 1256.5,406.5 1256.5,412.5 1257.5,413.5 1257.5,410.5 1257.5,414.5 1258.5,411.5 1258.5,413.5 1258.5,414.5 1259.5,416.5 1259.5,410.5 1259.5,407.5 1260.5,411.5 1260.5,413.5 1260.5,414.5 1261.5,417.5 1261.5,413.5 1261.5,413.5 1262.5,408.5 1262.5,413.5 1262.5,418.5 1263.5,417.5 1263.5,418.5 1263.5,414.5 1264.5,413.5 1264.5,414.5 1264.5,412.5 1265.5,422.5 1265.5,414.5 1265.5,411.5 1266.5,410.5 1266.5,408.5 1267.5,409.5 1267.5,407.5 1267.5,410.5 1268.5,412.5 1268.5,414.5 1268.5,413.5 1269.5,411.5 1269.5,413.5 1269.5,409.5 1270.5,414.5 1270.5,408.5 1270.5,412.5 1271.5,413.5 1271.5,414.5 1271.5,413.5 1272.5,408.5 1272.5,408.5 1272.5,414.5 1273.5,416.5 1273.5,417.5 1273.5,410.5 1274.5,409.5 1274.5,413.5 1274.5,412.5 1275.5,411.5 1275.5,412.5 1275.5,411.5 1276.5,413.5 1276.5,417.5 1276.5,418.5 1277.5,418.5 1277.5,413.5 1277.5,410.5 1278.5,410.5 1278.5,408.5 1278.5,410.5 1279.5,413.5 1279.5,408.5 1279.5,411.5 1280.5,413.5 1280.5,416.5 1281.5,413.5 1281.5,407.5 1281.5,411.5 1282.5,416.5 1282.5,407.5 1282.5,409.5 1283.5,412.5 1283.5,409.5 1283.5,410.5 1284.5,411.5 1284.5,414.5 1284.5,408.5 1285.5,409.5 1285.5,413.5 1285.5,410.5 1286.5,414.5 1286.5,410.5 1286.5,410.5 1287.5,419.5 1287.5,418.5 1287.5,417.5 1288.5,416.5 1288.5,412.5 1288.5,413.5 1289.5,412.5 1289.5,409.5 1289.5,408.5 1290.5,411.5 1290.5,417.5 1290.5,413.5 1291.5,412.5 1291.5,413.5 1291.5,413.5 1292.5,412.5 1292.5,418.5 1292.5,416.5 1293.5,413.5 1293.5,414.5 1293.5,419.5 1294.5,418.5 1294.5,414.5 1295.5,418.5 1295.5,413.5 1295.5,409.5 1296.5,408.5 1296.5,407.5 1296.5,412.5 1297.5,411.5 1297.5,413.5 1297.5,412.5 1298.5,412.5 1298.5,411.5 1298.5,414.5 1299.5,410.5 1299.5,417.5 1299.5,416.5 1300.5,412.5 1300.5,407.5 1300.5,417.5 1301.5,413.5 1301.5,410.5 1301.5,413.5 1302.5,409.5 1302.5,413.5 1302.5,413.5 1303.5,409.5 1303.5,413.5 1303.5,414.5 1304.5,413.5 1304.5,416.5 1304.5,416.5 1305.5,411.5 1305.5,416.5 1305.5,414.5 1306.5,414.5 1306.5,412.5 1306.5,411.5 1307.5,410.5 1307.5,413.5 1307.5,410.5 1308.5,414.5 1308.5,413.5 1309.5,410.5 1309.5,407.5 1309.5,412.5 1310.5,408.5 1310.5,409.5 1310.5,417.5 1311.5,418.5 1311.5,409.5 1311.5,409.5 1312.5,407.5 1312.5,412.5 1312.5,414.5 1313.5,411.5 1313.5,414.5 1313.5,416.5 1314.5,410.5 1314.5,409.5 1314.5,408.5 1315.5,409.5 1315.5,404.5 1315.5,410.5 1316.5,413.5 1316.5,413.5 1316.5,413.5 1317.5,414.5 1317.5,417.5 1317.5,414.5 1318.5,412.5 1318.5,414.5 1318.5,412.5 1319.5,411.5 1319.5,408.5 1319.5,410.5 1320.5,413.5 1320.5,412.5 1320.5,416.5 1321.5,417.5 1321.5,417.5 1321.5,417.5 1322.5,409.5 1322.5,411.5 1323.5,408.5 1323.5,416.5 1323.5,413.5 1324.5,412.5 1324.5,410.5 1324.5,418.5 1325.5,416.5 1325.5,414.5 1325.5,412.5 1326.5,417.5 1326.5,418.5 1326.5,414.5 1327.5,413.5 1327.5,412.5 1327.5,416.5 1328.5,413.5 1328.5,412.5 1328.5,418.5 1329.5,411.5 1329.5,412.5 1329.5,404.5 1330.5,414.5 1330.5,414.5 1330.5,414.5 1331.5,411.5 1331.5,409.5 1331.5,410.5 1332.5,411.5 1332.5,412.5 1332.5,410.5 1333.5,407.5 1333.5,411.5 1333.5,411.5 1334.5,412.5 1334.5,417.5 1334.5,418.5 1335.5,414.5 1335.5,416.5 1336.5,409.5 1336.5,411.5 1336.5,411.5 1337.5,410.5 1337.5,414.5 1337.5,416.5 1338.5,411.5 1338.5,411.5 1338.5,412.5 1339.5,419.5 1339.5,418.5 1339.5,418.5 1340.5,412.5 1340.5,412.5 1340.5,409.5 1341.5,410.5 1341.5,410.5 1341.5,413.5 1342.5,413.5 1342.5,411.5 1342.5,414.5 1343.5,414.5 1343.5,423.5 1343.5,419.5 1344.5,411.5 1344.5,414.5 1344.5,412.5 1345.5,414.5 1345.5,419.5 1345.5,416.5 1346.5,416.5 1346.5,412.5 1346.5,414.5 1347.5,411.5 1347.5,416.5 1347.5,411.5 1348.5,414.5 1348.5,416.5 1348.5,417.5 1349.5,413.5 1349.5,408.5 1350.5,416.5 1350.5,416.5 1350.5,417.5 1351.5,416.5 1351.5,413.5 1351.5,412.5 1352.5,412.5 1352.5,414.5 1352.5,414.5 1353.5,414.5 1353.5,419.5 1353.5,419.5 1354.5,421.5 1354.5,416.5 1354.5,413.5 1355.5,412.5 1355.5,411.5 1355.5,410.5 1356.5,417.5 1356.5,414.5 1356.5,411.5 1357.5,411.5 1357.5,406.5 1357.5,409.5 1358.5,409.5 1358.5,410.5 1358.5,408.5 1359.5,408.5 1359.5,413.5 1359.5,413.5 1360.5,410.5 1360.5,412.5 1360.5,419.5 1361.5,414.5 1361.5,412.5 1361.5,412.5 1362.5,418.5 1362.5,416.5 1362.5,410.5 1363.5,412.5 1363.5,410.5 1364.5,413.5 1364.5,412.5 1364.5,419.5 1365.5,420.5 1365.5,418.5 1365.5,417.5 1366.5,416.5 1366.5,420.5 1366.5,418.5 1367.5,419.5 1367.5,414.5 1367.5,409.5 1368.5,410.5 1368.5,416.5 1368.5,409.5 1369.5,409.5 1369.5,414.5 1369.5,414.5 1370.5,414.5 1370.5,414.5 1370.5,416.5 1371.5,414.5 1371.5,412.5 1371.5,412.5 1372.5,413.5 1372.5,410.5 1372.5,412.5 1373.5,410.5 1373.5,411.5 1373.5,416.5 1374.5,410.5 1374.5,409.5 1374.5,416.5 1375.5,409.5 1375.5,417.5 1375.5,416.5 1376.5,413.5 1376.5,414.5 1376.5,416.5 1377.5,413.5 1377.5,416.5 1378.5,412.5 1378.5,412.5 1378.5,412.5 1379.5,410.5 1379.5,420.5 1379.5,417.5 1380.5,416.5 1380.5,414.5 1380.5,411.5 1381.5,409.5 1381.5,411.5 1381.5,407.5 1382.5,410.5 1382.5,417.5 1382.5,417.5 1383.5,412.5 1383.5,411.5 1383.5,412.5 1384.5,411.5 1384.5,407.5 1384.5,417.5 1385.5,416.5 1385.5,411.5 1385.5,413.5 1386.5,410.5 1386.5,412.5 1386.5,413.5 1387.5,417.5 1387.5,421.5 1387.5,414.5 1388.5,416.5 1388.5,413.5 1388.5,417.5 1389.5,414.5 1389.5,420.5 1389.5,418.5 1390.5,409.5 1390.5,413.5 1390.5,411.5 1391.5,411.5 1391.5,414.5 1392.5,411.5 1392.5,416.5 1392.5,413.5 1393.5,410.5 1393.5,412.5 1393.5,413.5 1394.5,412.5 1394.5,416.5 1394.5,414.5 1395.5,412.5 1395.5,418.5 1395.5,414.5 1396.5,414.5 1396.5,419.5 1396.5,417.5 1397.5,418.5 1397.5,410.5 1397.5,417.5 1398.5,419.5 1398.5,413.5 1398.5,412.5 1399.5,416.5 1399.5,414.5 1399.5,409.5 1400.5,412.5 1400.5,414.5 1400.5,413.5 1401.5,411.5 1401.5,416.5 1401.5,412.5 1402.5,416.5 1402.5,412.5 1402.5,419.5 1403.5,409.5 1403.5,413.5 1403.5,417.5 1404.5,416.5 1404.5,407.5 1404.5,407.5 1405.5,411.5 1405.5,413.5 1406.5,411.5 1406.5,404.5 1406.5,400.5 1407.5,411.5 1407.5,418.5 1407.5,412.5 1408.5,411.5 1408.5,411.5 1408.5,411.5 1409.5,418.5 1409.5,417.5 1409.5,406.5 1410.5,409.5 1410.5,408.5 1410.5,412.5 1411.5,410.5 1411.5,411.5 1411.5,410.5 1412.5,410.5 1412.5,413.5 1412.5,416.5 1413.5,417.5 1413.5,416.5 1413.5,419.5 1414.5,412.5 1414.5,413.5 1414.5,421.5 1415.5,417.5 1415.5,411.5 1415.5,411.5 1416.5,416.5 1416.5,416.5 1416.5,419.5 1417.5,413.5 1417.5,419.5 1417.5,413.5 1418.5,414.5 1418.5,412.5 1418.5,414.5 1419.5,414.5 1419.5,413.5 1420.5,413.5 1420.5,419.5 1420.5,414.5 1421.5,416.5 1421.5,411.5 1421.5,411.5 1422.5,411.5 1422.5,418.5 1422.5,417.5 1423.5,412.5 1423.5,416.5 1423.5,414.5 1424.5,412.5 1424.5,412.5 1424.5,416.5 1425.5,417.5 1425.5,412.5 1425.5,417.5 1426.5,416.5 1426.5,417.5 1426.5,409.5 1427.5,414.5 1427.5,412.5 1427.5,413.5 1428.5,410.5 1428.5,417.5 1428.5,413.5 1429.5,414.5 1429.5,410.5 1429.5,409.5 1430.5,411.5 1430.5,410.5 1430.5,409.5 1431.5,419.5 1431.5,413.5 1431.5,417.5 1432.5,413.5 1432.5,413.5 1433.5,413.5 1433.5,413.5 1433.5,414.5 1434.5,418.5 1434.5,411.5 1434.5,411.5 1435.5,418.5 1435.5,414.5 1435.5,418.5 1436.5,416.5 1436.5,411.5 1436.5,419.5 1437.5,414.5 1437.5,414.5 1437.5,408.5 1438.5,412.5 1438.5,412.5 1438.5,417.5 1439.5,413.5 1439.5,413.5 1439.5,414.5 1440.5,416.5 1440.5,413.5 1440.5,420.5 1441.5,417.5 1441.5,414.5 1441.5,416.5 1442.5,416.5 1442.5,414.5 1442.5,413.5 1443.5,421.5 1443.5,420.5 1443.5,413.5 1444.5,419.5 1444.5,418.5 1444.5,419.5 1445.5,412.5 1445.5,413.5 1445.5,421.5 1446.5,410.5 1446.5,410.5 1447.5,416.5 1447.5,413.5 1447.5,411.5 1448.5,413.5 1448.5,409.5 1448.5,414.5 1449.5,409.5 1449.5,411.5 1449.5,414.5 1450.5,417.5 1450.5,417.5 1450.5,414.5 1451.5,416.5 1451.5,413.5 1451.5,413.5 1452.5,412.5 1452.5,412.5 1452.5,413.5 1453.5,416.5 1453.5,413.5 1453.5,414.5 1454.5,412.5 1454.5,412.5 1454.5,409.5 1455.5,408.5 1455.5,413.5 1455.5,410.5 1456.5,417.5 1456.5,417.5 1456.5,420.5 1457.5,410.5 1457.5,408.5 1457.5,418.5 1458.5,412.5 1458.5,413.5 1458.5,419.5 1459.5,417.5 1459.5,411.5 1459.5,413.5 1460.5,410.5 1460.5,414.5 1461.5,419.5 1461.5,413.5 1461.5,417.5 1462.5,411.5 1462.5,414.5 1462.5,416.5 1463.5,417.5 1463.5,411.5 1463.5,419.5 1464.5,419.5 1464.5,412.5 1464.5,412.5 1465.5,413.5 1465.5,408.5 1465.5,411.5 1466.5,417.5 1466.5,414.5 1466.5,409.5 1467.5,410.5 1467.5,416.5 1467.5,412.5 1468.5,409.5 1468.5,411.5 1468.5,413.5 1469.5,413.5 1469.5,412.5 1469.5,408.5 1470.5,413.5 1470.5,409.5 1470.5,413.5 1471.5,414.5 1471.5,411.5 1471.5,410.5 1472.5,410.5 1472.5,414.5 1472.5,414.5 1473.5,413.5 1473.5,417.5 1473.5,417.5 1474.5,416.5 1474.5,413.5 1475.5,409.5 1475.5,410.5 1475.5,411.5 1476.5,411.5 1476.5,407.5 1476.5,408.5 1477.5,406.5 1477.5,405.5 1477.5,413.5 1478.5,413.5 1478.5,414.5 1478.5,412.5 1479.5,414.5 1479.5,413.5 1479.5,413.5 1480.5,410.5 1480.5,413.5 1480.5,407.5 1481.5,405.5 1481.5,413.5 1481.5,414.5 1482.5,416.5 1482.5,414.5 1482.5,420.5 1483.5,414.5 1483.5,419.5 1483.5,409.5 1484.5,411.5 1484.5,408.5 1484.5,406.5 1485.5,414.5 1485.5,418.5 1485.5,410.5 1486.5,414.5 1486.5,411.5 1486.5,414.5 1487.5,409.5 1487.5,414.5 1487.5,414.5 1488.5,413.5 1488.5,407.5 1489.5,414.5 1489.5,414.5 1489.5,421.5 1490.5,421.5 1490.5,416.5 1490.5,414.5 1491.5,414.5 1491.5,412.5 1491.5,418.5 1492.5,413.5 1492.5,412.5 1492.5,418.5 1493.5,416.5 1493.5,416.5 1493.5,418.5 1494.5,413.5 1494.5,412.5 1494.5,417.5 1495.5,410.5 1495.5,411.5 1495.5,417.5 1496.5,417.5 1496.5,412.5 1496.5,412.5 1497.5,408.5 1497.5,410.5 1497.5,408.5 1498.5,412.5 1498.5,413.5 1498.5,411.5 1499.5,410.5 1499.5,411.5 1499.5,411.5 1500.5,410.5 1500.5,412.5 1500.5,411.5 1501.5,416.5 1501.5,414.5 1501.5,416.5 1502.5,416.5 1502.5,413.5 1503.5,408.5 1503.5,412.5 1503.5,411.5 1504.5,410.5 1504.5,412.5 1504.5,410.5 1505.5,413.5 1505.5,412.5 1505.5,417.5 1506.5,413.5 1506.5,410.5 1506.5,409.5 1507.5,405.5 1507.5,418.5 1507.5,412.5 1508.5,418.5 1508.5,416.5 1508.5,413.5 1509.5,409.5 1509.5,406.5 1509.5,413.5 1510.5,411.5 1510.5,409.5 1510.5,414.5 1511.5,418.5 1511.5,413.5 1511.5,413.5 1512.5,418.5 1512.5,412.5 1512.5,419.5 1513.5,410.5 1513.5,410.5 1513.5,412.5 1514.5,409.5 1514.5,409.5 1514.5,406.5 1515.5,410.5 1515.5,412.5 1515.5,409.5 1516.5,410.5 1516.5,406.5 1517.5,409.5 1517.5,409.5 1517.5,409.5 1518.5,412.5 1518.5,410.5 1518.5,407.5 1519.5,410.5 1519.5,413.5 1519.5,411.5 1520.5,412.5 1520.5,412.5 1520.5,417.5 1521.5,411.5 1521.5,412.5 1521.5,418.5 1522.5,413.5 1522.5,413.5 1522.5,413.5 1523.5,412.5 1523.5,413.5 1523.5,416.5 1524.5,413.5 1524.5,410.5 1524.5,411.5 1525.5,412.5 1525.5,414.5 1525.5,413.5 1526.5,409.5 1526.5,413.5 1526.5,414.5 1527.5,413.5 1527.5,408.5 1527.5,416.5 1528.5,411.5 1528.5,410.5 1528.5,408.5 1529.5,413.5 1529.5,416.5 1530.5,412.5 1530.5,412.5 1530.5,412.5 1531.5,414.5 1531.5,414.5 1531.5,411.5 1532.5,412.5 1532.5,417.5 1532.5,414.5 1533.5,412.5 1533.5,416.5 1533.5,409.5 1534.5,411.5 1534.5,411.5 1534.5,414.5 1535.5,411.5 1535.5,414.5 1535.5,413.5 1536.5,409.5 1536.5,411.5 1536.5,413.5 1537.5,410.5 1537.5,416.5 1537.5,412.5 1538.5,413.5 1538.5,418.5 1538.5,412.5 1539.5,412.5 1539.5,412.5 1539.5,423.5 1540.5,412.5 1540.5,416.5 1540.5,418.5 1541.5,411.5 1541.5,412.5 1541.5,412.5 1542.5,412.5 1542.5,414.5 1542.5,412.5 1543.5,419.5 1543.5,413.5 1544.5,408.5 1544.5,408.5 1544.5,412.5 1545.5,412.5 1545.5,408.5 1545.5,414.5 1546.5,416.5 1546.5,412.5 1546.5,416.5 1547.5,419.5 1547.5,412.5 1547.5,412.5 1548.5,412.5 1548.5,412.5 1548.5,412.5 1549.5,412.5 1549.5,409.5 1549.5,416.5 1550.5,410.5 1550.5,408.5 1550.5,414.5 1551.5,413.5 1551.5,414.5 1551.5,417.5 1552.5,417.5 1552.5,416.5 1552.5,413.5 1553.5,410.5 1553.5,413.5 1553.5,411.5 1554.5,412.5 1554.5,410.5 1554.5,422.5 1555.5,410.5 1555.5,412.5 1555.5,414.5 1556.5,412.5 1556.5,409.5 1556.5,411.5 1557.5,414.5 1557.5,416.5 1558.5,421.5 1558.5,417.5 1558.5,414.5 1559.5,413.5 1559.5,412.5 1559.5,411.5 1560.5,410.5 1560.5,412.5 1560.5,413.5 1561.5,410.5 1561.5,413.5 1561.5,416.5 1562.5,418.5 1562.5,417.5 1562.5,406.5 1563.5,412.5 1563.5,411.5 1563.5,414.5 1564.5,413.5 1564.5,410.5 1564.5,413.5 1565.5,418.5 1565.5,413.5 1565.5,416.5 1566.5,414.5 1566.5,414.5 1566.5,413.5 1567.5,413.5 1567.5,412.5 1567.5,419.5 1568.5,416.5 1568.5,417.5 1568.5,413.5 1569.5,412.5 1569.5,419.5 1569.5,416.5 1570.5,414.5 1570.5,414.5 1570.5,411.5 1571.5,412.5 1571.5,414.5 1572.5,409.5 1572.5,416.5 1572.5,409.5 1573.5,409.5 1573.5,413.5 1573.5,410.5 1574.5,416.5 1574.5,419.5 1574.5,414.5 1575.5,417.5 1575.5,417.5 1575.5,414.5 1576.5,411.5 1576.5,414.5 1576.5,414.5 1577.5,413.5 1577.5,410.5 1577.5,412.5 1578.5,412.5 1578.5,416.5 1578.5,412.5 1579.5,417.5 1579.5,418.5 1579.5,414.5 1580.5,412.5 1580.5,411.5 1580.5,412.5 1581.5,416.5 1581.5,419.5 1581.5,412.5 1582.5,408.5 1582.5,417.5 1582.5,417.5 1583.5,412.5 1583.5,420.5 1583.5,411.5 1584.5,412.5 1584.5,411.5 1584.5,413.5 1585.5,413.5 1585.5,413.5 1586.5,412.5 1586.5,412.5 1586.5,411.5 1587.5,411.5 1587.5,420.5 1587.5,418.5 1588.5,409.5 1588.5,406.5 1588.5,408.5 1589.5,406.5 1589.5,412.5 1589.5,412.5 1590.5,411.5 1590.5,414.5 1590.5,409.5 1591.5,412.5 1591.5,418.5 1591.5,412.5 1592.5,416.5 1592.5,416.5 1592.5,414.5 1593.5,417.5 1593.5,411.5 1593.5,411.5 1594.5,411.5 1594.5,416.5 1594.5,412.5 1595.5,418.5 1595.5,423.5 1595.5,416.5 1596.5,414.5 1596.5,418.5 1596.5,413.5 1597.5,412.5 1597.5,414.5 1597.5,414.5 1598.5,411.5 1598.5,412.5 1598.5,411.5 1599.5,416.5 1599.5,414.5 1600.5,409.5 1600.5,416.5 1600.5,418.5 1601.5,412.5 1601.5,416.5 1601.5,412.5 1602.5,412.5 1602.5,413.5 1602.5,416.5 1603.5,413.5 1603.5,413.5 1603.5,413.5 1604.5,411.5 1604.5,413.5 1604.5,418.5 1605.5,414.5 1605.5,412.5 1605.5,413.5 1606.5,416.5 1606.5,412.5 1606.5,421.5 1607.5,413.5 1607.5,416.5 1607.5,413.5 1608.5,405.5 1608.5,417.5 1608.5,416.5 1609.5,417.5 1609.5,417.5 1609.5,411.5 1610.5,414.5 1610.5,413.5 1610.5,416.5 1611.5,412.5 1611.5,402.5 1611.5,411.5 1612.5,412.5 1612.5,419.5 1612.5,412.5 1613.5,410.5 1613.5,414.5 1614.5,413.5 1614.5,412.5 1614.5,411.5 1615.5,416.5 1615.5,412.5 1615.5,411.5 1616.5,409.5 1616.5,412.5 1616.5,412.5 1617.5,412.5 1617.5,410.5 1617.5,410.5 1618.5,419.5 1618.5,418.5 1618.5,414.5 1619.5,411.5 1619.5,409.5 1619.5,406.5 1620.5,413.5 1620.5,414.5 1620.5,411.5 1621.5,413.5 1621.5,412.5 1621.5,416.5 1622.5,411.5 1622.5,411.5 1622.5,410.5 1623.5,410.5 1623.5,411.5 1623.5,414.5 1624.5,417.5 1624.5,417.5 1624.5,416.5 1625.5,416.5 1625.5,414.5 1625.5,409.5 1626.5,414.5 1626.5,411.5 1627.5,418.5 1627.5,411.5 1627.5,408.5 1628.5,409.5 1628.5,413.5 1628.5,410.5 1629.5,409.5 1629.5,408.5 1629.5,406.5 1630.5,409.5 1630.5,411.5 1630.5,412.5 1631.5,419.5 1631.5,417.5 1631.5,416.5 1632.5,417.5 1632.5,412.5 1632.5,413.5 1633.5,417.5 1633.5,418.5 1633.5,413.5 1634.5,413.5 1634.5,416.5 1634.5,413.5 1635.5,412.5 1635.5,413.5 1635.5,412.5 1636.5,412.5 1636.5,414.5 1636.5,422.5 1637.5,418.5 1637.5,416.5 1637.5,412.5 1638.5,410.5 1638.5,410.5 1638.5,413.5 1639.5,411.5 1639.5,407.5 1639.5,407.5 1640.5,412.5 1640.5,417.5 1641.5,414.5 1641.5,412.5 1641.5,406.5 1642.5,412.5 1642.5,416.5 1642.5,416.5 1643.5,411.5 1643.5,411.5 1643.5,414.5 1644.5,411.5 1644.5,412.5 1644.5,420.5 1645.5,416.5 1645.5,408.5 1645.5,412.5 1646.5,412.5 1646.5,412.5 1646.5,410.5 1647.5,410.5 1647.5,416.5 1647.5,419.5 1648.5,412.5 1648.5,414.5 1648.5,416.5 1649.5,414.5 1649.5,412.5 1649.5,417.5 1650.5,414.5 1650.5,413.5 1650.5,411.5 1651.5,417.5 1651.5,412.5 1651.5,411.5 1652.5,413.5 1652.5,417.5 1652.5,417.5 1653.5,416.5 1653.5,419.5 1653.5,416.5 1654.5,418.5 1654.5,419.5 1655.5,416.5 1655.5,418.5 1655.5,418.5 1656.5,417.5 1656.5,417.5 1656.5,412.5 1657.5,420.5 1657.5,409.5 1657.5,413.5 1658.5,412.5 1658.5,417.5 1658.5,414.5 1659.5,417.5 1659.5,412.5 1659.5,413.5 1660.5,410.5 1660.5,407.5 1660.5,411.5 1661.5,413.5 1661.5,417.5 1661.5,417.5 1662.5,411.5 1662.5,416.5 1662.5,412.5 1663.5,414.5 1663.5,408.5 1663.5,414.5 1664.5,414.5 1664.5,416.5 1664.5,412.5 1665.5,418.5 1665.5,411.5 1665.5,417.5 1666.5,413.5 1666.5,409.5 1666.5,411.5 1667.5,417.5 1667.5,414.5 1667.5,407.5 1668.5,413.5 1668.5,407.5 1669.5,409.5 1669.5,413.5 1669.5,416.5 1670.5,411.5 1670.5,413.5 1670.5,407.5 1671.5,412.5 1671.5,416.5 1671.5,413.5 1672.5,420.5 1672.5,414.5 1672.5,408.5 1673.5,413.5 1673.5,416.5 1673.5,410.5 1674.5,414.5 1674.5,411.5 1674.5,416.5 1675.5,412.5 1675.5,417.5 1675.5,417.5 1676.5,412.5 1676.5,413.5 1676.5,412.5 1677.5,414.5 1677.5,408.5 1677.5,408.5 1678.5,408.5 1678.5,411.5 1678.5,416.5 1679.5,420.5 1679.5,417.5 1679.5,409.5 1680.5,409.5 1680.5,411.5 1680.5,418.5 1681.5,413.5 1681.5,412.5 1681.5,411.5 1682.5,417.5 1682.5,412.5 1683.5,411.5 1683.5,416.5 1683.5,421.5 1684.5,417.5 1684.5,414.5 1684.5,409.5 1685.5,414.5 1685.5,410.5 1685.5,413.5 1686.5,414.5 1686.5,413.5 1686.5,417.5 1687.5,414.5 1687.5,417.5 1687.5,414.5 1688.5,414.5 1688.5,420.5 1688.5,418.5 1689.5,414.5 1689.5,411.5 1689.5,413.5 1690.5,410.5 1690.5,411.5 1690.5,418.5 1691.5,420.5 1691.5,418.5 1691.5,413.5 1692.5,414.5 1692.5,414.5 1692.5,410.5 1693.5,414.5 1693.5,419.5 1693.5,408.5 1694.5,414.5 1694.5,414.5 1694.5,413.5 1695.5,414.5 1695.5,412.5 1695.5,410.5 1696.5,410.5 1696.5,418.5 1697.5,419.5 1697.5,414.5 1697.5,409.5 1698.5,407.5 1698.5,412.5 1698.5,411.5 1699.5,411.5 1699.5,410.5 1699.5,412.5 1700.5,412.5 1700.5,417.5 1700.5,416.5 1701.5,412.5 1701.5,414.5 1701.5,413.5 1702.5,413.5 1702.5,410.5 1702.5,420.5 1703.5,411.5 1703.5,416.5 1703.5,410.5 1704.5,409.5 1704.5,409.5 1704.5,417.5 1705.5,414.5 1705.5,412.5 1705.5,410.5 1706.5,414.5 1706.5,416.5 1706.5,413.5 1707.5,413.5 1707.5,410.5 1707.5,416.5 1708.5,414.5 1708.5,413.5 1708.5,408.5 1709.5,410.5 1709.5,407.5 1709.5,410.5 1710.5,412.5 1710.5,409.5 1711.5,412.5 1711.5,413.5 1711.5,410.5 1712.5,414.5 1712.5,418.5 1712.5,411.5 1713.5,408.5 1713.5,413.5 1713.5,418.5 1714.5,407.5 1714.5,413.5 1714.5,413.5 1715.5,407.5 1715.5,416.5 1715.5,412.5 1716.5,413.5 1716.5,412.5 1716.5,419.5 1717.5,412.5 1717.5,412.5 1717.5,414.5 1718.5,418.5 1718.5,413.5 1718.5,414.5 1719.5,409.5 1719.5,410.5 1719.5,412.5 1720.5,416.5 1720.5,414.5 1720.5,412.5 1721.5,411.5 1721.5,414.5 1721.5,411.5 1722.5,416.5 1722.5,416.5 1722.5,416.5 1723.5,411.5 1723.5,409.5 1724.5,413.5 1724.5,414.5 1724.5,412.5 1725.5,410.5 1725.5,417.5 1725.5,418.5 1726.5,411.5 1726.5,414.5 1726.5,414.5 1727.5,416.5 1727.5,422.5 1727.5,418.5 1728.5,409.5 1728.5,407.5 1728.5,411.5 1729.5,414.5 1729.5,411.5 1729.5,408.5 1730.5,412.5 1730.5,409.5 1730.5,411.5 1731.5,416.5 1731.5,417.5 1731.5,410.5 1732.5,412.5 1732.5,414.5 1732.5,411.5 1733.5,416.5 1733.5,411.5 1733.5,416.5 1734.5,414.5 1734.5,416.5 1734.5,419.5 1735.5,410.5 1735.5,412.5 1735.5,412.5 1736.5,419.5 1736.5,414.5 1736.5,411.5 1737.5,418.5 1737.5,414.5 1738.5,416.5 1738.5,414.5 1738.5,409.5 1739.5,414.5 1739.5,412.5 1739.5,413.5 1740.5,409.5 1740.5,413.5 1740.5,409.5 1741.5,408.5 1741.5,410.5 1741.5,412.5 1742.5,419.5 1742.5,412.5 1742.5,411.5 1743.5,407.5 1743.5,414.5 1743.5,417.5 1744.5,409.5 1744.5,414.5 1744.5,418.5 1745.5,419.5 1745.5,417.5 1745.5,418.5 1746.5,414.5 1746.5,411.5 1746.5,411.5 1747.5,411.5 1747.5,416.5 1747.5,409.5 1748.5,410.5 1748.5,411.5 1748.5,410.5 1749.5,412.5 1749.5,412.5 1749.5,414.5 1750.5,414.5 1750.5,411.5 1750.5,413.5 1751.5,413.5 1751.5,407.5 1752.5,410.5 1752.5,416.5 1752.5,410.5 1753.5,408.5 1753.5,407.5 1753.5,406.5 1754.5,412.5 1754.5,411.5 1754.5,412.5 1755.5,414.5 1755.5,410.5 1755.5,410.5 1756.5,412.5 1756.5,413.5 1756.5,412.5 1757.5,416.5 1757.5,418.5 1757.5,414.5 1758.5,416.5 1758.5,418.5 1758.5,414.5 1759.5,416.5 1759.5,414.5 1759.5,413.5 1760.5,413.5 1760.5,413.5 1760.5,409.5 1761.5,410.5 1761.5,408.5 1761.5,414.5 1762.5,416.5 1762.5,408.5 1762.5,413.5 1763.5,410.5 1763.5,413.5 1763.5,416.5 1764.5,419.5 1764.5,411.5 1764.5,411.5 1765.5,412.5 1765.5,408.5 1766.5,409.5 1766.5,405.5 1766.5,406.5 1767.5,416.5 1767.5,413.5 1767.5,414.5 1768.5,414.5 1768.5,409.5 1768.5,412.5 1769.5,417.5 1769.5,419.5 1769.5,416.5 1770.5,412.5 1770.5,413.5 1770.5,416.5 1771.5,411.5 1771.5,417.5 1771.5,414.5 1772.5,411.5 1772.5,412.5 1772.5,408.5 1773.5,412.5 1773.5,410.5 1773.5,406.5 1774.5,412.5 1774.5,412.5 1774.5,413.5 1775.5,411.5 1775.5,409.5 1775.5,414.5 1776.5,412.5 1776.5,410.5" fill="none" stroke="#ff70ff" stroke-width="1"/><path d="M1097 417.5h2M1098 418.5h2M1098 418.5h2M1099 418.5h2M1100 414.5h2M1101 416.5h2M1101 411.5h2M1102 406.5h2M1103 408.5h2M1103 407.5h2M1104 416.5h2M1105 416.5h2M1105 414.5h2M1106 410.5h2M1107 413.5h2M1107 409.5h2M1108 408.5h2M1109 413.5h2M1109 411.5h2M1110 408.5h2M1111 414.5h2M1111 409.5h2M1112 412.5h2M1113 414.5h2M1113 413.5h2M1114 413.5h2M1115 418.5h2M1116 414.5h2M1116 417.5h2M1117 412.5h2M1118 422.5h2M1118 410.5h2M1119 408.5h2M1120 410.5h2M1120 407.5h2M1121 413.5h2M1122 413.5h2M1122 416.5h2M1123 412.5h2M1124 409.5h2M1124 412.5h2M1125 414.5h2M1126 412.5h2M1126 413.5h2M1127 407.5h2M1128 406.5h2M1129 412.5h2M1129 418.5h2M1130 410.5h2M1131 410.5h2M1131 414.5h2M1132 419.5h2M1133 417.5h2M1133 413.5h2M1134 414.5h2M1135 411.5h2M1135 409.5h2M1136 407.5h2M1137 417.5h2M1137 417.5h2M1138 414.5h2M1139 412.5h2M1139 409.5h2M1140 413.5h2M1141 417.5h2M1142 413.5h2M1142 413.5h2M1143 410.5h2M1144 413.5h2M1144 408.5h2M1145 414.5h2M1146 412.5h2M1146 409.5h2M1147 413.5h2M1148 411.5h2M1148 411.5h2M1149 413.5h2M1150 413.5h2M1150 414.5h2M1151 416.5h2M1152 414.5h2M1152 416.5h2M1153 413.5h2M1154 414.5h2M1154 410.5h2M1155 412.5h2M1156 418.5h2M1157 413.5h2M1157 411.5h2M1158 418.5h2M1159 408.5h2M1159 418.5h2M1160 414.5h2M1161 412.5h2M1161 412.5h2M1162 413.5h2M1163 423.5h2M1163 413.5h2M1164 412.5h2M1165 408.5h2M1165 416.5h2M1166 416.5h2M1167 409.5h2M1167 412.5h2M1168 414.5h2M1169 414.5h2M1170 411.5h2M1170 414.5h2M1171 416.5h2M1172 414.5h2M1172 412.5h2M1173 417.5h2M1174 413.5h2M1174 417.5h2M1175 411.5h2M1176 407.5h2M1176 414.5h2M1177 411.5h2M1178 410.5h2M1178 416.5h2M1179 408.5h2M1180 413.5h2M1180 416.5h2M1181 412.5h2M1182 414.5h2M1182 416.5h2M1183 412.5h2M1184 413.5h2M1185 411.5h2M1185 411.5h2M1186 413.5h2M1187 418.5h2M1187 412.5h2M1188 411.5h2M1189 414.5h2M1189 413.5h2M1190 410.5h2M1191 418.5h2M1191 407.5h2M1192 416.5h2M1193 412.5h2M1193 413.5h2M1194 414.5h2M1195 417.5h2M1195 413.5h2M1196 411.5h2M1197 410.5h2M1198 414.5h2M1198 409.5h2M1199 413.5h2M1200 409.5h2M1200 418.5h2M1201 414.5h2M1202 412.5h2M1202 418.5h2M1203 412.5h2M1204 412.5h2M1204 414.5h2M1205 413.5h2M1206 412.5h2M1206 413.5h2M1207 413.5h2M1208 408.5h2M1208 409.5h2M1209 411.5h2M1210 411.5h2M1210 416.5h2M1211 410.5h2M1212 413.5h2M1213 410.5h2M1213 416.5h2M1214 413.5h2M1215 414.5h2M1215 416.5h2M1216 414.5h2M1217 411.5h2M1217 412.5h2M1218 414.5h2M1219 410.5h2M1219 417.5h2M1220 417.5h2M1221 409.5h2M1221 407.5h2M1222 418.5h2M1223 413.5h2M1223 410.5h2M1224 414.5h2M1225 411.5h2M1226 411.5h2M1226 411.5h2M1227 413.5h2M1228 414.5h2M1228 414.5h2M1229 412.5h2M1230 409.5h2M1230 411.5h2M1231 418.5h2M1232 418.5h2M1232 414.5h2M1233 416.5h2M1234 413.5h2M1234 419.5h2M1235 416.5h2M1236 411.5h2M1236 413.5h2M1237 410.5h2M1238 413.5h2M1239 408.5h2M1239 411.5h2M1240 416.5h2M1241 413.5h2M1241 410.5h2M1242 409.5h2M1243 412.5h2M1243 411.5h2M1244 413.5h2M1245 409.5h2M1245 416.5h2M1246 416.5h2M1247 410.5h2M1247 414.5h2M1248 412.5h2M1249 417.5h2M1249 409.5h2M1250 414.5h2M1251 411.5h2M1251 414.5h2M1252 410.5h2M1253 407.5h2M1254 411.5h2M1254 410.5h2M1255 413.5h2M1256 407.5h2M1256 412.5h2M1257 410.5h2M1258 411.5h2M1258 414.5h2M1259 410.5h2M1260 411.5h2M1260 414.5h2M1261 413.5h2M1262 408.5h2M1262 418.5h2M1263 418.5h2M1264 413.5h2M1264 412.5h2M1265 414.5h2M1266 410.5h2M1267 409.5h2M1267 410.5h2M1268 414.5h2M1269 411.5h2M1269 409.5h2M1270 408.5h2M1271 413.5h2M1271 413.5h2M1272 408.5h2M1273 416.5h2M1273 410.5h2M1274 413.5h2M1275 411.5h2M1275 411.5h2M1276 417.5h2M1277 418.5h2M1277 410.5h2M1278 408.5h2M1279 413.5h2M1279 411.5h2M1280 416.5h2M1281 407.5h2M1282 416.5h2M1282 409.5h2M1283 409.5h2M1284 411.5h2M1284 408.5h2M1285 413.5h2M1286 414.5h2M1286 410.5h2M1287 418.5h2M1288 416.5h2M1288 413.5h2M1289 409.5h2M1290 411.5h2M1290 413.5h2M1291 413.5h2M1292 412.5h2M1292 416.5h2M1293 414.5h2M1294 418.5h2M1295 418.5h2M1295 409.5h2M1296 407.5h2M1297 411.5h2M1297 412.5h2M1298 411.5h2M1299 410.5h2M1299 416.5h2M1300 407.5h2M1301 413.5h2M1301 413.5h2M1302 413.5h2M1303 409.5h2M1303 414.5h2M1304 416.5h2M1305 411.5h2M1305 414.5h2M1306 412.5h2M1307 410.5h2M1307 410.5h2M1308 413.5h2M1309 407.5h2M1310 408.5h2M1310 417.5h2M1311 409.5h2M1312 407.5h2M1312 414.5h2M1313 414.5h2M1314 410.5h2M1314 408.5h2M1315 404.5h2M1316 413.5h2M1316 413.5h2M1317 417.5h2M1318 412.5h2M1318 412.5h2M1319 408.5h2M1320 413.5h2M1320 416.5h2M1321 417.5h2M1322 409.5h2M1323 408.5h2M1323 413.5h2M1324 410.5h2M1325 416.5h2M1325 412.5h2M1326 418.5h2M1327 413.5h2M1327 416.5h2M1328 412.5h2M1329 411.5h2M1329 404.5h2M1330 414.5h2M1331 411.5h2M1331 410.5h2M1332 412.5h2M1333 407.5h2M1333 411.5h2M1334 417.5h2M1335 414.5h2M1336 409.5h2M1336 411.5h2M1337 414.5h2M1338 411.5h2M1338 412.5h2M1339 418.5h2M1340 412.5h2M1340 409.5h2M1341 410.5h2M1342 413.5h2M1342 414.5h2M1343 423.5h2M1344 411.5h2M1344 412.5h2M1345 419.5h2M1346 416.5h2M1346 414.5h2M1347 416.5h2M1348 414.5h2M1348 417.5h2M1349 408.5h2M1350 416.5h2M1351 416.5h2M1351 412.5h2M1352 414.5h2M1353 414.5h2M1353 419.5h2M1354 416.5h2M1355 412.5h2M1355 410.5h2M1356 414.5h2M1357 411.5h2M1357 409.5h2M1358 410.5h2M1359 408.5h2M1359 413.5h2M1360 412.5h2M1361 414.5h2M1361 412.5h2M1362 416.5h2M1363 412.5h2M1364 413.5h2M1364 419.5h2M1365 418.5h2M1366 416.5h2M1366 418.5h2M1367 414.5h2M1368 410.5h2M1368 409.5h2M1369 414.5h2M1370 414.5h2M1370 416.5h2M1371 412.5h2M1372 413.5h2M1372 412.5h2M1373 411.5h2M1374 410.5h2M1374 416.5h2M1375 417.5h2M1376 413.5h2M1376 416.5h2M1377 416.5h2M1378 412.5h2M1379 410.5h2M1379 417.5h2M1380 414.5h2M1381 409.5h2M1381 407.5h2M1382 417.5h2M1383 412.5h2M1383 412.5h2M1384 407.5h2M1385 416.5h2M1385 413.5h2M1386 412.5h2M1387 417.5h2M1387 414.5h2M1388 413.5h2M1389 414.5h2M1389 418.5h2M1390 413.5h2M1391 411.5h2M1392 411.5h2M1392 413.5h2M1393 412.5h2M1394 412.5h2M1394 414.5h2M1395 418.5h2M1396 414.5h2M1396 417.5h2M1397 410.5h2M1398 419.5h2M1398 412.5h2M1399 414.5h2M1400 412.5h2M1400 413.5h2M1401 416.5h2M1402 416.5h2M1402 419.5h2M1403 413.5h2M1404 416.5h2M1404 407.5h2M1405 413.5h2M1406 404.5h2M1407 411.5h2M1407 412.5h2M1408 411.5h2M1409 418.5h2M1409 406.5h2M1410 408.5h2M1411 410.5h2M1411 410.5h2M1412 413.5h2M1413 417.5h2M1413 419.5h2M1414 413.5h2M1415 417.5h2M1415 411.5h2M1416 416.5h2M1417 413.5h2M1417 413.5h2M1418 412.5h2M1419 414.5h2M1420 413.5h2M1420 414.5h2M1421 411.5h2M1422 411.5h2M1422 417.5h2M1423 416.5h2M1424 412.5h2M1424 416.5h2M1425 412.5h2M1426 416.5h2M1426 409.5h2M1427 412.5h2M1428 410.5h2M1428 413.5h2M1429 410.5h2M1430 411.5h2M1430 409.5h2M1431 413.5h2M1432 413.5h2M1433 413.5h2M1433 414.5h2M1434 411.5h2M1435 418.5h2M1435 418.5h2M1436 411.5h2M1437 414.5h2M1437 408.5h2M1438 412.5h2M1439 413.5h2M1439 414.5h2M1440 413.5h2M1441 417.5h2M1441 416.5h2M1442 414.5h2M1443 421.5h2M1443 413.5h2M1444 418.5h2M1445 412.5h2M1445 421.5h2M1446 410.5h2M1447 413.5h2M1448 413.5h2M1448 414.5h2M1449 411.5h2M1450 417.5h2M1450 414.5h2M1451 413.5h2M1452 412.5h2M1452 413.5h2M1453 413.5h2M1454 412.5h2M1454 409.5h2M1455 413.5h2M1456 417.5h2M1456 420.5h2M1457 408.5h2M1458 412.5h2M1458 419.5h2M1459 411.5h2M1460 410.5h2M1461 419.5h2M1461 417.5h2M1462 414.5h2M1463 417.5h2M1463 419.5h2M1464 412.5h2M1465 413.5h2M1465 411.5h2M1466 414.5h2M1467 410.5h2M1467 412.5h2M1468 411.5h2M1469 413.5h2M1469 408.5h2M1470 409.5h2M1471 414.5h2M1471 410.5h2M1472 414.5h2M1473 413.5h2M1473 417.5h2M1474 413.5h2M1475 410.5h2M1476 411.5h2M1476 408.5h2M1477 405.5h2M1478 413.5h2M1478 412.5h2M1479 413.5h2M1480 410.5h2M1480 407.5h2M1481 413.5h2M1482 416.5h2M1482 420.5h2M1483 419.5h2M1484 411.5h2M1484 406.5h2M1485 418.5h2M1486 414.5h2M1486 414.5h2M1487 414.5h2M1488 413.5h2M1489 414.5h2M1489 421.5h2M1490 416.5h2M1491 414.5h2M1491 418.5h2M1492 412.5h2M1493 416.5h2M1493 418.5h2M1494 412.5h2M1495 410.5h2M1495 417.5h2M1496 412.5h2M1497 408.5h2M1497 408.5h2M1498 413.5h2M1499 410.5h2M1499 411.5h2M1500 412.5h2M1501 416.5h2M1501 416.5h2M1502 413.5h2M1503 412.5h2M1504 410.5h2M1504 410.5h2M1505 412.5h2M1506 413.5h2M1506 409.5h2M1507 418.5h2M1508 418.5h2M1508 413.5h2M1509 406.5h2M1510 411.5h2M1510 414.5h2M1511 413.5h2M1512 418.5h2M1512 419.5h2M1513 410.5h2M1514 409.5h2M1514 406.5h2M1515 412.5h2M1516 410.5h2M1517 409.5h2M1517 409.5h2M1518 410.5h2M1519 410.5h2M1519 411.5h2M1520 412.5h2M1521 411.5h2M1521 418.5h2M1522 413.5h2M1523 412.5h2M1523 416.5h2M1524 410.5h2M1525 412.5h2M1525 413.5h2M1526 413.5h2M1527 413.5h2M1527 416.5h2M1528 410.5h2M1529 413.5h2M1530 412.5h2M1530 412.5h2M1531 414.5h2M1532 412.5h2M1532 414.5h2M1533 416.5h2M1534 411.5h2M1534 414.5h2M1535 414.5h2M1536 409.5h2M1536 413.5h2M1537 416.5h2M1538 413.5h2M1538 412.5h2M1539 412.5h2M1540 412.5h2M1540 418.5h2M1541 412.5h2M1542 412.5h2M1542 412.5h2M1543 413.5h2M1544 408.5h2M1545 412.5h2M1545 414.5h2M1546 412.5h2M1547 419.5h2M1547 412.5h2M1548 412.5h2M1549 412.5h2M1549 416.5h2M1550 408.5h2M1551 413.5h2M1551 417.5h2M1552 416.5h2M1553 410.5h2M1553 411.5h2M1554 410.5h2M1555 410.5h2M1555 414.5h2M1556 409.5h2M1557 414.5h2M1558 421.5h2M1558 414.5h2M1559 412.5h2M1560 410.5h2M1560 413.5h2M1561 413.5h2M1562 418.5h2M1562 406.5h2M1563 411.5h2M1564 413.5h2M1564 413.5h2M1565 413.5h2M1566 414.5h2M1566 413.5h2M1567 412.5h2M1568 416.5h2M1568 413.5h2M1569 419.5h2M1570 414.5h2M1570 411.5h2M1571 414.5h2M1572 416.5h2M1573 409.5h2M1573 410.5h2M1574 419.5h2M1575 417.5h2M1575 414.5h2M1576 414.5h2M1577 413.5h2M1577 412.5h2M1578 416.5h2M1579 417.5h2M1579 414.5h2M1580 411.5h2M1581 416.5h2M1581 412.5h2M1582 417.5h2M1583 412.5h2M1583 411.5h2M1584 411.5h2M1585 413.5h2M1586 412.5h2M1586 411.5h2M1587 420.5h2M1588 409.5h2M1588 408.5h2M1589 412.5h2M1590 411.5h2M1590 409.5h2M1591 418.5h2M1592 416.5h2M1592 414.5h2M1593 411.5h2M1594 411.5h2M1594 412.5h2M1595 423.5h2M1596 414.5h2M1596 413.5h2M1597 414.5h2M1598 411.5h2M1598 411.5h2M1599 414.5h2M1600 416.5h2M1601 412.5h2M1601 412.5h2M1602 413.5h2M1603 413.5h2M1603 413.5h2M1604 413.5h2M1605 414.5h2M1605 413.5h2M1606 412.5h2M1607 413.5h2M1607 413.5h2M1608 417.5h2M1609 417.5h2M1609 411.5h2M1610 413.5h2M1611 412.5h2M1611 411.5h2M1612 419.5h2M1613 410.5h2M1614 413.5h2M1614 411.5h2M1615 412.5h2M1616 409.5h2M1616 412.5h2M1617 410.5h2M1618 419.5h2M1618 414.5h2M1619 409.5h2M1620 413.5h2M1620 411.5h2M1621 412.5h2M1622 411.5h2M1622 410.5h2M1623 411.5h2M1624 417.5h2M1624 416.5h2M1625 414.5h2M1626 414.5h2M1627 418.5h2M1627 408.5h2M1628 413.5h2M1629 409.5h2M1629 406.5h2M1630 411.5h2M1631 419.5h2M1631 416.5h2M1632 412.5h2M1633 417.5h2M1633 413.5h2M1634 416.5h2M1635 412.5h2M1635 412.5h2M1636 414.5h2M1637 418.5h2M1637 412.5h2M1638 410.5h2M1639 411.5h2M1639 407.5h2M1640 417.5h2M1641 412.5h2M1642 412.5h2M1642 416.5h2M1643 411.5h2M1644 411.5h2M1644 420.5h2M1645 408.5h2M1646 412.5h2M1646 410.5h2M1647 416.5h2M1648 412.5h2M1648 416.5h2M1649 412.5h2M1650 414.5h2M1650 411.5h2M1651 412.5h2M1652 413.5h2M1652 417.5h2M1653 419.5h2M1654 418.5h2M1655 416.5h2M1655 418.5h2M1656 417.5h2M1657 420.5h2M1657 413.5h2M1658 417.5h2M1659 417.5h2M1659 413.5h2M1660 407.5h2M1661 413.5h2M1661 417.5h2M1662 416.5h2M1663 414.5h2M1663 414.5h2M1664 416.5h2M1665 418.5h2M1665 417.5h2M1666 409.5h2M1667 417.5h2M1667 407.5h2M1668 407.5h2M1669 413.5h2M1670 411.5h2M1670 407.5h2M1671 416.5h2M1672 420.5h2M1672 408.5h2M1673 416.5h2M1674 414.5h2M1674 416.5h2M1675 417.5h2M1676 412.5h2M1676 412.5h2M1677 408.5h2M1678 408.5h2M1678 416.5h2M1679 417.5h2M1680 409.5h2M1680 418.5h2M1681 412.5h2M1682 417.5h2M1683 411.5h2M1683 421.5h2M1684 414.5h2M1685 414.5h2M1685 413.5h2M1686 413.5h2M1687 414.5h2M1687 414.5h2M1688 420.5h2M1689 414.5h2M1689 413.5h2M1690 411.5h2M1691 420.5h2M1691 413.5h2M1692 414.5h2M1693 414.5h2M1693 408.5h2M1694 414.5h2M1695 414.5h2M1695 410.5h2M1696 418.5h2M1697 414.5h2M1698 407.5h2M1698 411.5h2M1699 410.5h2M1700 412.5h2M1700 416.5h2M1701 414.5h2M1702 413.5h2M1702 420.5h2M1703 416.5h2M1704 409.5h2M1704 417.5h2M1705 412.5h2M1706 414.5h2M1706 413.5h2M1707 410.5h2M1708 414.5h2M1708 408.5h2M1709 407.5h2M1710 412.5h2M1711 412.5h2M1711 410.5h2M1712 418.5h2M1713 408.5h2M1713 418.5h2M1714 413.5h2M1715 407.5h2M1715 412.5h2M1716 412.5h2M1717 412.5h2M1717 414.5h2M1718 413.5h2M1719 409.5h2M1719 412.5h2M1720 414.5h2M1721 411.5h2M1721 411.5h2M1722 416.5h2M1723 411.5h2M1724 413.5h2M1724 412.5h2M1725 417.5h2M1726 411.5h2M1726 414.5h2M1727 422.5h2M1728 409.5h2M1728 411.5h2M1729 411.5h2M1730 412.5h2M1730 411.5h2M1731 417.5h2M1732 412.5h2M1732 411.5h2M1733 411.5h2M1734 414.5h2M1734 419.5h2M1735 412.5h2M1736 419.5h2M1736 411.5h2M1737 414.5h2M1738 414.5h2M1739 414.5h2M1739 413.5h2M1740 413.5h2M1741 408.5h2M1741 412.5h2M1742 412.5h2M1743 407.5h2M1743 417.5h2M1744 414.5h2M1745 419.5h2M1745 418.5h2M1746 411.5h2M1747 411.5h2M1747 409.5h2M1748 411.5h2M1749 412.5h2M1749 414.5h2M1750 411.5h2M1751 413.5h2M1752 410.5h2M1752 410.5h2M1753 407.5h2M1754 412.5h2M1754 412.5h2M1755 410.5h2M1756 412.5h2M1756 412.5h2M1757 418.5h2M1758 416.5h2M1758 414.5h2M1759 414.5h2M1760 413.5h2M1760 409.5h2M1761 408.5h2M1762 416.5h2M1762 413.5h2M1763 413.5h2M1764 419.5h2M1764 411.5h2M1765 408.5h2M1766 405.5h2M1767 416.5h2M1767 414.5h2M1768 409.5h2M1769 417.5h2M1769 416.5h2M1770 413.5h2M1771 411.5h2M1771 414.5h2M1772 412.5h2M1773 412.5h2M1773 406.5h2M1774 412.5h2M1775 411.5h2M1775 414.5h2M1776 410.5h2" stroke="#ff00ff" stroke-width="2" fill="none"/><polyline points="1097.5,354.5 1097.5,342.5 1098.5,348.5 1098.5,351.5 1098.5,333.5 1099.5,345.5 1099.5,351.5 1099.5,366.5 1100.5,333.5 1100.5,351.5 1101.5,333.5 1101.5,354.5 1101.5,330.5 1102.5,345.5 1102.5,345.5 1102.5,315.5 1103.5,327.5 1103.5,345.5 1103.5,345.5 1104.5,348.5 1104.5,318.5 1104.5,336.5 1105.5,354.5 1105.5,333.5 1105.5,351.5 1106.5,333.5 1106.5,354.5 1106.5,345.5 1107.5,312.5 1107.5,321.5 1107.5,360.5 1108.5,330.5 1108.5,345.5 1108.5,339.5 1109.5,351.5 1109.5,345.5 1109.5,342.5 1110.5,339.5 1110.5,348.5 1110.5,348.5 1111.5,360.5 1111.5,333.5 1111.5,336.5 1112.5,351.5 1112.5,327.5 1112.5,342.5 1113.5,348.5 1113.5,351.5 1113.5,342.5 1114.5,360.5 1114.5,330.5 1115.5,333.5 1115.5,339.5 1115.5,339.5 1116.5,330.5 1116.5,342.5 1116.5,324.5 1117.5,339.5 1117.5,348.5 1117.5,339.5 1118.5,339.5 1118.5,336.5 1118.5,336.5 1119.5,324.5 1119.5,345.5 1119.5,354.5 1120.5,324.5 1120.5,327.5 1120.5,330.5 1121.5,318.5 1121.5,336.5 1121.5,336.5 1122.5,345.5 1122.5,324.5 1122.5,357.5 1123.5,339.5 1123.5,348.5 1123.5,336.5 1124.5,348.5 1124.5,357.5 1124.5,330.5 1125.5,345.5 1125.5,339.5 1125.5,351.5 1126.5,354.5 1126.5,327.5 1126.5,333.5 1127.5,333.5 1127.5,339.5 1127.5,345.5 1128.5,345.5 1128.5,348.5 1129.5,330.5 1129.5,339.5 1129.5,387.5 1130.5,297.5 1130.5,336.5 1130.5,360.5 1131.5,339.5 1131.5,333.5 1131.5,354.5 1132.5,336.5 1132.5,318.5 1132.5,348.5 1133.5,339.5 1133.5,357.5 1133.5,345.5 1134.5,339.5 1134.5,333.5 1134.5,342.5 1135.5,348.5 1135.5,339.5 1135.5,354.5 1136.5,330.5 1136.5,324.5 1136.5,360.5 1137.5,333.5 1137.5,348.5 1137.5,342.5 1138.5,333.5 1138.5,324.5 1138.5,342.5 1139.5,339.5 1139.5,354.5 1139.5,360.5 1140.5,327.5 1140.5,345.5 1140.5,345.5 1141.5,348.5 1141.5,369.5 1142.5,333.5 1142.5,357.5 1142.5,342.5 1143.5,351.5 1143.5,333.5 1143.5,327.5 1144.5,336.5 1144.5,327.5 1144.5,348.5 1145.5,363.5 1145.5,342.5 1145.5,354.5 1146.5,345.5 1146.5,330.5 1146.5,321.5 1147.5,336.5 1147.5,363.5 1147.5,339.5 1148.5,345.5 1148.5,354.5 1148.5,336.5 1149.5,333.5 1149.5,327.5 1149.5,330.5 1150.5,348.5 1150.5,342.5 1150.5,336.5 1151.5,342.5 1151.5,351.5 1151.5,345.5 1152.5,345.5 1152.5,339.5 1152.5,348.5 1153.5,360.5 1153.5,354.5 1153.5,327.5 1154.5,345.5 1154.5,360.5 1154.5,333.5 1155.5,342.5 1155.5,318.5 1156.5,351.5 1156.5,327.5 1156.5,366.5 1157.5,351.5 1157.5,351.5 1157.5,348.5 1158.5,342.5 1158.5,333.5 1158.5,318.5 1159.5,330.5 1159.5,336.5 1159.5,348.5 1160.5,330.5 1160.5,348.5 1160.5,330.5 1161.5,351.5 1161.5,327.5 1161.5,339.5 1162.5,342.5 1162.5,339.5 1162.5,360.5 1163.5,345.5 1163.5,354.5 1163.5,345.5 1164.5,339.5 1164.5,336.5 1164.5,348.5 1165.5,321.5 1165.5,342.5 1165.5,336.5 1166.5,351.5 1166.5,354.5 1166.5,327.5 1167.5,348.5 1167.5,342.5 1167.5,351.5 1168.5,342.5 1168.5,336.5 1168.5,351.5 1169.5,351.5 1169.5,339.5 1170.5,342.5 1170.5,327.5 1170.5,345.5 1171.5,342.5 1171.5,339.5 1171.5,348.5 1172.5,345.5 1172.5,318.5 1172.5,333.5 1173.5,339.5 1173.5,345.5 1173.5,336.5 1174.5,357.5 1174.5,357.5 1174.5,345.5 1175.5,363.5 1175.5,348.5 1175.5,342.5 1176.5,342.5 1176.5,357.5 1176.5,348.5 1177.5,336.5 1177.5,330.5 1177.5,339.5 1178.5,354.5 1178.5,348.5 1178.5,354.5 1179.5,345.5 1179.5,351.5 1179.5,339.5 1180.5,342.5 1180.5,345.5 1180.5,360.5 1181.5,333.5 1181.5,336.5 1181.5,348.5 1182.5,342.5 1182.5,354.5 1182.5,348.5 1183.5,333.5 1183.5,339.5 1184.5,342.5 1184.5,348.5 1184.5,360.5 1185.5,354.5 1185.5,354.5 1185.5,339.5 1186.5,369.5 1186.5,348.5 1186.5,339.5 1187.5,354.5 1187.5,342.5 1187.5,336.5 1188.5,348.5 1188.5,351.5 1188.5,345.5 1189.5,342.5 1189.5,348.5 1189.5,357.5 1190.5,330.5 1190.5,369.5 1190.5,366.5 1191.5,348.5 1191.5,345.5 1191.5,342.5 1192.5,333.5 1192.5,330.5 1192.5,336.5 1193.5,351.5 1193.5,345.5 1193.5,333.5 1194.5,339.5 1194.5,339.5 1194.5,354.5 1195.5,327.5 1195.5,369.5 1195.5,360.5 1196.5,348.5 1196.5,354.5 1196.5,351.5 1197.5,342.5 1197.5,357.5 1198.5,354.5 1198.5,339.5 1198.5,345.5 1199.5,336.5 1199.5,363.5 1199.5,363.5 1200.5,357.5 1200.5,339.5 1200.5,336.5 1201.5,339.5 1201.5,351.5 1201.5,345.5 1202.5,345.5 1202.5,351.5 1202.5,354.5 1203.5,381.5 1203.5,348.5 1203.5,342.5 1204.5,348.5 1204.5,336.5 1204.5,348.5 1205.5,366.5 1205.5,348.5 1205.5,342.5 1206.5,333.5 1206.5,357.5 1206.5,345.5 1207.5,360.5 1207.5,351.5 1207.5,351.5 1208.5,357.5 1208.5,360.5 1208.5,336.5 1209.5,354.5 1209.5,336.5 1209.5,360.5 1210.5,330.5 1210.5,330.5 1210.5,354.5 1211.5,348.5 1211.5,348.5 1212.5,354.5 1212.5,345.5 1212.5,363.5 1213.5,366.5 1213.5,348.5 1213.5,345.5 1214.5,333.5 1214.5,351.5 1214.5,354.5 1215.5,333.5 1215.5,330.5 1215.5,342.5 1216.5,336.5 1216.5,348.5 1216.5,354.5 1217.5,342.5 1217.5,354.5 1217.5,342.5 1218.5,339.5 1218.5,324.5 1218.5,354.5 1219.5,360.5 1219.5,345.5 1219.5,366.5 1220.5,348.5 1220.5,363.5 1220.5,348.5 1221.5,357.5 1221.5,357.5 1221.5,315.5 1222.5,348.5 1222.5,354.5 1222.5,342.5 1223.5,336.5 1223.5,354.5 1223.5,330.5 1224.5,354.5 1224.5,339.5 1224.5,345.5 1225.5,351.5 1225.5,342.5 1226.5,351.5 1226.5,357.5 1226.5,342.5 1227.5,351.5 1227.5,348.5 1227.5,345.5 1228.5,342.5 1228.5,348.5 1228.5,333.5 1229.5,339.5 1229.5,336.5 1229.5,324.5 1230.5,330.5 1230.5,366.5 1230.5,327.5 1231.5,357.5 1231.5,339.5 1231.5,345.5 1232.5,357.5 1232.5,336.5 1232.5,366.5 1233.5,372.5 1233.5,345.5 1233.5,345.5 1234.5,360.5 1234.5,330.5 1234.5,342.5 1235.5,363.5 1235.5,342.5 1235.5,354.5 1236.5,324.5 1236.5,348.5 1236.5,357.5 1237.5,348.5 1237.5,345.5 1237.5,348.5 1238.5,345.5 1238.5,345.5 1239.5,339.5 1239.5,357.5 1239.5,339.5 1240.5,333.5 1240.5,339.5 1240.5,345.5 1241.5,318.5 1241.5,342.5 1241.5,357.5 1242.5,363.5 1242.5,351.5 1242.5,363.5 1243.5,360.5 1243.5,354.5 1243.5,339.5 1244.5,336.5 1244.5,348.5 1244.5,351.5 1245.5,363.5 1245.5,336.5 1245.5,330.5 1246.5,336.5 1246.5,354.5 1246.5,348.5 1247.5,342.5 1247.5,357.5 1247.5,354.5 1248.5,363.5 1248.5,342.5 1248.5,342.5 1249.5,339.5 1249.5,336.5 1249.5,336.5 1250.5,333.5 1250.5,360.5 1250.5,345.5 1251.5,351.5 1251.5,345.5 1251.5,336.5 1252.5,348.5 1252.5,369.5 1253.5,351.5 1253.5,333.5 1253.5,339.5 1254.5,360.5 1254.5,348.5 1254.5,351.5 1255.5,357.5 1255.5,342.5 1255.5,357.5 1256.5,342.5 1256.5,333.5 1256.5,333.5 1257.5,336.5 1257.5,348.5 1257.5,354.5 1258.5,333.5 1258.5,351.5 1258.5,354.5 1259.5,330.5 1259.5,351.5 1259.5,354.5 1260.5,357.5 1260.5,348.5 1260.5,345.5 1261.5,357.5 1261.5,339.5 1261.5,354.5 1262.5,348.5 1262.5,336.5 1262.5,342.5 1263.5,351.5 1263.5,357.5 1263.5,336.5 1264.5,339.5 1264.5,351.5 1264.5,348.5 1265.5,342.5 1265.5,342.5 1265.5,339.5 1266.5,345.5 1266.5,342.5 1267.5,339.5 1267.5,345.5 1267.5,345.5 1268.5,333.5 1268.5,348.5 1268.5,348.5 1269.5,336.5 1269.5,348.5 1269.5,345.5 1270.5,357.5 1270.5,333.5 1270.5,348.5 1271.5,354.5 1271.5,357.5 1271.5,363.5 1272.5,366.5 1272.5,345.5 1272.5,333.5 1273.5,348.5 1273.5,333.5 1273.5,339.5 1274.5,333.5 1274.5,342.5 1274.5,336.5 1275.5,330.5 1275.5,342.5 1275.5,348.5 1276.5,360.5 1276.5,348.5 1276.5,360.5 1277.5,348.5 1277.5,333.5 1277.5,339.5 1278.5,342.5 1278.5,348.5 1278.5,381.5 1279.5,336.5 1279.5,363.5 1279.5,348.5 1280.5,354.5 1280.5,339.5 1281.5,348.5 1281.5,360.5 1281.5,339.5 1282.5,336.5 1282.5,345.5 1282.5,348.5 1283.5,369.5 1283.5,360.5 1283.5,342.5 1284.5,330.5 1284.5,333.5 1284.5,342.5 1285.5,351.5 1285.5,357.5 1285.5,339.5 1286.5,339.5 1286.5,354.5 1286.5,363.5 1287.5,330.5 1287.5,351.5 1287.5,354.5 1288.5,342.5 1288.5,357.5 1288.5,345.5 1289.5,342.5 1289.5,345.5 1289.5,339.5 1290.5,360.5 1290.5,357.5 1290.5,354.5 1291.5,342.5 1291.5,330.5 1291.5,348.5 1292.5,354.5 1292.5,336.5 1292.5,351.5 1293.5,354.5 1293.5,354.5 1293.5,369.5 1294.5,348.5 1294.5,336.5 1295.5,336.5 1295.5,345.5 1295.5,333.5 1296.5,342.5 1296.5,354.5 1296.5,342.5 1297.5,330.5 1297.5,363.5 1297.5,369.5 1298.5,351.5 1298.5,336.5 1298.5,363.5 1299.5,354.5 1299.5,348.5 1299.5,330.5 1300.5,354.5 1300.5,360.5 1300.5,327.5 1301.5,357.5 1301.5,345.5 1301.5,348.5 1302.5,336.5 1302.5,348.5 1302.5,360.5 1303.5,348.5 1303.5,348.5 1303.5,366.5 1304.5,363.5 1304.5,345.5 1304.5,345.5 1305.5,348.5 1305.5,354.5 1305.5,357.5 1306.5,345.5 1306.5,360.5 1306.5,354.5 1307.5,330.5 1307.5,369.5 1307.5,339.5 1308.5,348.5 1308.5,348.5 1309.5,354.5 1309.5,372.5 1309.5,339.5 1310.5,354.5 1310.5,351.5 1310.5,363.5 1311.5,366.5 1311.5,351.5 1311.5,339.5 1312.5,336.5 1312.5,345.5 1312.5,345.5 1313.5,342.5 1313.5,360.5 1313.5,366.5 1314.5,372.5 1314.5,357.5 1314.5,330.5 1315.5,345.5 1315.5,336.5 1315.5,357.5 1316.5,354.5 1316.5,342.5 1316.5,333.5 1317.5,342.5 1317.5,351.5 1317.5,372.5 1318.5,354.5 1318.5,363.5 1318.5,342.5 1319.5,354.5 1319.5,345.5 1319.5,345.5 1320.5,333.5 1320.5,330.5 1320.5,330.5 1321.5,318.5 1321.5,348.5 1321.5,351.5 1322.5,342.5 1322.5,342.5 1323.5,360.5 1323.5,360.5 1323.5,333.5 1324.5,357.5 1324.5,339.5 1324.5,330.5 1325.5,336.5 1325.5,339.5 1325.5,339.5 1326.5,333.5 1326.5,336.5 1326.5,333.5 1327.5,327.5 1327.5,357.5 1327.5,336.5 1328.5,363.5 1328.5,363.5 1328.5,339.5 1329.5,342.5 1329.5,345.5 1329.5,330.5 1330.5,333.5 1330.5,345.5 1330.5,357.5 1331.5,342.5 1331.5,345.5 1331.5,369.5 1332.5,360.5 1332.5,342.5 1332.5,348.5 1333.5,348.5 1333.5,336.5 1333.5,345.5 1334.5,330.5 1334.5,312.5 1334.5,336.5 1335.5,360.5 1335.5,342.5 1336.5,351.5 1336.5,342.5 1336.5,366.5 1337.5,363.5 1337.5,330.5 1337.5,360.5 1338.5,339.5 1338.5,354.5 1338.5,345.5 1339.5,348.5 1339.5,333.5 1339.5,351.5 1340.5,348.5 1340.5,354.5 1340.5,360.5 1341.5,357.5 1341.5,348.5 1341.5,345.5 1342.5,351.5 1342.5,351.5 1342.5,345.5 1343.5,360.5 1343.5,369.5 1343.5,357.5 1344.5,339.5 1344.5,363.5 1344.5,324.5 1345.5,351.5 1345.5,333.5 1345.5,351.5 1346.5,366.5 1346.5,342.5 1346.5,342.5 1347.5,339.5 1347.5,375.5 1347.5,336.5 1348.5,351.5 1348.5,345.5 1348.5,348.5 1349.5,348.5 1349.5,336.5 1350.5,327.5 1350.5,345.5 1350.5,354.5 1351.5,333.5 1351.5,336.5 1351.5,345.5 1352.5,354.5 1352.5,354.5 1352.5,351.5 1353.5,348.5 1353.5,339.5 1353.5,366.5 1354.5,351.5 1354.5,339.5 1354.5,363.5 1355.5,357.5 1355.5,360.5 1355.5,348.5 1356.5,345.5 1356.5,351.5 1356.5,315.5 1357.5,342.5 1357.5,351.5 1357.5,342.5 1358.5,330.5 1358.5,354.5 1358.5,378.5 1359.5,345.5 1359.5,327.5 1359.5,354.5 1360.5,348.5 1360.5,351.5 1360.5,351.5 1361.5,354.5 1361.5,351.5 1361.5,333.5 1362.5,339.5 1362.5,351.5 1362.5,369.5 1363.5,369.5 1363.5,345.5 1364.5,345.5 1364.5,345.5 1364.5,345.5 1365.5,342.5 1365.5,339.5 1365.5,354.5 1366.5,351.5 1366.5,342.5 1366.5,363.5 1367.5,360.5 1367.5,354.5 1367.5,351.5 1368.5,348.5 1368.5,348.5 1368.5,345.5 1369.5,348.5 1369.5,324.5 1369.5,360.5 1370.5,351.5 1370.5,363.5 1370.5,366.5 1371.5,363.5 1371.5,363.5 1371.5,360.5 1372.5,315.5 1372.5,348.5 1372.5,351.5 1373.5,330.5 1373.5,351.5 1373.5,354.5 1374.5,348.5 1374.5,330.5 1374.5,348.5 1375.5,351.5 1375.5,351.5 1375.5,351.5 1376.5,342.5 1376.5,360.5 1376.5,342.5 1377.5,354.5 1377.5,360.5 1378.5,336.5 1378.5,342.5 1378.5,369.5 1379.5,351.5 1379.5,336.5 1379.5,336.5 1380.5,342.5 1380.5,342.5 1380.5,324.5 1381.5,345.5 1381.5,345.5 1381.5,324.5 1382.5,351.5 1382.5,345.5 1382.5,330.5 1383.5,321.5 1383.5,357.5 1383.5,342.5 1384.5,342.5 1384.5,345.5 1384.5,339.5 1385.5,327.5 1385.5,345.5 1385.5,351.5 1386.5,324.5 1386.5,336.5 1386.5,324.5 1387.5,357.5 1387.5,345.5 1387.5,336.5 1388.5,336.5 1388.5,360.5 1388.5,360.5 1389.5,342.5 1389.5,336.5 1389.5,348.5 1390.5,351.5 1390.5,345.5 1390.5,351.5 1391.5,363.5 1391.5,351.5 1392.5,342.5 1392.5,351.5 1392.5,345.5 1393.5,354.5 1393.5,333.5 1393.5,357.5 1394.5,333.5 1394.5,330.5 1394.5,348.5 1395.5,339.5 1395.5,354.5 1395.5,327.5 1396.5,342.5 1396.5,354.5 1396.5,345.5 1397.5,363.5 1397.5,354.5 1397.5,351.5 1398.5,351.5 1398.5,360.5 1398.5,336.5 1399.5,348.5 1399.5,327.5 1399.5,354.5 1400.5,348.5 1400.5,351.5 1400.5,336.5 1401.5,321.5 1401.5,348.5 1401.5,333.5 1402.5,336.5 1402.5,336.5 1402.5,339.5 1403.5,357.5 1403.5,357.5 1403.5,354.5 1404.5,333.5 1404.5,327.5 1404.5,360.5 1405.5,351.5 1405.5,336.5 1406.5,336.5 1406.5,333.5 1406.5,345.5 1407.5,342.5 1407.5,351.5 1407.5,345.5 1408.5,342.5 1408.5,369.5 1408.5,345.5 1409.5,336.5 1409.5,354.5 1409.5,354.5 1410.5,333.5 1410.5,345.5 1410.5,360.5 1411.5,342.5 1411.5,336.5 1411.5,348.5 1412.5,351.5 1412.5,354.5 1412.5,357.5 1413.5,345.5 1413.5,354.5 1413.5,351.5 1414.5,339.5 1414.5,348.5 1414.5,339.5 1415.5,333.5 1415.5,342.5 1415.5,330.5 1416.5,360.5 1416.5,345.5 1416.5,336.5 1417.5,348.5 1417.5,357.5 1417.5,354.5 1418.5,336.5 1418.5,354.5 1418.5,342.5 1419.5,357.5 1419.5,351.5 1420.5,354.5 1420.5,348.5 1420.5,348.5 1421.5,342.5 1421.5,342.5 1421.5,339.5 1422.5,342.5 1422.5,342.5 1422.5,327.5 1423.5,342.5 1423.5,345.5 1423.5,351.5 1424.5,363.5 1424.5,348.5 1424.5,339.5 1425.5,348.5 1425.5,339.5 1425.5,342.5 1426.5,348.5 1426.5,339.5 1426.5,342.5 1427.5,345.5 1427.5,363.5 1427.5,357.5 1428.5,351.5 1428.5,336.5 1428.5,348.5 1429.5,345.5 1429.5,336.5 1429.5,357.5 1430.5,354.5 1430.5,336.5 1430.5,345.5 1431.5,336.5 1431.5,357.5 1431.5,330.5 1432.5,345.5 1432.5,336.5 1433.5,348.5 1433.5,336.5 1433.5,324.5 1434.5,354.5 1434.5,324.5 1434.5,339.5 1435.5,339.5 1435.5,324.5 1435.5,354.5 1436.5,324.5 1436.5,324.5 1436.5,360.5 1437.5,345.5 1437.5,333.5 1437.5,345.5 1438.5,339.5 1438.5,351.5 1438.5,345.5 1439.5,363.5 1439.5,354.5 1439.5,342.5 1440.5,348.5 1440.5,354.5 1440.5,345.5 1441.5,342.5 1441.5,339.5 1441.5,330.5 1442.5,363.5 1442.5,351.5 1442.5,351.5 1443.5,345.5 1443.5,348.5 1443.5,360.5 1444.5,330.5 1444.5,336.5 1444.5,357.5 1445.5,339.5 1445.5,357.5 1445.5,348.5 1446.5,330.5 1446.5,345.5 1447.5,339.5 1447.5,363.5 1447.5,330.5 1448.5,354.5 1448.5,363.5 1448.5,336.5 1449.5,351.5 1449.5,351.5 1449.5,348.5 1450.5,348.5 1450.5,345.5 1450.5,333.5 1451.5,357.5 1451.5,342.5 1451.5,324.5 1452.5,354.5 1452.5,348.5 1452.5,351.5 1453.5,345.5 1453.5,351.5 1453.5,318.5 1454.5,345.5 1454.5,375.5 1454.5,345.5 1455.5,333.5 1455.5,345.5 1455.5,357.5 1456.5,354.5 1456.5,345.5 1456.5,345.5 1457.5,363.5 1457.5,351.5 1457.5,351.5 1458.5,363.5 1458.5,360.5 1458.5,375.5 1459.5,330.5 1459.5,357.5 1459.5,330.5 1460.5,345.5 1460.5,363.5 1461.5,357.5 1461.5,357.5 1461.5,321.5 1462.5,342.5 1462.5,342.5 1462.5,339.5 1463.5,330.5 1463.5,330.5 1463.5,339.5 1464.5,327.5 1464.5,336.5 1464.5,342.5 1465.5,345.5 1465.5,348.5 1465.5,354.5 1466.5,354.5 1466.5,351.5 1466.5,339.5 1467.5,351.5 1467.5,336.5 1467.5,324.5 1468.5,348.5 1468.5,342.5 1468.5,342.5 1469.5,354.5 1469.5,321.5 1469.5,348.5 1470.5,336.5 1470.5,327.5 1470.5,333.5 1471.5,348.5 1471.5,333.5 1471.5,330.5 1472.5,354.5 1472.5,369.5 1472.5,336.5 1473.5,345.5 1473.5,342.5 1473.5,363.5 1474.5,351.5 1474.5,363.5 1475.5,333.5 1475.5,330.5 1475.5,339.5 1476.5,351.5 1476.5,336.5 1476.5,351.5 1477.5,342.5 1477.5,390.5 1477.5,351.5 1478.5,360.5 1478.5,360.5 1478.5,345.5 1479.5,363.5 1479.5,342.5 1479.5,351.5 1480.5,348.5 1480.5,348.5 1480.5,363.5 1481.5,348.5 1481.5,327.5 1481.5,339.5 1482.5,333.5 1482.5,345.5 1482.5,345.5 1483.5,330.5 1483.5,351.5 1483.5,345.5 1484.5,354.5 1484.5,354.5 1484.5,348.5 1485.5,339.5 1485.5,339.5 1485.5,345.5 1486.5,348.5 1486.5,345.5 1486.5,339.5 1487.5,333.5 1487.5,342.5 1487.5,351.5 1488.5,351.5 1488.5,354.5 1489.5,339.5 1489.5,360.5 1489.5,336.5 1490.5,330.5 1490.5,354.5 1490.5,333.5 1491.5,342.5 1491.5,345.5 1491.5,354.5 1492.5,354.5 1492.5,369.5 1492.5,333.5 1493.5,333.5 1493.5,339.5 1493.5,351.5 1494.5,318.5 1494.5,345.5 1494.5,327.5 1495.5,345.5 1495.5,354.5 1495.5,357.5 1496.5,342.5 1496.5,348.5 1496.5,354.5 1497.5,366.5 1497.5,348.5 1497.5,333.5 1498.5,354.5 1498.5,360.5 1498.5,336.5 1499.5,363.5 1499.5,360.5 1499.5,342.5 1500.5,333.5 1500.5,339.5 1500.5,357.5 1501.5,342.5 1501.5,348.5 1501.5,324.5 1502.5,345.5 1502.5,342.5 1503.5,339.5 1503.5,345.5 1503.5,345.5 1504.5,342.5 1504.5,354.5 1504.5,342.5 1505.5,333.5 1505.5,342.5 1505.5,324.5 1506.5,330.5 1506.5,363.5 1506.5,354.5 1507.5,345.5 1507.5,336.5 1507.5,318.5 1508.5,351.5 1508.5,351.5 1508.5,360.5 1509.5,330.5 1509.5,354.5 1509.5,333.5 1510.5,309.5 1510.5,330.5 1510.5,366.5 1511.5,342.5 1511.5,360.5 1511.5,345.5 1512.5,339.5 1512.5,330.5 1512.5,345.5 1513.5,357.5 1513.5,348.5 1513.5,345.5 1514.5,342.5 1514.5,345.5 1514.5,348.5 1515.5,345.5 1515.5,330.5 1515.5,348.5 1516.5,366.5 1516.5,342.5 1517.5,339.5 1517.5,342.5 1517.5,342.5 1518.5,327.5 1518.5,348.5 1518.5,333.5 1519.5,324.5 1519.5,336.5 1519.5,333.5 1520.5,342.5 1520.5,324.5 1520.5,351.5 1521.5,345.5 1521.5,357.5 1521.5,351.5 1522.5,324.5 1522.5,351.5 1522.5,327.5 1523.5,324.5 1523.5,372.5 1523.5,360.5 1524.5,348.5 1524.5,351.5 1524.5,351.5 1525.5,345.5 1525.5,342.5 1525.5,327.5 1526.5,324.5 1526.5,354.5 1526.5,351.5 1527.5,354.5 1527.5,348.5 1527.5,354.5 1528.5,339.5 1528.5,336.5 1528.5,345.5 1529.5,351.5 1529.5,333.5 1530.5,342.5 1530.5,336.5 1530.5,333.5 1531.5,333.5 1531.5,351.5 1531.5,342.5 1532.5,345.5 1532.5,348.5 1532.5,348.5 1533.5,345.5 1533.5,345.5 1533.5,363.5 1534.5,339.5 1534.5,354.5 1534.5,333.5 1535.5,339.5 1535.5,342.5 1535.5,330.5 1536.5,342.5 1536.5,339.5 1536.5,357.5 1537.5,339.5 1537.5,345.5 1537.5,357.5 1538.5,351.5 1538.5,345.5 1538.5,351.5 1539.5,354.5 1539.5,348.5 1539.5,363.5 1540.5,342.5 1540.5,351.5 1540.5,345.5 1541.5,342.5 1541.5,327.5 1541.5,339.5 1542.5,342.5 1542.5,345.5 1542.5,351.5 1543.5,330.5 1543.5,357.5 1544.5,345.5 1544.5,333.5 1544.5,351.5 1545.5,342.5 1545.5,351.5 1545.5,360.5 1546.5,357.5 1546.5,342.5 1546.5,342.5 1547.5,333.5 1547.5,345.5 1547.5,348.5 1548.5,345.5 1548.5,354.5 1548.5,354.5 1549.5,333.5 1549.5,339.5 1549.5,339.5 1550.5,351.5 1550.5,363.5 1550.5,351.5 1551.5,351.5 1551.5,363.5 1551.5,351.5 1552.5,363.5 1552.5,342.5 1552.5,345.5 1553.5,339.5 1553.5,354.5 1553.5,339.5 1554.5,342.5 1554.5,342.5 1554.5,357.5 1555.5,369.5 1555.5,357.5 1555.5,333.5 1556.5,354.5 1556.5,342.5 1556.5,339.5 1557.5,336.5 1557.5,333.5 1558.5,333.5 1558.5,336.5 1558.5,345.5 1559.5,324.5 1559.5,306.5 1559.5,342.5 1560.5,339.5 1560.5,324.5 1560.5,360.5 1561.5,342.5 1561.5,339.5 1561.5,336.5 1562.5,348.5 1562.5,342.5 1562.5,330.5 1563.5,345.5 1563.5,330.5 1563.5,348.5 1564.5,354.5 1564.5,351.5 1564.5,339.5 1565.5,333.5 1565.5,351.5 1565.5,360.5 1566.5,345.5 1566.5,342.5 1566.5,366.5 1567.5,339.5 1567.5,336.5 1567.5,351.5 1568.5,357.5 1568.5,351.5 1568.5,348.5 1569.5,321.5 1569.5,336.5 1569.5,357.5 1570.5,336.5 1570.5,342.5 1570.5,324.5 1571.5,357.5 1571.5,348.5 1572.5,336.5 1572.5,339.5 1572.5,387.5 1573.5,348.5 1573.5,357.5 1573.5,348.5 1574.5,360.5 1574.5,354.5 1574.5,339.5 1575.5,351.5 1575.5,342.5 1575.5,351.5 1576.5,345.5 1576.5,345.5 1576.5,342.5 1577.5,342.5 1577.5,357.5 1577.5,351.5 1578.5,345.5 1578.5,354.5 1578.5,342.5 1579.5,342.5 1579.5,354.5 1579.5,342.5 1580.5,354.5 1580.5,336.5 1580.5,360.5 1581.5,345.5 1581.5,339.5 1581.5,351.5 1582.5,333.5 1582.5,351.5 1582.5,348.5 1583.5,345.5 1583.5,327.5 1583.5,345.5 1584.5,351.5 1584.5,372.5 1584.5,339.5 1585.5,351.5 1585.5,345.5 1586.5,339.5 1586.5,330.5 1586.5,333.5 1587.5,336.5 1587.5,333.5 1587.5,357.5 1588.5,384.5 1588.5,342.5 1588.5,360.5 1589.5,336.5 1589.5,357.5 1589.5,351.5 1590.5,348.5 1590.5,333.5 1590.5,339.5 1591.5,342.5 1591.5,339.5 1591.5,351.5 1592.5,339.5 1592.5,342.5 1592.5,330.5 1593.5,348.5 1593.5,360.5 1593.5,354.5 1594.5,351.5 1594.5,348.5 1594.5,360.5 1595.5,339.5 1595.5,327.5 1595.5,348.5 1596.5,339.5 1596.5,333.5 1596.5,345.5 1597.5,360.5 1597.5,333.5 1597.5,348.5 1598.5,336.5 1598.5,360.5 1598.5,342.5 1599.5,309.5 1599.5,342.5 1600.5,348.5 1600.5,345.5 1600.5,348.5 1601.5,327.5 1601.5,345.5 1601.5,366.5 1602.5,342.5 1602.5,351.5 1602.5,342.5 1603.5,351.5 1603.5,351.5 1603.5,366.5 1604.5,342.5 1604.5,336.5 1604.5,348.5 1605.5,342.5 1605.5,351.5 1605.5,327.5 1606.5,345.5 1606.5,354.5 1606.5,360.5 1607.5,324.5 1607.5,366.5 1607.5,321.5 1608.5,351.5 1608.5,327.5 1608.5,324.5 1609.5,327.5 1609.5,324.5 1609.5,318.5 1610.5,345.5 1610.5,345.5 1610.5,366.5 1611.5,354.5 1611.5,342.5 1611.5,348.5 1612.5,354.5 1612.5,366.5 1612.5,354.5 1613.5,348.5 1613.5,348.5 1614.5,366.5 1614.5,345.5 1614.5,348.5 1615.5,342.5 1615.5,348.5 1615.5,336.5 1616.5,369.5 1616.5,336.5 1616.5,363.5 1617.5,348.5 1617.5,339.5 1617.5,348.5 1618.5,336.5 1618.5,336.5 1618.5,339.5 1619.5,354.5 1619.5,312.5 1619.5,348.5 1620.5,342.5 1620.5,321.5 1620.5,345.5 1621.5,333.5 1621.5,360.5 1621.5,339.5 1622.5,366.5 1622.5,369.5 1622.5,360.5 1623.5,363.5 1623.5,348.5 1623.5,342.5 1624.5,348.5 1624.5,339.5 1624.5,339.5 1625.5,342.5 1625.5,345.5 1625.5,342.5 1626.5,342.5 1626.5,321.5 1627.5,339.5 1627.5,333.5 1627.5,339.5 1628.5,339.5 1628.5,342.5 1628.5,327.5 1629.5,366.5 1629.5,357.5 1629.5,342.5 1630.5,360.5 1630.5,348.5 1630.5,336.5 1631.5,339.5 1631.5,354.5 1631.5,354.5 1632.5,318.5 1632.5,336.5 1632.5,348.5 1633.5,354.5 1633.5,324.5 1633.5,336.5 1634.5,363.5 1634.5,357.5 1634.5,354.5 1635.5,324.5 1635.5,345.5 1635.5,327.5 1636.5,330.5 1636.5,339.5 1636.5,345.5 1637.5,345.5 1637.5,351.5 1637.5,342.5 1638.5,336.5 1638.5,318.5 1638.5,342.5 1639.5,366.5 1639.5,375.5 1639.5,348.5 1640.5,327.5 1640.5,354.5 1641.5,351.5 1641.5,357.5 1641.5,336.5 1642.5,357.5 1642.5,336.5 1642.5,336.5 1643.5,342.5 1643.5,342.5 1643.5,354.5 1644.5,336.5 1644.5,351.5 1644.5,360.5 1645.5,321.5 1645.5,342.5 1645.5,324.5 1646.5,357.5 1646.5,345.5 1646.5,345.5 1647.5,330.5 1647.5,339.5 1647.5,345.5 1648.5,342.5 1648.5,330.5 1648.5,336.5 1649.5,354.5 1649.5,342.5 1649.5,348.5 1650.5,357.5 1650.5,321.5 1650.5,348.5 1651.5,342.5 1651.5,336.5 1651.5,360.5 1652.5,339.5 1652.5,321.5 1652.5,354.5 1653.5,327.5 1653.5,336.5 1653.5,324.5 1654.5,345.5 1654.5,354.5 1655.5,342.5 1655.5,327.5 1655.5,354.5 1656.5,330.5 1656.5,342.5 1656.5,351.5 1657.5,381.5 1657.5,348.5 1657.5,351.5 1658.5,354.5 1658.5,348.5 1658.5,354.5 1659.5,357.5 1659.5,333.5 1659.5,315.5 1660.5,339.5 1660.5,342.5 1660.5,357.5 1661.5,330.5 1661.5,348.5 1661.5,324.5 1662.5,336.5 1662.5,348.5 1662.5,345.5 1663.5,342.5 1663.5,345.5 1663.5,321.5 1664.5,348.5 1664.5,342.5 1664.5,315.5 1665.5,336.5 1665.5,327.5 1665.5,330.5 1666.5,339.5 1666.5,333.5 1666.5,336.5 1667.5,321.5 1667.5,339.5 1667.5,330.5 1668.5,321.5 1668.5,351.5 1669.5,342.5 1669.5,318.5 1669.5,345.5 1670.5,342.5 1670.5,330.5 1670.5,351.5 1671.5,339.5 1671.5,348.5 1671.5,360.5 1672.5,339.5 1672.5,354.5 1672.5,366.5 1673.5,351.5 1673.5,339.5 1673.5,342.5 1674.5,348.5 1674.5,339.5 1674.5,333.5 1675.5,339.5 1675.5,348.5 1675.5,354.5 1676.5,369.5 1676.5,333.5 1676.5,345.5 1677.5,339.5 1677.5,336.5 1677.5,348.5 1678.5,342.5 1678.5,342.5 1678.5,345.5 1679.5,345.5 1679.5,345.5 1679.5,342.5 1680.5,351.5 1680.5,336.5 1680.5,327.5 1681.5,342.5 1681.5,351.5 1681.5,342.5 1682.5,348.5 1682.5,333.5 1683.5,351.5 1683.5,321.5 1683.5,339.5 1684.5,348.5 1684.5,351.5 1684.5,348.5 1685.5,333.5 1685.5,348.5 1685.5,336.5 1686.5,339.5 1686.5,342.5 1686.5,336.5 1687.5,342.5 1687.5,348.5 1687.5,333.5 1688.5,342.5 1688.5,339.5 1688.5,351.5 1689.5,330.5 1689.5,342.5 1689.5,345.5 1690.5,354.5 1690.5,345.5 1690.5,339.5 1691.5,336.5 1691.5,342.5 1691.5,357.5 1692.5,339.5 1692.5,351.5 1692.5,360.5 1693.5,336.5 1693.5,342.5 1693.5,321.5 1694.5,324.5 1694.5,348.5 1694.5,369.5 1695.5,345.5 1695.5,351.5 1695.5,333.5 1696.5,357.5 1696.5,336.5 1697.5,333.5 1697.5,342.5 1697.5,354.5 1698.5,342.5 1698.5,348.5 1698.5,333.5 1699.5,330.5 1699.5,342.5 1699.5,336.5 1700.5,348.5 1700.5,339.5 1700.5,330.5 1701.5,348.5 1701.5,351.5 1701.5,345.5 1702.5,363.5 1702.5,366.5 1702.5,339.5 1703.5,336.5 1703.5,360.5 1703.5,348.5 1704.5,342.5 1704.5,333.5 1704.5,342.5 1705.5,339.5 1705.5,333.5 1705.5,363.5 1706.5,336.5 1706.5,342.5 1706.5,333.5 1707.5,351.5 1707.5,336.5 1707.5,330.5 1708.5,333.5 1708.5,339.5 1708.5,324.5 1709.5,336.5 1709.5,390.5 1709.5,327.5 1710.5,339.5 1710.5,339.5 1711.5,339.5 1711.5,330.5 1711.5,342.5 1712.5,357.5 1712.5,342.5 1712.5,336.5 1713.5,354.5 1713.5,342.5 1713.5,330.5 1714.5,336.5 1714.5,324.5 1714.5,351.5 1715.5,345.5 1715.5,333.5 1715.5,333.5 1716.5,327.5 1716.5,354.5 1716.5,333.5 1717.5,342.5 1717.5,351.5 1717.5,360.5 1718.5,342.5 1718.5,348.5 1718.5,327.5 1719.5,327.5 1719.5,342.5 1719.5,339.5 1720.5,327.5 1720.5,360.5 1720.5,348.5 1721.5,339.5 1721.5,345.5 1721.5,345.5 1722.5,354.5 1722.5,360.5 1722.5,354.5 1723.5,348.5 1723.5,342.5 1724.5,327.5 1724.5,342.5 1724.5,363.5 1725.5,324.5 1725.5,315.5 1725.5,339.5 1726.5,336.5 1726.5,342.5 1726.5,333.5 1727.5,363.5 1727.5,351.5 1727.5,321.5 1728.5,354.5 1728.5,345.5 1728.5,363.5 1729.5,348.5 1729.5,348.5 1729.5,336.5 1730.5,336.5 1730.5,354.5 1730.5,354.5 1731.5,348.5 1731.5,342.5 1731.5,351.5 1732.5,330.5 1732.5,345.5 1732.5,351.5 1733.5,348.5 1733.5,345.5 1733.5,354.5 1734.5,360.5 1734.5,354.5 1734.5,339.5 1735.5,330.5 1735.5,336.5 1735.5,345.5 1736.5,339.5 1736.5,348.5 1736.5,345.5 1737.5,327.5 1737.5,339.5 1738.5,333.5 1738.5,360.5 1738.5,363.5 1739.5,345.5 1739.5,336.5 1739.5,306.5 1740.5,345.5 1740.5,336.5 1740.5,342.5 1741.5,339.5 1741.5,336.5 1741.5,360.5 1742.5,330.5 1742.5,360.5 1742.5,360.5 1743.5,342.5 1743.5,345.5 1743.5,321.5 1744.5,357.5 1744.5,354.5 1744.5,357.5 1745.5,351.5 1745.5,348.5 1745.5,363.5 1746.5,351.5 1746.5,348.5 1746.5,336.5 1747.5,336.5 1747.5,348.5 1747.5,327.5 1748.5,357.5 1748.5,333.5 1748.5,366.5 1749.5,333.5 1749.5,333.5 1749.5,339.5 1750.5,330.5 1750.5,348.5 1750.5,345.5 1751.5,327.5 1751.5,333.5 1752.5,342.5 1752.5,339.5 1752.5,345.5 1753.5,336.5 1753.5,345.5 1753.5,336.5 1754.5,330.5 1754.5,354.5 1754.5,336.5 1755.5,357.5 1755.5,351.5 1755.5,339.5 1756.5,333.5 1756.5,342.5 1756.5,354.5 1757.5,354.5 1757.5,342.5 1757.5,342.5 1758.5,363.5 1758.5,348.5 1758.5,354.5 1759.5,354.5 1759.5,345.5 1759.5,348.5 1760.5,339.5 1760.5,345.5 1760.5,345.5 1761.5,309.5 1761.5,339.5 1761.5,342.5 1762.5,357.5 1762.5,363.5 1762.5,363.5 1763.5,336.5 1763.5,345.5 1763.5,339.5 1764.5,333.5 1764.5,354.5 1764.5,351.5 1765.5,336.5 1765.5,360.5 1766.5,357.5 1766.5,333.5 1766.5,351.5 1767.5,354.5 1767.5,342.5 1767.5,360.5 1768.5,357.5 1768.5,339.5 1768.5,342.5 1769.5,354.5 1769.5,360.5 1769.5,342.5 1770.5,366.5 1770.5,339.5 1770.5,348.5 1771.5,345.5 1771.5,348.5 1771.5,324.5 1772.5,357.5 1772.5,348.5 1772.5,348.5 1773.5,339.5 1773.5,348.5 1773.5,366.5 1774.5,363.5 1774.5,333.5 1774.5,345.5 1775.5,375.5 1775.5,357.5 1775.5,348.5 1776.5,339.5 1776.5,354.5" fill="none" stroke="#8080ff" stroke-width="1"/><path d="M1097 354.5h2M1098 348.5h2M1098 333.5h2M1099 351.5h2M1100 333.5h2M1101 333.5h2M1101 330.5h2M1102 345.5h2M1103 327.5h2M1103 345.5h2M1104 318.5h2M1105 354.5h2M1105 351.5h2M1106 354.5h2M1107 312.5h2M1107 360.5h2M1108 345.5h2M1109 351.5h2M1109 342.5h2M1110 348.5h2M1111 360.5h2M1111 336.5h2M1112 327.5h2M1113 348.5h2M1113 342.5h2M1114 330.5h2M1115 339.5h2M1116 330.5h2M1116 324.5h2M1117 348.5h2M1118 339.5h2M1118 336.5h2M1119 345.5h2M1120 324.5h2M1120 330.5h2M1121 336.5h2M1122 345.5h2M1122 357.5h2M1123 348.5h2M1124 348.5h2M1124 330.5h2M1125 339.5h2M1126 354.5h2M1126 333.5h2M1127 339.5h2M1128 345.5h2M1129 330.5h2M1129 387.5h2M1130 336.5h2M1131 339.5h2M1131 354.5h2M1132 318.5h2M1133 339.5h2M1133 345.5h2M1134 333.5h2M1135 348.5h2M1135 354.5h2M1136 324.5h2M1137 333.5h2M1137 342.5h2M1138 324.5h2M1139 339.5h2M1139 360.5h2M1140 345.5h2M1141 348.5h2M1142 333.5h2M1142 342.5h2M1143 333.5h2M1144 336.5h2M1144 348.5h2M1145 342.5h2M1146 345.5h2M1146 321.5h2M1147 363.5h2M1148 345.5h2M1148 336.5h2M1149 327.5h2M1150 348.5h2M1150 336.5h2M1151 351.5h2M1152 345.5h2M1152 348.5h2M1153 354.5h2M1154 345.5h2M1154 333.5h2M1155 318.5h2M1156 327.5h2M1157 351.5h2M1157 348.5h2M1158 333.5h2M1159 330.5h2M1159 348.5h2M1160 348.5h2M1161 351.5h2M1161 339.5h2M1162 339.5h2M1163 345.5h2M1163 345.5h2M1164 336.5h2M1165 321.5h2M1165 336.5h2M1166 354.5h2M1167 348.5h2M1167 351.5h2M1168 336.5h2M1169 351.5h2M1170 342.5h2M1170 345.5h2M1171 339.5h2M1172 345.5h2M1172 333.5h2M1173 345.5h2M1174 357.5h2M1174 345.5h2M1175 348.5h2M1176 342.5h2M1176 348.5h2M1177 330.5h2M1178 354.5h2M1178 354.5h2M1179 351.5h2M1180 342.5h2M1180 360.5h2M1181 336.5h2M1182 342.5h2M1182 348.5h2M1183 339.5h2M1184 348.5h2M1185 354.5h2M1185 339.5h2M1186 348.5h2M1187 354.5h2M1187 336.5h2M1188 351.5h2M1189 342.5h2M1189 357.5h2M1190 369.5h2M1191 348.5h2M1191 342.5h2M1192 330.5h2M1193 351.5h2M1193 333.5h2M1194 339.5h2M1195 327.5h2M1195 360.5h2M1196 354.5h2M1197 342.5h2M1198 354.5h2M1198 345.5h2M1199 363.5h2M1200 357.5h2M1200 336.5h2M1201 351.5h2M1202 345.5h2M1202 354.5h2M1203 348.5h2M1204 348.5h2M1204 348.5h2M1205 348.5h2M1206 333.5h2M1206 345.5h2M1207 351.5h2M1208 357.5h2M1208 336.5h2M1209 336.5h2M1210 330.5h2M1210 354.5h2M1211 348.5h2M1212 345.5h2M1213 366.5h2M1213 345.5h2M1214 351.5h2M1215 333.5h2M1215 342.5h2M1216 348.5h2M1217 342.5h2M1217 342.5h2M1218 324.5h2M1219 360.5h2M1219 366.5h2M1220 363.5h2M1221 357.5h2M1221 315.5h2M1222 354.5h2M1223 336.5h2M1223 330.5h2M1224 339.5h2M1225 351.5h2M1226 351.5h2M1226 342.5h2M1227 348.5h2M1228 342.5h2M1228 333.5h2M1229 336.5h2M1230 330.5h2M1230 327.5h2M1231 339.5h2M1232 357.5h2M1232 366.5h2M1233 345.5h2M1234 360.5h2M1234 342.5h2M1235 342.5h2M1236 324.5h2M1236 357.5h2M1237 345.5h2M1238 345.5h2M1239 339.5h2M1239 339.5h2M1240 339.5h2M1241 318.5h2M1241 357.5h2M1242 351.5h2M1243 360.5h2M1243 339.5h2M1244 348.5h2M1245 363.5h2M1245 330.5h2M1246 354.5h2M1247 342.5h2M1247 354.5h2M1248 342.5h2M1249 339.5h2M1249 336.5h2M1250 360.5h2M1251 351.5h2M1251 336.5h2M1252 369.5h2M1253 333.5h2M1254 360.5h2M1254 351.5h2M1255 342.5h2M1256 342.5h2M1256 333.5h2M1257 348.5h2M1258 333.5h2M1258 354.5h2M1259 351.5h2M1260 357.5h2M1260 345.5h2M1261 339.5h2M1262 348.5h2M1262 342.5h2M1263 357.5h2M1264 339.5h2M1264 348.5h2M1265 342.5h2M1266 345.5h2M1267 339.5h2M1267 345.5h2M1268 348.5h2M1269 336.5h2M1269 345.5h2M1270 333.5h2M1271 354.5h2M1271 363.5h2M1272 345.5h2M1273 348.5h2M1273 339.5h2M1274 342.5h2M1275 330.5h2M1275 348.5h2M1276 348.5h2M1277 348.5h2M1277 339.5h2M1278 348.5h2M1279 336.5h2M1279 348.5h2M1280 339.5h2M1281 360.5h2M1282 336.5h2M1282 348.5h2M1283 360.5h2M1284 330.5h2M1284 342.5h2M1285 357.5h2M1286 339.5h2M1286 363.5h2M1287 351.5h2M1288 342.5h2M1288 345.5h2M1289 345.5h2M1290 360.5h2M1290 354.5h2M1291 330.5h2M1292 354.5h2M1292 351.5h2M1293 354.5h2M1294 348.5h2M1295 336.5h2M1295 333.5h2M1296 354.5h2M1297 330.5h2M1297 369.5h2M1298 336.5h2M1299 354.5h2M1299 330.5h2M1300 360.5h2M1301 357.5h2M1301 348.5h2M1302 348.5h2M1303 348.5h2M1303 366.5h2M1304 345.5h2M1305 348.5h2M1305 357.5h2M1306 360.5h2M1307 330.5h2M1307 339.5h2M1308 348.5h2M1309 372.5h2M1310 354.5h2M1310 363.5h2M1311 351.5h2M1312 336.5h2M1312 345.5h2M1313 360.5h2M1314 372.5h2M1314 330.5h2M1315 336.5h2M1316 354.5h2M1316 333.5h2M1317 351.5h2M1318 354.5h2M1318 342.5h2M1319 345.5h2M1320 333.5h2M1320 330.5h2M1321 348.5h2M1322 342.5h2M1323 360.5h2M1323 333.5h2M1324 339.5h2M1325 336.5h2M1325 339.5h2M1326 336.5h2M1327 327.5h2M1327 336.5h2M1328 363.5h2M1329 342.5h2M1329 330.5h2M1330 345.5h2M1331 342.5h2M1331 369.5h2M1332 342.5h2M1333 348.5h2M1333 345.5h2M1334 312.5h2M1335 360.5h2M1336 351.5h2M1336 366.5h2M1337 330.5h2M1338 339.5h2M1338 345.5h2M1339 333.5h2M1340 348.5h2M1340 360.5h2M1341 348.5h2M1342 351.5h2M1342 345.5h2M1343 369.5h2M1344 339.5h2M1344 324.5h2M1345 333.5h2M1346 366.5h2M1346 342.5h2M1347 375.5h2M1348 351.5h2M1348 348.5h2M1349 336.5h2M1350 345.5h2M1351 333.5h2M1351 345.5h2M1352 354.5h2M1353 348.5h2M1353 366.5h2M1354 339.5h2M1355 357.5h2M1355 348.5h2M1356 351.5h2M1357 342.5h2M1357 342.5h2M1358 354.5h2M1359 345.5h2M1359 354.5h2M1360 351.5h2M1361 354.5h2M1361 333.5h2M1362 351.5h2M1363 369.5h2M1364 345.5h2M1364 345.5h2M1365 339.5h2M1366 351.5h2M1366 363.5h2M1367 354.5h2M1368 348.5h2M1368 345.5h2M1369 324.5h2M1370 351.5h2M1370 366.5h2M1371 363.5h2M1372 315.5h2M1372 351.5h2M1373 351.5h2M1374 348.5h2M1374 348.5h2M1375 351.5h2M1376 342.5h2M1376 342.5h2M1377 360.5h2M1378 342.5h2M1379 351.5h2M1379 336.5h2M1380 342.5h2M1381 345.5h2M1381 324.5h2M1382 345.5h2M1383 321.5h2M1383 342.5h2M1384 345.5h2M1385 327.5h2M1385 351.5h2M1386 336.5h2M1387 357.5h2M1387 336.5h2M1388 360.5h2M1389 342.5h2M1389 348.5h2M1390 345.5h2M1391 363.5h2M1392 342.5h2M1392 345.5h2M1393 333.5h2M1394 333.5h2M1394 348.5h2M1395 354.5h2M1396 342.5h2M1396 345.5h2M1397 354.5h2M1398 351.5h2M1398 336.5h2M1399 327.5h2M1400 348.5h2M1400 336.5h2M1401 348.5h2M1402 336.5h2M1402 339.5h2M1403 357.5h2M1404 333.5h2M1404 360.5h2M1405 336.5h2M1406 333.5h2M1407 342.5h2M1407 345.5h2M1408 369.5h2M1409 336.5h2M1409 354.5h2M1410 345.5h2M1411 342.5h2M1411 348.5h2M1412 354.5h2M1413 345.5h2M1413 351.5h2M1414 348.5h2M1415 333.5h2M1415 330.5h2M1416 345.5h2M1417 348.5h2M1417 354.5h2M1418 354.5h2M1419 357.5h2M1420 354.5h2M1420 348.5h2M1421 342.5h2M1422 342.5h2M1422 327.5h2M1423 345.5h2M1424 363.5h2M1424 339.5h2M1425 339.5h2M1426 348.5h2M1426 342.5h2M1427 363.5h2M1428 351.5h2M1428 348.5h2M1429 336.5h2M1430 354.5h2M1430 345.5h2M1431 357.5h2M1432 345.5h2M1433 348.5h2M1433 324.5h2M1434 324.5h2M1435 339.5h2M1435 354.5h2M1436 324.5h2M1437 345.5h2M1437 345.5h2M1438 351.5h2M1439 363.5h2M1439 342.5h2M1440 354.5h2M1441 342.5h2M1441 330.5h2M1442 351.5h2M1443 345.5h2M1443 360.5h2M1444 336.5h2M1445 339.5h2M1445 348.5h2M1446 345.5h2M1447 363.5h2M1448 354.5h2M1448 336.5h2M1449 351.5h2M1450 348.5h2M1450 333.5h2M1451 342.5h2M1452 354.5h2M1452 351.5h2M1453 351.5h2M1454 345.5h2M1454 345.5h2M1455 345.5h2M1456 354.5h2M1456 345.5h2M1457 351.5h2M1458 363.5h2M1458 375.5h2M1459 357.5h2M1460 345.5h2M1461 357.5h2M1461 321.5h2M1462 342.5h2M1463 330.5h2M1463 339.5h2M1464 336.5h2M1465 345.5h2M1465 354.5h2M1466 351.5h2M1467 351.5h2M1467 324.5h2M1468 342.5h2M1469 354.5h2M1469 348.5h2M1470 327.5h2M1471 348.5h2M1471 330.5h2M1472 369.5h2M1473 345.5h2M1473 363.5h2M1474 363.5h2M1475 330.5h2M1476 351.5h2M1476 351.5h2M1477 390.5h2M1478 360.5h2M1478 345.5h2M1479 342.5h2M1480 348.5h2M1480 363.5h2M1481 327.5h2M1482 333.5h2M1482 345.5h2M1483 351.5h2M1484 354.5h2M1484 348.5h2M1485 339.5h2M1486 348.5h2M1486 339.5h2M1487 342.5h2M1488 351.5h2M1489 339.5h2M1489 336.5h2M1490 354.5h2M1491 342.5h2M1491 354.5h2M1492 369.5h2M1493 333.5h2M1493 351.5h2M1494 345.5h2M1495 345.5h2M1495 357.5h2M1496 348.5h2M1497 366.5h2M1497 333.5h2M1498 360.5h2M1499 363.5h2M1499 342.5h2M1500 339.5h2M1501 342.5h2M1501 324.5h2M1502 342.5h2M1503 345.5h2M1504 342.5h2M1504 342.5h2M1505 342.5h2M1506 330.5h2M1506 354.5h2M1507 336.5h2M1508 351.5h2M1508 360.5h2M1509 354.5h2M1510 309.5h2M1510 366.5h2M1511 360.5h2M1512 339.5h2M1512 345.5h2M1513 348.5h2M1514 342.5h2M1514 348.5h2M1515 330.5h2M1516 366.5h2M1517 339.5h2M1517 342.5h2M1518 348.5h2M1519 324.5h2M1519 333.5h2M1520 324.5h2M1521 345.5h2M1521 351.5h2M1522 351.5h2M1523 324.5h2M1523 360.5h2M1524 351.5h2M1525 345.5h2M1525 327.5h2M1526 354.5h2M1527 354.5h2M1527 354.5h2M1528 336.5h2M1529 351.5h2M1530 342.5h2M1530 333.5h2M1531 351.5h2M1532 345.5h2M1532 348.5h2M1533 345.5h2M1534 339.5h2M1534 333.5h2M1535 342.5h2M1536 342.5h2M1536 357.5h2M1537 345.5h2M1538 351.5h2M1538 351.5h2M1539 348.5h2M1540 342.5h2M1540 345.5h2M1541 327.5h2M1542 342.5h2M1542 351.5h2M1543 357.5h2M1544 333.5h2M1545 342.5h2M1545 360.5h2M1546 342.5h2M1547 333.5h2M1547 348.5h2M1548 354.5h2M1549 333.5h2M1549 339.5h2M1550 363.5h2M1551 351.5h2M1551 351.5h2M1552 342.5h2M1553 339.5h2M1553 339.5h2M1554 342.5h2M1555 369.5h2M1555 333.5h2M1556 342.5h2M1557 336.5h2M1558 333.5h2M1558 345.5h2M1559 306.5h2M1560 339.5h2M1560 360.5h2M1561 339.5h2M1562 348.5h2M1562 330.5h2M1563 330.5h2M1564 354.5h2M1564 339.5h2M1565 351.5h2M1566 345.5h2M1566 366.5h2M1567 336.5h2M1568 357.5h2M1568 348.5h2M1569 336.5h2M1570 336.5h2M1570 324.5h2M1571 348.5h2M1572 339.5h2M1573 348.5h2M1573 348.5h2M1574 354.5h2M1575 351.5h2M1575 351.5h2M1576 345.5h2M1577 342.5h2M1577 351.5h2M1578 354.5h2M1579 342.5h2M1579 342.5h2M1580 336.5h2M1581 345.5h2M1581 351.5h2M1582 351.5h2M1583 345.5h2M1583 345.5h2M1584 372.5h2M1585 351.5h2M1586 339.5h2M1586 333.5h2M1587 333.5h2M1588 384.5h2M1588 360.5h2M1589 357.5h2M1590 348.5h2M1590 339.5h2M1591 339.5h2M1592 339.5h2M1592 330.5h2M1593 360.5h2M1594 351.5h2M1594 360.5h2M1595 327.5h2M1596 339.5h2M1596 345.5h2M1597 333.5h2M1598 336.5h2M1598 342.5h2M1599 342.5h2M1600 345.5h2M1601 327.5h2M1601 366.5h2M1602 351.5h2M1603 351.5h2M1603 366.5h2M1604 336.5h2M1605 342.5h2M1605 327.5h2M1606 354.5h2M1607 324.5h2M1607 321.5h2M1608 327.5h2M1609 327.5h2M1609 318.5h2M1610 345.5h2M1611 354.5h2M1611 348.5h2M1612 366.5h2M1613 348.5h2M1614 366.5h2M1614 348.5h2M1615 348.5h2M1616 369.5h2M1616 363.5h2M1617 339.5h2M1618 336.5h2M1618 339.5h2M1619 312.5h2M1620 342.5h2M1620 345.5h2M1621 360.5h2M1622 366.5h2M1622 360.5h2M1623 348.5h2M1624 348.5h2M1624 339.5h2M1625 345.5h2M1626 342.5h2M1627 339.5h2M1627 339.5h2M1628 342.5h2M1629 366.5h2M1629 342.5h2M1630 348.5h2M1631 339.5h2M1631 354.5h2M1632 336.5h2M1633 354.5h2M1633 336.5h2M1634 357.5h2M1635 324.5h2M1635 327.5h2M1636 339.5h2M1637 345.5h2M1637 342.5h2M1638 318.5h2M1639 366.5h2M1639 348.5h2M1640 354.5h2M1641 357.5h2M1642 357.5h2M1642 336.5h2M1643 342.5h2M1644 336.5h2M1644 360.5h2M1645 342.5h2M1646 357.5h2M1646 345.5h2M1647 339.5h2M1648 342.5h2M1648 336.5h2M1649 342.5h2M1650 357.5h2M1650 348.5h2M1651 336.5h2M1652 339.5h2M1652 354.5h2M1653 336.5h2M1654 345.5h2M1655 342.5h2M1655 354.5h2M1656 342.5h2M1657 381.5h2M1657 351.5h2M1658 348.5h2M1659 357.5h2M1659 315.5h2M1660 342.5h2M1661 330.5h2M1661 324.5h2M1662 348.5h2M1663 342.5h2M1663 321.5h2M1664 342.5h2M1665 336.5h2M1665 330.5h2M1666 333.5h2M1667 321.5h2M1667 330.5h2M1668 351.5h2M1669 318.5h2M1670 342.5h2M1670 351.5h2M1671 348.5h2M1672 339.5h2M1672 366.5h2M1673 339.5h2M1674 348.5h2M1674 333.5h2M1675 348.5h2M1676 369.5h2M1676 345.5h2M1677 336.5h2M1678 342.5h2M1678 345.5h2M1679 345.5h2M1680 351.5h2M1680 327.5h2M1681 351.5h2M1682 348.5h2M1683 351.5h2M1683 339.5h2M1684 351.5h2M1685 333.5h2M1685 336.5h2M1686 342.5h2M1687 342.5h2M1687 333.5h2M1688 339.5h2M1689 330.5h2M1689 345.5h2M1690 345.5h2M1691 336.5h2M1691 357.5h2M1692 351.5h2M1693 336.5h2M1693 321.5h2M1694 348.5h2M1695 345.5h2M1695 333.5h2M1696 336.5h2M1697 342.5h2M1698 342.5h2M1698 333.5h2M1699 342.5h2M1700 348.5h2M1700 330.5h2M1701 351.5h2M1702 363.5h2M1702 339.5h2M1703 360.5h2M1704 342.5h2M1704 342.5h2M1705 333.5h2M1706 336.5h2M1706 333.5h2M1707 336.5h2M1708 333.5h2M1708 324.5h2M1709 390.5h2M1710 339.5h2M1711 339.5h2M1711 342.5h2M1712 342.5h2M1713 354.5h2M1713 330.5h2M1714 324.5h2M1715 345.5h2M1715 333.5h2M1716 354.5h2M1717 342.5h2M1717 360.5h2M1718 348.5h2M1719 327.5h2M1719 339.5h2M1720 360.5h2M1721 339.5h2M1721 345.5h2M1722 360.5h2M1723 348.5h2M1724 327.5h2M1724 363.5h2M1725 315.5h2M1726 336.5h2M1726 333.5h2M1727 351.5h2M1728 354.5h2M1728 363.5h2M1729 348.5h2M1730 336.5h2M1730 354.5h2M1731 342.5h2M1732 330.5h2M1732 351.5h2M1733 345.5h2M1734 360.5h2M1734 339.5h2M1735 336.5h2M1736 339.5h2M1736 345.5h2M1737 339.5h2M1738 360.5h2M1739 345.5h2M1739 306.5h2M1740 336.5h2M1741 339.5h2M1741 360.5h2M1742 360.5h2M1743 342.5h2M1743 321.5h2M1744 354.5h2M1745 351.5h2M1745 363.5h2M1746 348.5h2M1747 336.5h2M1747 327.5h2M1748 333.5h2M1749 333.5h2M1749 339.5h2M1750 348.5h2M1751 327.5h2M1752 342.5h2M1752 345.5h2M1753 345.5h2M1754 330.5h2M1754 336.5h2M1755 351.5h2M1756 333.5h2M1756 354.5h2M1757 342.5h2M1758 363.5h2M1758 354.5h2M1759 345.5h2M1760 339.5h2M1760 345.5h2M1761 339.5h2M1762 357.5h2M1762 363.5h2M1763 345.5h2M1764 333.5h2M1764 351.5h2M1765 360.5h2M1766 333.5h2M1767 354.5h2M1767 360.5h2M1768 339.5h2M1769 354.5h2M1769 342.5h2M1770 339.5h2M1771 345.5h2M1771 324.5h2M1772 348.5h2M1773 339.5h2M1773 366.5h2M1774 333.5h2M1775 375.5h2M1775 348.5h2M1776 354.5h2" stroke="#0000f0" stroke-width="2" fill="none"/><polyline points="1097.5,125.5 1097.5,110.5 1098.5,128.5 1098.5,113.5 1098.5,125.5 1099.5,125.5 1099.5,95.5 1099.5,101.5 1100.5,83.5 1100.5,113.5 1101.5,110.5 1101.5,110.5 1101.5,107.5 1102.5,101.5 1102.5,128.5 1102.5,104.5 1103.5,125.5 1103.5,110.5 1103.5,74.5 1104.5,107.5 1104.5,110.5 1104.5,101.5 1105.5,107.5 1105.5,119.5 1105.5,113.5 1106.5,110.5 1106.5,119.5 1106.5,95.5 1107.5,101.5 1107.5,89.5 1107.5,92.5 1108.5,104.5 1108.5,104.5 1108.5,107.5 1109.5,107.5 1109.5,110.5 1109.5,101.5 1110.5,113.5 1110.5,104.5 1110.5,104.5 1111.5,152.5 1111.5,125.5 1111.5,107.5 1112.5,107.5 1112.5,104.5 1112.5,86.5 1113.5,98.5 1113.5,101.5 1113.5,113.5 1114.5,110.5 1114.5,119.5 1115.5,104.5 1115.5,92.5 1115.5,86.5 1116.5,98.5 1116.5,89.5 1116.5,83.5 1117.5,110.5 1117.5,104.5 1117.5,104.5 1118.5,107.5 1118.5,113.5 1118.5,107.5 1119.5,101.5 1119.5,104.5 1119.5,92.5 1120.5,110.5 1120.5,104.5 1120.5,107.5 1121.5,104.5 1121.5,101.5 1121.5,107.5 1122.5,116.5 1122.5,92.5 1122.5,128.5 1123.5,122.5 1123.5,110.5 1123.5,107.5 1124.5,101.5 1124.5,104.5 1124.5,119.5 1125.5,107.5 1125.5,110.5 1125.5,113.5 1126.5,98.5 1126.5,101.5 1126.5,107.5 1127.5,92.5 1127.5,122.5 1127.5,116.5 1128.5,89.5 1128.5,110.5 1129.5,110.5 1129.5,125.5 1129.5,95.5 1130.5,101.5 1130.5,119.5 1130.5,110.5 1131.5,128.5 1131.5,143.5 1131.5,122.5 1132.5,119.5 1132.5,101.5 1132.5,116.5 1133.5,113.5 1133.5,98.5 1133.5,110.5 1134.5,104.5 1134.5,110.5 1134.5,107.5 1135.5,107.5 1135.5,110.5 1135.5,101.5 1136.5,104.5 1136.5,119.5 1136.5,101.5 1137.5,101.5 1137.5,122.5 1137.5,113.5 1138.5,95.5 1138.5,116.5 1138.5,98.5 1139.5,113.5 1139.5,104.5 1139.5,104.5 1140.5,125.5 1140.5,98.5 1140.5,98.5 1141.5,101.5 1141.5,101.5 1142.5,110.5 1142.5,122.5 1142.5,104.5 1143.5,86.5 1143.5,140.5 1143.5,107.5 1144.5,107.5 1144.5,110.5 1144.5,113.5 1145.5,95.5 1145.5,89.5 1145.5,101.5 1146.5,98.5 1146.5,113.5 1146.5,86.5 1147.5,89.5 1147.5,98.5 1147.5,98.5 1148.5,113.5 1148.5,77.5 1148.5,101.5 1149.5,104.5 1149.5,110.5 1149.5,95.5 1150.5,98.5 1150.5,83.5 1150.5,119.5 1151.5,107.5 1151.5,80.5 1151.5,101.5 1152.5,122.5 1152.5,95.5 1152.5,101.5 1153.5,113.5 1153.5,110.5 1153.5,107.5 1154.5,104.5 1154.5,86.5 1154.5,110.5 1155.5,110.5 1155.5,104.5 1156.5,92.5 1156.5,92.5 1156.5,101.5 1157.5,92.5 1157.5,110.5 1157.5,98.5 1158.5,98.5 1158.5,86.5 1158.5,110.5 1159.5,113.5 1159.5,104.5 1159.5,92.5 1160.5,110.5 1160.5,95.5 1160.5,101.5 1161.5,116.5 1161.5,101.5 1161.5,107.5 1162.5,107.5 1162.5,110.5 1162.5,104.5 1163.5,113.5 1163.5,98.5 1163.5,98.5 1164.5,98.5 1164.5,122.5 1164.5,107.5 1165.5,101.5 1165.5,86.5 1165.5,107.5 1166.5,95.5 1166.5,80.5 1166.5,101.5 1167.5,104.5 1167.5,110.5 1167.5,119.5 1168.5,95.5 1168.5,104.5 1168.5,104.5 1169.5,80.5 1169.5,116.5 1170.5,104.5 1170.5,116.5 1170.5,98.5 1171.5,101.5 1171.5,116.5 1171.5,104.5 1172.5,98.5 1172.5,83.5 1172.5,98.5 1173.5,101.5 1173.5,101.5 1173.5,113.5 1174.5,104.5 1174.5,98.5 1174.5,110.5 1175.5,98.5 1175.5,107.5 1175.5,107.5 1176.5,86.5 1176.5,92.5 1176.5,89.5 1177.5,107.5 1177.5,113.5 1177.5,89.5 1178.5,101.5 1178.5,110.5 1178.5,110.5 1179.5,92.5 1179.5,98.5 1179.5,95.5 1180.5,104.5 1180.5,98.5 1180.5,101.5 1181.5,104.5 1181.5,104.5 1181.5,95.5 1182.5,92.5 1182.5,95.5 1182.5,95.5 1183.5,95.5 1183.5,95.5 1184.5,98.5 1184.5,119.5 1184.5,119.5 1185.5,116.5 1185.5,107.5 1185.5,89.5 1186.5,101.5 1186.5,116.5 1186.5,113.5 1187.5,98.5 1187.5,92.5 1187.5,104.5 1188.5,104.5 1188.5,116.5 1188.5,107.5 1189.5,110.5 1189.5,113.5 1189.5,104.5 1190.5,101.5 1190.5,92.5 1190.5,86.5 1191.5,101.5 1191.5,107.5 1191.5,83.5 1192.5,92.5 1192.5,95.5 1192.5,104.5 1193.5,104.5 1193.5,113.5 1193.5,107.5 1194.5,107.5 1194.5,101.5 1194.5,98.5 1195.5,116.5 1195.5,98.5 1195.5,113.5 1196.5,107.5 1196.5,77.5 1196.5,101.5 1197.5,86.5 1197.5,86.5 1198.5,107.5 1198.5,95.5 1198.5,116.5 1199.5,110.5 1199.5,104.5 1199.5,74.5 1200.5,98.5 1200.5,101.5 1200.5,107.5 1201.5,107.5 1201.5,89.5 1201.5,95.5 1202.5,110.5 1202.5,95.5 1202.5,104.5 1203.5,122.5 1203.5,98.5 1203.5,116.5 1204.5,110.5 1204.5,98.5 1204.5,119.5 1205.5,131.5 1205.5,104.5 1205.5,125.5 1206.5,86.5 1206.5,89.5 1206.5,113.5 1207.5,107.5 1207.5,101.5 1207.5,107.5 1208.5,95.5 1208.5,98.5 1208.5,104.5 1209.5,98.5 1209.5,107.5 1209.5,98.5 1210.5,80.5 1210.5,113.5 1210.5,101.5 1211.5,110.5 1211.5,83.5 1212.5,110.5 1212.5,110.5 1212.5,95.5 1213.5,98.5 1213.5,89.5 1213.5,95.5 1214.5,113.5 1214.5,98.5 1214.5,107.5 1215.5,116.5 1215.5,107.5 1215.5,101.5 1216.5,107.5 1216.5,98.5 1216.5,101.5 1217.5,89.5 1217.5,95.5 1217.5,107.5 1218.5,110.5 1218.5,119.5 1218.5,107.5 1219.5,86.5 1219.5,104.5 1219.5,104.5 1220.5,119.5 1220.5,95.5 1220.5,116.5 1221.5,92.5 1221.5,122.5 1221.5,119.5 1222.5,107.5 1222.5,107.5 1222.5,101.5 1223.5,107.5 1223.5,98.5 1223.5,110.5 1224.5,77.5 1224.5,89.5 1224.5,92.5 1225.5,92.5 1225.5,98.5 1226.5,98.5 1226.5,101.5 1226.5,101.5 1227.5,86.5 1227.5,98.5 1227.5,95.5 1228.5,107.5 1228.5,89.5 1228.5,104.5 1229.5,80.5 1229.5,125.5 1229.5,110.5 1230.5,77.5 1230.5,92.5 1230.5,113.5 1231.5,104.5 1231.5,134.5 1231.5,110.5 1232.5,101.5 1232.5,92.5 1232.5,101.5 1233.5,107.5 1233.5,92.5 1233.5,89.5 1234.5,89.5 1234.5,98.5 1234.5,98.5 1235.5,104.5 1235.5,113.5 1235.5,110.5 1236.5,86.5 1236.5,92.5 1236.5,95.5 1237.5,101.5 1237.5,101.5 1237.5,113.5 1238.5,128.5 1238.5,104.5 1239.5,113.5 1239.5,95.5 1239.5,98.5 1240.5,101.5 1240.5,110.5 1240.5,119.5 1241.5,122.5 1241.5,95.5 1241.5,104.5 1242.5,98.5 1242.5,92.5 1242.5,116.5 1243.5,119.5 1243.5,119.5 1243.5,101.5 1244.5,116.5 1244.5,104.5 1244.5,98.5 1245.5,116.5 1245.5,98.5 1245.5,89.5 1246.5,92.5 1246.5,98.5 1246.5,95.5 1247.5,101.5 1247.5,104.5 1247.5,116.5 1248.5,95.5 1248.5,95.5 1248.5,101.5 1249.5,104.5 1249.5,110.5 1249.5,101.5 1250.5,113.5 1250.5,98.5 1250.5,68.5 1251.5,95.5 1251.5,92.5 1251.5,95.5 1252.5,89.5 1252.5,101.5 1253.5,107.5 1253.5,98.5 1253.5,83.5 1254.5,89.5 1254.5,74.5 1254.5,86.5 1255.5,104.5 1255.5,98.5 1255.5,104.5 1256.5,101.5 1256.5,95.5 1256.5,89.5 1257.5,104.5 1257.5,110.5 1257.5,104.5 1258.5,89.5 1258.5,83.5 1258.5,59.5 1259.5,77.5 1259.5,113.5 1259.5,107.5 1260.5,95.5 1260.5,95.5 1260.5,83.5 1261.5,101.5 1261.5,98.5 1261.5,107.5 1262.5,89.5 1262.5,95.5 1262.5,107.5 1263.5,89.5 1263.5,98.5 1263.5,83.5 1264.5,80.5 1264.5,92.5 1264.5,107.5 1265.5,104.5 1265.5,104.5 1265.5,113.5 1266.5,77.5 1266.5,95.5 1267.5,107.5 1267.5,92.5 1267.5,107.5 1268.5,98.5 1268.5,80.5 1268.5,89.5 1269.5,110.5 1269.5,107.5 1269.5,92.5 1270.5,92.5 1270.5,98.5 1270.5,95.5 1271.5,95.5 1271.5,86.5 1271.5,74.5 1272.5,86.5 1272.5,89.5 1272.5,104.5 1273.5,98.5 1273.5,110.5 1273.5,95.5 1274.5,101.5 1274.5,89.5 1274.5,98.5 1275.5,77.5 1275.5,89.5 1275.5,107.5 1276.5,86.5 1276.5,89.5 1276.5,104.5 1277.5,86.5 1277.5,98.5 1277.5,77.5 1278.5,107.5 1278.5,107.5 1278.5,89.5 1279.5,92.5 1279.5,98.5 1279.5,98.5 1280.5,101.5 1280.5,107.5 1281.5,80.5 1281.5,89.5 1281.5,86.5 1282.5,92.5 1282.5,95.5 1282.5,98.5 1283.5,95.5 1283.5,98.5 1283.5,110.5 1284.5,107.5 1284.5,104.5 1284.5,104.5 1285.5,110.5 1285.5,89.5 1285.5,101.5 1286.5,89.5 1286.5,98.5 1286.5,101.5 1287.5,107.5 1287.5,101.5 1287.5,95.5 1288.5,77.5 1288.5,119.5 1288.5,104.5 1289.5,113.5 1289.5,98.5 1289.5,92.5 1290.5,113.5 1290.5,119.5 1290.5,95.5 1291.5,116.5 1291.5,95.5 1291.5,86.5 1292.5,101.5 1292.5,92.5 1292.5,101.5 1293.5,113.5 1293.5,116.5 1293.5,110.5 1294.5,107.5 1294.5,119.5 1295.5,104.5 1295.5,104.5 1295.5,113.5 1296.5,104.5 1296.5,95.5 1296.5,113.5 1297.5,107.5 1297.5,101.5 1297.5,113.5 1298.5,92.5 1298.5,110.5 1298.5,110.5 1299.5,107.5 1299.5,101.5 1299.5,107.5 1300.5,110.5 1300.5,101.5 1300.5,80.5 1301.5,104.5 1301.5,137.5 1301.5,107.5 1302.5,110.5 1302.5,101.5 1302.5,98.5 1303.5,104.5 1303.5,104.5 1303.5,107.5 1304.5,113.5 1304.5,104.5 1304.5,95.5 1305.5,119.5 1305.5,80.5 1305.5,116.5 1306.5,98.5 1306.5,113.5 1306.5,125.5 1307.5,116.5 1307.5,104.5 1307.5,104.5 1308.5,110.5 1308.5,110.5 1309.5,107.5 1309.5,113.5 1309.5,101.5 1310.5,113.5 1310.5,122.5 1310.5,89.5 1311.5,95.5 1311.5,95.5 1311.5,101.5 1312.5,89.5 1312.5,110.5 1312.5,89.5 1313.5,80.5 1313.5,104.5 1313.5,125.5 1314.5,107.5 1314.5,98.5 1314.5,101.5 1315.5,113.5 1315.5,101.5 1315.5,98.5 1316.5,92.5 1316.5,98.5 1316.5,89.5 1317.5,89.5 1317.5,104.5 1317.5,107.5 1318.5,104.5 1318.5,110.5 1318.5,101.5 1319.5,92.5 1319.5,98.5 1319.5,98.5 1320.5,89.5 1320.5,125.5 1320.5,95.5 1321.5,104.5 1321.5,80.5 1321.5,104.5 1322.5,89.5 1322.5,92.5 1323.5,107.5 1323.5,92.5 1323.5,92.5 1324.5,89.5 1324.5,101.5 1324.5,104.5 1325.5,104.5 1325.5,95.5 1325.5,113.5 1326.5,104.5 1326.5,101.5 1326.5,95.5 1327.5,113.5 1327.5,98.5 1327.5,98.5 1328.5,95.5 1328.5,104.5 1328.5,101.5 1329.5,110.5 1329.5,95.5 1329.5,119.5 1330.5,110.5 1330.5,104.5 1330.5,104.5 1331.5,86.5 1331.5,116.5 1331.5,92.5 1332.5,95.5 1332.5,113.5 1332.5,74.5 1333.5,92.5 1333.5,59.5 1333.5,80.5 1334.5,95.5 1334.5,77.5 1334.5,86.5 1335.5,92.5 1335.5,86.5 1336.5,101.5 1336.5,92.5 1336.5,101.5 1337.5,80.5 1337.5,101.5 1337.5,89.5 1338.5,101.5 1338.5,101.5 1338.5,95.5 1339.5,116.5 1339.5,89.5 1339.5,98.5 1340.5,95.5 1340.5,95.5 1340.5,104.5 1341.5,92.5 1341.5,95.5 1341.5,101.5 1342.5,95.5 1342.5,101.5 1342.5,98.5 1343.5,95.5 1343.5,80.5 1343.5,80.5 1344.5,89.5 1344.5,80.5 1344.5,80.5 1345.5,95.5 1345.5,86.5 1345.5,98.5 1346.5,98.5 1346.5,104.5 1346.5,74.5 1347.5,62.5 1347.5,101.5 1347.5,83.5 1348.5,77.5 1348.5,104.5 1348.5,83.5 1349.5,89.5 1349.5,92.5 1350.5,77.5 1350.5,107.5 1350.5,101.5 1351.5,86.5 1351.5,101.5 1351.5,77.5 1352.5,107.5 1352.5,89.5 1352.5,101.5 1353.5,101.5 1353.5,89.5 1353.5,107.5 1354.5,122.5 1354.5,86.5 1354.5,95.5 1355.5,83.5 1355.5,95.5 1355.5,107.5 1356.5,101.5 1356.5,92.5 1356.5,101.5 1357.5,95.5 1357.5,77.5 1357.5,74.5 1358.5,89.5 1358.5,98.5 1358.5,101.5 1359.5,83.5 1359.5,89.5 1359.5,107.5 1360.5,83.5 1360.5,83.5 1360.5,101.5 1361.5,104.5 1361.5,113.5 1361.5,116.5 1362.5,95.5 1362.5,95.5 1362.5,95.5 1363.5,98.5 1363.5,107.5 1364.5,104.5 1364.5,104.5 1364.5,104.5 1365.5,107.5 1365.5,95.5 1365.5,92.5 1366.5,92.5 1366.5,86.5 1366.5,95.5 1367.5,92.5 1367.5,74.5 1367.5,80.5 1368.5,89.5 1368.5,95.5 1368.5,104.5 1369.5,101.5 1369.5,113.5 1369.5,95.5 1370.5,86.5 1370.5,92.5 1370.5,71.5 1371.5,107.5 1371.5,101.5 1371.5,101.5 1372.5,86.5 1372.5,107.5 1372.5,80.5 1373.5,83.5 1373.5,101.5 1373.5,107.5 1374.5,107.5 1374.5,104.5 1374.5,104.5 1375.5,104.5 1375.5,92.5 1375.5,98.5 1376.5,98.5 1376.5,104.5 1376.5,113.5 1377.5,86.5 1377.5,104.5 1378.5,95.5 1378.5,77.5 1378.5,104.5 1379.5,92.5 1379.5,95.5 1379.5,98.5 1380.5,77.5 1380.5,92.5 1380.5,101.5 1381.5,86.5 1381.5,89.5 1381.5,95.5 1382.5,77.5 1382.5,119.5 1382.5,104.5 1383.5,101.5 1383.5,92.5 1383.5,83.5 1384.5,110.5 1384.5,113.5 1384.5,83.5 1385.5,68.5 1385.5,83.5 1385.5,83.5 1386.5,107.5 1386.5,98.5 1386.5,95.5 1387.5,104.5 1387.5,104.5 1387.5,95.5 1388.5,92.5 1388.5,92.5 1388.5,92.5 1389.5,101.5 1389.5,92.5 1389.5,98.5 1390.5,107.5 1390.5,89.5 1390.5,86.5 1391.5,107.5 1391.5,92.5 1392.5,107.5 1392.5,83.5 1392.5,101.5 1393.5,77.5 1393.5,101.5 1393.5,107.5 1394.5,98.5 1394.5,113.5 1394.5,107.5 1395.5,95.5 1395.5,101.5 1395.5,83.5 1396.5,101.5 1396.5,95.5 1396.5,107.5 1397.5,95.5 1397.5,110.5 1397.5,107.5 1398.5,89.5 1398.5,92.5 1398.5,101.5 1399.5,107.5 1399.5,83.5 1399.5,95.5 1400.5,107.5 1400.5,98.5 1400.5,71.5 1401.5,101.5 1401.5,92.5 1401.5,113.5 1402.5,89.5 1402.5,92.5 1402.5,92.5 1403.5,68.5 1403.5,89.5 1403.5,89.5 1404.5,92.5 1404.5,86.5 1404.5,98.5 1405.5,80.5 1405.5,116.5 1406.5,89.5 1406.5,89.5 1406.5,98.5 1407.5,86.5 1407.5,86.5 1407.5,89.5 1408.5,89.5 1408.5,107.5 1408.5,101.5 1409.5,104.5 1409.5,98.5 1409.5,110.5 1410.5,104.5 1410.5,95.5 1410.5,104.5 1411.5,113.5 1411.5,92.5 1411.5,101.5 1412.5,98.5 1412.5,101.5 1412.5,116.5 1413.5,95.5 1413.5,98.5 1413.5,113.5 1414.5,116.5 1414.5,95.5 1414.5,95.5 1415.5,107.5 1415.5,89.5 1415.5,86.5 1416.5,104.5 1416.5,107.5 1416.5,95.5 1417.5,107.5 1417.5,92.5 1417.5,110.5 1418.5,95.5 1418.5,89.5 1418.5,95.5 1419.5,101.5 1419.5,95.5 1420.5,110.5 1420.5,101.5 1420.5,89.5 1421.5,83.5 1421.5,101.5 1421.5,74.5 1422.5,95.5 1422.5,83.5 1422.5,86.5 1423.5,89.5 1423.5,98.5 1423.5,89.5 1424.5,107.5 1424.5,110.5 1424.5,95.5 1425.5,95.5 1425.5,95.5 1425.5,101.5 1426.5,110.5 1426.5,62.5 1426.5,95.5 1427.5,98.5 1427.5,113.5 1427.5,113.5 1428.5,98.5 1428.5,113.5 1428.5,86.5 1429.5,113.5 1429.5,104.5 1429.5,107.5 1430.5,98.5 1430.5,113.5 1430.5,89.5 1431.5,125.5 1431.5,107.5 1431.5,119.5 1432.5,107.5 1432.5,107.5 1433.5,107.5 1433.5,98.5 1433.5,104.5 1434.5,92.5 1434.5,98.5 1434.5,86.5 1435.5,98.5 1435.5,116.5 1435.5,92.5 1436.5,140.5 1436.5,119.5 1436.5,92.5 1437.5,113.5 1437.5,110.5 1437.5,107.5 1438.5,113.5 1438.5,110.5 1438.5,113.5 1439.5,89.5 1439.5,113.5 1439.5,98.5 1440.5,80.5 1440.5,113.5 1440.5,98.5 1441.5,98.5 1441.5,89.5 1441.5,83.5 1442.5,77.5 1442.5,116.5 1442.5,104.5 1443.5,110.5 1443.5,98.5 1443.5,83.5 1444.5,104.5 1444.5,101.5 1444.5,98.5 1445.5,110.5 1445.5,98.5 1445.5,98.5 1446.5,116.5 1446.5,98.5 1447.5,98.5 1447.5,107.5 1447.5,113.5 1448.5,101.5 1448.5,104.5 1448.5,98.5 1449.5,95.5 1449.5,101.5 1449.5,101.5 1450.5,104.5 1450.5,122.5 1450.5,110.5 1451.5,95.5 1451.5,116.5 1451.5,107.5 1452.5,101.5 1452.5,89.5 1452.5,101.5 1453.5,107.5 1453.5,89.5 1453.5,83.5 1454.5,101.5 1454.5,95.5 1454.5,89.5 1455.5,107.5 1455.5,89.5 1455.5,86.5 1456.5,92.5 1456.5,110.5 1456.5,92.5 1457.5,95.5 1457.5,101.5 1457.5,107.5 1458.5,104.5 1458.5,107.5 1458.5,86.5 1459.5,92.5 1459.5,104.5 1459.5,98.5 1460.5,98.5 1460.5,95.5 1461.5,95.5 1461.5,137.5 1461.5,110.5 1462.5,98.5 1462.5,101.5 1462.5,107.5 1463.5,95.5 1463.5,104.5 1463.5,122.5 1464.5,119.5 1464.5,95.5 1464.5,98.5 1465.5,110.5 1465.5,101.5 1465.5,122.5 1466.5,92.5 1466.5,116.5 1466.5,92.5 1467.5,119.5 1467.5,125.5 1467.5,104.5 1468.5,92.5 1468.5,98.5 1468.5,89.5 1469.5,116.5 1469.5,110.5 1469.5,92.5 1470.5,98.5 1470.5,95.5 1470.5,101.5 1471.5,116.5 1471.5,104.5 1471.5,95.5 1472.5,92.5 1472.5,80.5 1472.5,146.5 1473.5,104.5 1473.5,71.5 1473.5,125.5 1474.5,116.5 1474.5,101.5 1475.5,107.5 1475.5,110.5 1475.5,101.5 1476.5,113.5 1476.5,104.5 1476.5,92.5 1477.5,89.5 1477.5,104.5 1477.5,89.5 1478.5,92.5 1478.5,113.5 1478.5,101.5 1479.5,107.5 1479.5,107.5 1479.5,119.5 1480.5,113.5 1480.5,110.5 1480.5,122.5 1481.5,98.5 1481.5,107.5 1481.5,107.5 1482.5,89.5 1482.5,110.5 1482.5,107.5 1483.5,110.5 1483.5,113.5 1483.5,110.5 1484.5,98.5 1484.5,104.5 1484.5,119.5 1485.5,101.5 1485.5,95.5 1485.5,101.5 1486.5,95.5 1486.5,104.5 1486.5,101.5 1487.5,104.5 1487.5,95.5 1487.5,107.5 1488.5,107.5 1488.5,113.5 1489.5,98.5 1489.5,92.5 1489.5,110.5 1490.5,110.5 1490.5,113.5 1490.5,119.5 1491.5,119.5 1491.5,104.5 1491.5,95.5 1492.5,107.5 1492.5,107.5 1492.5,113.5 1493.5,92.5 1493.5,104.5 1493.5,101.5 1494.5,119.5 1494.5,116.5 1494.5,98.5 1495.5,95.5 1495.5,101.5 1495.5,104.5 1496.5,104.5 1496.5,104.5 1496.5,101.5 1497.5,98.5 1497.5,104.5 1497.5,107.5 1498.5,101.5 1498.5,98.5 1498.5,98.5 1499.5,92.5 1499.5,110.5 1499.5,110.5 1500.5,89.5 1500.5,104.5 1500.5,113.5 1501.5,98.5 1501.5,95.5 1501.5,95.5 1502.5,128.5 1502.5,116.5 1503.5,119.5 1503.5,86.5 1503.5,125.5 1504.5,110.5 1504.5,95.5 1504.5,104.5 1505.5,113.5 1505.5,107.5 1505.5,122.5 1506.5,146.5 1506.5,95.5 1506.5,116.5 1507.5,104.5 1507.5,95.5 1507.5,89.5 1508.5,101.5 1508.5,122.5 1508.5,107.5 1509.5,98.5 1509.5,95.5 1509.5,107.5 1510.5,113.5 1510.5,80.5 1510.5,104.5 1511.5,116.5 1511.5,110.5 1511.5,107.5 1512.5,125.5 1512.5,104.5 1512.5,113.5 1513.5,110.5 1513.5,98.5 1513.5,104.5 1514.5,116.5 1514.5,116.5 1514.5,134.5 1515.5,107.5 1515.5,116.5 1515.5,125.5 1516.5,89.5 1516.5,116.5 1517.5,98.5 1517.5,110.5 1517.5,104.5 1518.5,107.5 1518.5,113.5 1518.5,128.5 1519.5,122.5 1519.5,125.5 1519.5,104.5 1520.5,104.5 1520.5,107.5 1520.5,110.5 1521.5,116.5 1521.5,110.5 1521.5,113.5 1522.5,125.5 1522.5,116.5 1522.5,116.5 1523.5,128.5 1523.5,110.5 1523.5,119.5 1524.5,119.5 1524.5,92.5 1524.5,116.5 1525.5,116.5 1525.5,113.5 1525.5,131.5 1526.5,125.5 1526.5,113.5 1526.5,116.5 1527.5,119.5 1527.5,122.5 1527.5,95.5 1528.5,113.5 1528.5,119.5 1528.5,131.5 1529.5,125.5 1529.5,128.5 1530.5,116.5 1530.5,122.5 1530.5,131.5 1531.5,128.5 1531.5,116.5 1531.5,110.5 1532.5,134.5 1532.5,128.5 1532.5,116.5 1533.5,128.5 1533.5,134.5 1533.5,107.5 1534.5,119.5 1534.5,131.5 1534.5,116.5 1535.5,104.5 1535.5,119.5 1535.5,128.5 1536.5,119.5 1536.5,101.5 1536.5,98.5 1537.5,113.5 1537.5,119.5 1537.5,116.5 1538.5,107.5 1538.5,119.5 1538.5,128.5 1539.5,116.5 1539.5,116.5 1539.5,119.5 1540.5,125.5 1540.5,119.5 1540.5,95.5 1541.5,113.5 1541.5,110.5 1541.5,122.5 1542.5,116.5 1542.5,113.5 1542.5,107.5 1543.5,104.5 1543.5,113.5 1544.5,104.5 1544.5,107.5 1544.5,128.5 1545.5,113.5 1545.5,113.5 1545.5,107.5 1546.5,95.5 1546.5,104.5 1546.5,116.5 1547.5,128.5 1547.5,104.5 1547.5,101.5 1548.5,110.5 1548.5,92.5 1548.5,86.5 1549.5,125.5 1549.5,101.5 1549.5,104.5 1550.5,98.5 1550.5,92.5 1550.5,119.5 1551.5,104.5 1551.5,89.5 1551.5,86.5 1552.5,98.5 1552.5,104.5 1552.5,104.5 1553.5,122.5 1553.5,119.5 1553.5,89.5 1554.5,101.5 1554.5,113.5 1554.5,119.5 1555.5,107.5 1555.5,89.5 1555.5,101.5 1556.5,113.5 1556.5,98.5 1556.5,95.5 1557.5,104.5 1557.5,107.5 1558.5,89.5 1558.5,113.5 1558.5,101.5 1559.5,80.5 1559.5,113.5 1559.5,95.5 1560.5,95.5 1560.5,107.5 1560.5,101.5 1561.5,101.5 1561.5,116.5 1561.5,83.5 1562.5,116.5 1562.5,83.5 1562.5,98.5 1563.5,86.5 1563.5,98.5 1563.5,95.5 1564.5,110.5 1564.5,95.5 1564.5,116.5 1565.5,80.5 1565.5,86.5 1565.5,113.5 1566.5,131.5 1566.5,92.5 1566.5,101.5 1567.5,101.5 1567.5,101.5 1567.5,107.5 1568.5,110.5 1568.5,116.5 1568.5,101.5 1569.5,101.5 1569.5,104.5 1569.5,104.5 1570.5,89.5 1570.5,107.5 1570.5,92.5 1571.5,80.5 1571.5,107.5 1572.5,86.5 1572.5,110.5 1572.5,113.5 1573.5,80.5 1573.5,98.5 1573.5,86.5 1574.5,95.5 1574.5,113.5 1574.5,86.5 1575.5,92.5 1575.5,86.5 1575.5,101.5 1576.5,74.5 1576.5,95.5 1576.5,92.5 1577.5,107.5 1577.5,128.5 1577.5,113.5 1578.5,86.5 1578.5,107.5 1578.5,98.5 1579.5,68.5 1579.5,92.5 1579.5,89.5 1580.5,86.5 1580.5,110.5 1580.5,98.5 1581.5,98.5 1581.5,92.5 1581.5,95.5 1582.5,98.5 1582.5,89.5 1582.5,110.5 1583.5,98.5 1583.5,101.5 1583.5,95.5 1584.5,95.5 1584.5,101.5 1584.5,95.5 1585.5,116.5 1585.5,113.5 1586.5,98.5 1586.5,89.5 1586.5,101.5 1587.5,101.5 1587.5,101.5 1587.5,92.5 1588.5,107.5 1588.5,89.5 1588.5,68.5 1589.5,86.5 1589.5,101.5 1589.5,80.5 1590.5,77.5 1590.5,113.5 1590.5,98.5 1591.5,86.5 1591.5,83.5 1591.5,86.5 1592.5,89.5 1592.5,104.5 1592.5,89.5 1593.5,89.5 1593.5,101.5 1593.5,110.5 1594.5,98.5 1594.5,89.5 1594.5,104.5 1595.5,101.5 1595.5,92.5 1595.5,110.5 1596.5,89.5 1596.5,71.5 1596.5,104.5 1597.5,113.5 1597.5,110.5 1597.5,98.5 1598.5,107.5 1598.5,86.5 1598.5,101.5 1599.5,110.5 1599.5,98.5 1600.5,95.5 1600.5,92.5 1600.5,101.5 1601.5,98.5 1601.5,101.5 1601.5,98.5 1602.5,113.5 1602.5,83.5 1602.5,101.5 1603.5,107.5 1603.5,104.5 1603.5,101.5 1604.5,95.5 1604.5,101.5 1604.5,101.5 1605.5,98.5 1605.5,101.5 1605.5,80.5 1606.5,113.5 1606.5,98.5 1606.5,92.5 1607.5,86.5 1607.5,83.5 1607.5,77.5 1608.5,110.5 1608.5,101.5 1608.5,83.5 1609.5,80.5 1609.5,86.5 1609.5,95.5 1610.5,80.5 1610.5,83.5 1610.5,101.5 1611.5,92.5 1611.5,77.5 1611.5,68.5 1612.5,74.5 1612.5,98.5 1612.5,98.5 1613.5,101.5 1613.5,113.5 1614.5,86.5 1614.5,86.5 1614.5,65.5 1615.5,95.5 1615.5,83.5 1615.5,86.5 1616.5,92.5 1616.5,80.5 1616.5,83.5 1617.5,89.5 1617.5,71.5 1617.5,74.5 1618.5,83.5 1618.5,80.5 1618.5,89.5 1619.5,86.5 1619.5,77.5 1619.5,80.5 1620.5,107.5 1620.5,74.5 1620.5,80.5 1621.5,92.5 1621.5,104.5 1621.5,80.5 1622.5,80.5 1622.5,77.5 1622.5,107.5 1623.5,77.5 1623.5,86.5 1623.5,65.5 1624.5,86.5 1624.5,80.5 1624.5,92.5 1625.5,92.5 1625.5,71.5 1625.5,104.5 1626.5,95.5 1626.5,89.5 1627.5,80.5 1627.5,98.5 1627.5,86.5 1628.5,74.5 1628.5,101.5 1628.5,89.5 1629.5,83.5 1629.5,107.5 1629.5,68.5 1630.5,92.5 1630.5,89.5 1630.5,80.5 1631.5,92.5 1631.5,98.5 1631.5,80.5 1632.5,89.5 1632.5,80.5 1632.5,71.5 1633.5,101.5 1633.5,122.5 1633.5,113.5 1634.5,98.5 1634.5,77.5 1634.5,86.5 1635.5,77.5 1635.5,101.5 1635.5,92.5 1636.5,80.5 1636.5,83.5 1636.5,92.5 1637.5,101.5 1637.5,98.5 1637.5,101.5 1638.5,86.5 1638.5,86.5 1638.5,86.5 1639.5,89.5 1639.5,89.5 1639.5,104.5 1640.5,107.5 1640.5,101.5 1641.5,89.5 1641.5,86.5 1641.5,92.5 1642.5,98.5 1642.5,92.5 1642.5,92.5 1643.5,113.5 1643.5,89.5 1643.5,113.5 1644.5,98.5 1644.5,119.5 1644.5,95.5 1645.5,95.5 1645.5,107.5 1645.5,107.5 1646.5,110.5 1646.5,92.5 1646.5,95.5 1647.5,89.5 1647.5,98.5 1647.5,104.5 1648.5,101.5 1648.5,98.5 1648.5,110.5 1649.5,104.5 1649.5,125.5 1649.5,98.5 1650.5,107.5 1650.5,107.5 1650.5,104.5 1651.5,119.5 1651.5,104.5 1651.5,107.5 1652.5,98.5 1652.5,98.5 1652.5,92.5 1653.5,92.5 1653.5,113.5 1653.5,77.5 1654.5,95.5 1654.5,110.5 1655.5,83.5 1655.5,101.5 1655.5,122.5 1656.5,110.5 1656.5,101.5 1656.5,104.5 1657.5,98.5 1657.5,92.5 1657.5,104.5 1658.5,113.5 1658.5,104.5 1658.5,89.5 1659.5,89.5 1659.5,122.5 1659.5,104.5 1660.5,98.5 1660.5,104.5 1660.5,98.5 1661.5,95.5 1661.5,101.5 1661.5,104.5 1662.5,101.5 1662.5,92.5 1662.5,101.5 1663.5,86.5 1663.5,92.5 1663.5,116.5 1664.5,89.5 1664.5,83.5 1664.5,107.5 1665.5,92.5 1665.5,107.5 1665.5,110.5 1666.5,107.5 1666.5,101.5 1666.5,92.5 1667.5,107.5 1667.5,101.5 1667.5,116.5 1668.5,110.5 1668.5,83.5 1669.5,98.5 1669.5,95.5 1669.5,113.5 1670.5,86.5 1670.5,98.5 1670.5,116.5 1671.5,89.5 1671.5,104.5 1671.5,95.5 1672.5,104.5 1672.5,116.5 1672.5,77.5 1673.5,104.5 1673.5,77.5 1673.5,101.5 1674.5,113.5 1674.5,104.5 1674.5,98.5 1675.5,98.5 1675.5,101.5 1675.5,77.5 1676.5,110.5 1676.5,116.5 1676.5,92.5 1677.5,107.5 1677.5,89.5 1677.5,101.5 1678.5,113.5 1678.5,110.5 1678.5,101.5 1679.5,92.5 1679.5,119.5 1679.5,95.5 1680.5,107.5 1680.5,101.5 1680.5,104.5 1681.5,74.5 1681.5,95.5 1681.5,107.5 1682.5,110.5 1682.5,113.5 1683.5,101.5 1683.5,98.5 1683.5,101.5 1684.5,119.5 1684.5,101.5 1684.5,83.5 1685.5,77.5 1685.5,83.5 1685.5,116.5 1686.5,98.5 1686.5,101.5 1686.5,89.5 1687.5,104.5 1687.5,104.5 1687.5,98.5 1688.5,74.5 1688.5,89.5 1688.5,116.5 1689.5,86.5 1689.5,92.5 1689.5,95.5 1690.5,98.5 1690.5,74.5 1690.5,119.5 1691.5,110.5 1691.5,116.5 1691.5,80.5 1692.5,89.5 1692.5,107.5 1692.5,98.5 1693.5,131.5 1693.5,101.5 1693.5,83.5 1694.5,80.5 1694.5,86.5 1694.5,86.5 1695.5,95.5 1695.5,92.5 1695.5,107.5 1696.5,110.5 1696.5,104.5 1697.5,101.5 1697.5,80.5 1697.5,89.5 1698.5,98.5 1698.5,116.5 1698.5,95.5 1699.5,110.5 1699.5,107.5 1699.5,89.5 1700.5,86.5 1700.5,98.5 1700.5,113.5 1701.5,113.5 1701.5,89.5 1701.5,95.5 1702.5,89.5 1702.5,110.5 1702.5,89.5 1703.5,92.5 1703.5,110.5 1703.5,113.5 1704.5,107.5 1704.5,89.5 1704.5,110.5 1705.5,83.5 1705.5,107.5 1705.5,92.5 1706.5,95.5 1706.5,119.5 1706.5,104.5 1707.5,89.5 1707.5,83.5 1707.5,86.5 1708.5,95.5 1708.5,104.5 1708.5,107.5 1709.5,92.5 1709.5,116.5 1709.5,92.5 1710.5,92.5 1710.5,95.5 1711.5,80.5 1711.5,122.5 1711.5,101.5 1712.5,116.5 1712.5,113.5 1712.5,110.5 1713.5,101.5 1713.5,104.5 1713.5,95.5 1714.5,101.5 1714.5,101.5 1714.5,119.5 1715.5,122.5 1715.5,83.5 1715.5,98.5 1716.5,113.5 1716.5,107.5 1716.5,101.5 1717.5,101.5 1717.5,74.5 1717.5,125.5 1718.5,92.5 1718.5,98.5 1718.5,98.5 1719.5,107.5 1719.5,107.5 1719.5,95.5 1720.5,89.5 1720.5,107.5 1720.5,95.5 1721.5,104.5 1721.5,77.5 1721.5,80.5 1722.5,92.5 1722.5,98.5 1722.5,104.5 1723.5,98.5 1723.5,104.5 1724.5,74.5 1724.5,107.5 1724.5,110.5 1725.5,77.5 1725.5,74.5 1725.5,89.5 1726.5,98.5 1726.5,89.5 1726.5,98.5 1727.5,98.5 1727.5,113.5 1727.5,89.5 1728.5,92.5 1728.5,65.5 1728.5,92.5 1729.5,83.5 1729.5,89.5 1729.5,95.5 1730.5,80.5 1730.5,95.5 1730.5,98.5 1731.5,95.5 1731.5,98.5 1731.5,122.5 1732.5,107.5 1732.5,89.5 1732.5,101.5 1733.5,92.5 1733.5,131.5 1733.5,80.5 1734.5,104.5 1734.5,107.5 1734.5,95.5 1735.5,86.5 1735.5,80.5 1735.5,104.5 1736.5,74.5 1736.5,101.5 1736.5,89.5 1737.5,83.5 1737.5,122.5 1738.5,89.5 1738.5,71.5 1738.5,110.5 1739.5,86.5 1739.5,95.5 1739.5,104.5 1740.5,116.5 1740.5,95.5 1740.5,92.5 1741.5,107.5 1741.5,83.5 1741.5,101.5 1742.5,89.5 1742.5,101.5 1742.5,95.5 1743.5,86.5 1743.5,89.5 1743.5,77.5 1744.5,74.5 1744.5,95.5 1744.5,92.5 1745.5,104.5 1745.5,98.5 1745.5,86.5 1746.5,77.5 1746.5,95.5 1746.5,95.5 1747.5,110.5 1747.5,77.5 1747.5,86.5 1748.5,89.5 1748.5,86.5 1748.5,86.5 1749.5,107.5 1749.5,104.5 1749.5,95.5 1750.5,95.5 1750.5,77.5 1750.5,101.5 1751.5,77.5 1751.5,92.5 1752.5,92.5 1752.5,86.5 1752.5,89.5 1753.5,86.5 1753.5,89.5 1753.5,101.5 1754.5,83.5 1754.5,110.5 1754.5,80.5 1755.5,98.5 1755.5,104.5 1755.5,83.5 1756.5,83.5 1756.5,104.5 1756.5,101.5 1757.5,86.5 1757.5,107.5 1757.5,98.5 1758.5,107.5 1758.5,101.5 1758.5,116.5 1759.5,89.5 1759.5,107.5 1759.5,101.5 1760.5,95.5 1760.5,101.5 1760.5,95.5 1761.5,89.5 1761.5,89.5 1761.5,83.5 1762.5,113.5 1762.5,98.5 1762.5,101.5 1763.5,107.5 1763.5,86.5 1763.5,101.5 1764.5,101.5 1764.5,89.5 1764.5,101.5 1765.5,107.5 1765.5,137.5 1766.5,101.5 1766.5,98.5 1766.5,101.5 1767.5,116.5 1767.5,116.5 1767.5,113.5 1768.5,113.5 1768.5,107.5 1768.5,104.5 1769.5,128.5 1769.5,92.5 1769.5,113.5 1770.5,104.5 1770.5,95.5 1770.5,89.5 1771.5,98.5 1771.5,131.5 1771.5,119.5 1772.5,101.5 1772.5,113.5 1772.5,98.5 1773.5,116.5 1773.5,110.5 1773.5,113.5 1774.5,113.5 1774.5,110.5 1774.5,95.5 1775.5,113.5 1775.5,116.5 1775.5,107.5 1776.5,95.5 1776.5,110.5" fill="none" stroke="#ffff00" stroke-width="1"/><path d="M1097 125.5h2M1098 128.5h2M1098 125.5h2M1099 95.5h2M1100 83.5h2M1101 110.5h2M1101 107.5h2M1102 128.5h2M1103 125.5h2M1103 74.5h2M1104 110.5h2M1105 107.5h2M1105 113.5h2M1106 119.5h2M1107 101.5h2M1107 92.5h2M1108 104.5h2M1109 107.5h2M1109 101.5h2M1110 104.5h2M1111 152.5h2M1111 107.5h2M1112 104.5h2M1113 98.5h2M1113 113.5h2M1114 119.5h2M1115 92.5h2M1116 98.5h2M1116 83.5h2M1117 104.5h2M1118 107.5h2M1118 107.5h2M1119 104.5h2M1120 110.5h2M1120 107.5h2M1121 101.5h2M1122 116.5h2M1122 128.5h2M1123 110.5h2M1124 101.5h2M1124 119.5h2M1125 110.5h2M1126 98.5h2M1126 107.5h2M1127 122.5h2M1128 89.5h2M1129 110.5h2M1129 95.5h2M1130 119.5h2M1131 128.5h2M1131 122.5h2M1132 101.5h2M1133 113.5h2M1133 110.5h2M1134 110.5h2M1135 107.5h2M1135 101.5h2M1136 119.5h2M1137 101.5h2M1137 113.5h2M1138 116.5h2M1139 113.5h2M1139 104.5h2M1140 98.5h2M1141 101.5h2M1142 110.5h2M1142 104.5h2M1143 140.5h2M1144 107.5h2M1144 113.5h2M1145 89.5h2M1146 98.5h2M1146 86.5h2M1147 98.5h2M1148 113.5h2M1148 101.5h2M1149 110.5h2M1150 98.5h2M1150 119.5h2M1151 80.5h2M1152 122.5h2M1152 101.5h2M1153 110.5h2M1154 104.5h2M1154 110.5h2M1155 104.5h2M1156 92.5h2M1157 92.5h2M1157 98.5h2M1158 86.5h2M1159 113.5h2M1159 92.5h2M1160 95.5h2M1161 116.5h2M1161 107.5h2M1162 110.5h2M1163 113.5h2M1163 98.5h2M1164 122.5h2M1165 101.5h2M1165 107.5h2M1166 80.5h2M1167 104.5h2M1167 119.5h2M1168 104.5h2M1169 80.5h2M1170 104.5h2M1170 98.5h2M1171 116.5h2M1172 98.5h2M1172 98.5h2M1173 101.5h2M1174 104.5h2M1174 110.5h2M1175 107.5h2M1176 86.5h2M1176 89.5h2M1177 113.5h2M1178 101.5h2M1178 110.5h2M1179 98.5h2M1180 104.5h2M1180 101.5h2M1181 104.5h2M1182 92.5h2M1182 95.5h2M1183 95.5h2M1184 119.5h2M1185 116.5h2M1185 89.5h2M1186 116.5h2M1187 98.5h2M1187 104.5h2M1188 116.5h2M1189 110.5h2M1189 104.5h2M1190 92.5h2M1191 101.5h2M1191 83.5h2M1192 95.5h2M1193 104.5h2M1193 107.5h2M1194 101.5h2M1195 116.5h2M1195 113.5h2M1196 77.5h2M1197 86.5h2M1198 107.5h2M1198 116.5h2M1199 104.5h2M1200 98.5h2M1200 107.5h2M1201 89.5h2M1202 110.5h2M1202 104.5h2M1203 98.5h2M1204 110.5h2M1204 119.5h2M1205 104.5h2M1206 86.5h2M1206 113.5h2M1207 101.5h2M1208 95.5h2M1208 104.5h2M1209 107.5h2M1210 80.5h2M1210 101.5h2M1211 83.5h2M1212 110.5h2M1213 98.5h2M1213 95.5h2M1214 98.5h2M1215 116.5h2M1215 101.5h2M1216 98.5h2M1217 89.5h2M1217 107.5h2M1218 119.5h2M1219 86.5h2M1219 104.5h2M1220 95.5h2M1221 92.5h2M1221 119.5h2M1222 107.5h2M1223 107.5h2M1223 110.5h2M1224 89.5h2M1225 92.5h2M1226 98.5h2M1226 101.5h2M1227 98.5h2M1228 107.5h2M1228 104.5h2M1229 125.5h2M1230 77.5h2M1230 113.5h2M1231 134.5h2M1232 101.5h2M1232 101.5h2M1233 92.5h2M1234 89.5h2M1234 98.5h2M1235 113.5h2M1236 86.5h2M1236 95.5h2M1237 101.5h2M1238 128.5h2M1239 113.5h2M1239 98.5h2M1240 110.5h2M1241 122.5h2M1241 104.5h2M1242 92.5h2M1243 119.5h2M1243 101.5h2M1244 104.5h2M1245 116.5h2M1245 89.5h2M1246 98.5h2M1247 101.5h2M1247 116.5h2M1248 95.5h2M1249 104.5h2M1249 101.5h2M1250 98.5h2M1251 95.5h2M1251 95.5h2M1252 101.5h2M1253 98.5h2M1254 89.5h2M1254 86.5h2M1255 98.5h2M1256 101.5h2M1256 89.5h2M1257 110.5h2M1258 89.5h2M1258 59.5h2M1259 113.5h2M1260 95.5h2M1260 83.5h2M1261 98.5h2M1262 89.5h2M1262 107.5h2M1263 98.5h2M1264 80.5h2M1264 107.5h2M1265 104.5h2M1266 77.5h2M1267 107.5h2M1267 107.5h2M1268 80.5h2M1269 110.5h2M1269 92.5h2M1270 98.5h2M1271 95.5h2M1271 74.5h2M1272 89.5h2M1273 98.5h2M1273 95.5h2M1274 89.5h2M1275 77.5h2M1275 107.5h2M1276 89.5h2M1277 86.5h2M1277 77.5h2M1278 107.5h2M1279 92.5h2M1279 98.5h2M1280 107.5h2M1281 89.5h2M1282 92.5h2M1282 98.5h2M1283 98.5h2M1284 107.5h2M1284 104.5h2M1285 89.5h2M1286 89.5h2M1286 101.5h2M1287 101.5h2M1288 77.5h2M1288 104.5h2M1289 98.5h2M1290 113.5h2M1290 95.5h2M1291 95.5h2M1292 101.5h2M1292 101.5h2M1293 116.5h2M1294 107.5h2M1295 104.5h2M1295 113.5h2M1296 95.5h2M1297 107.5h2M1297 113.5h2M1298 110.5h2M1299 107.5h2M1299 107.5h2M1300 101.5h2M1301 104.5h2M1301 107.5h2M1302 101.5h2M1303 104.5h2M1303 107.5h2M1304 104.5h2M1305 119.5h2M1305 116.5h2M1306 113.5h2M1307 116.5h2M1307 104.5h2M1308 110.5h2M1309 113.5h2M1310 113.5h2M1310 89.5h2M1311 95.5h2M1312 89.5h2M1312 89.5h2M1313 104.5h2M1314 107.5h2M1314 101.5h2M1315 101.5h2M1316 92.5h2M1316 89.5h2M1317 104.5h2M1318 104.5h2M1318 101.5h2M1319 98.5h2M1320 89.5h2M1320 95.5h2M1321 80.5h2M1322 89.5h2M1323 107.5h2M1323 92.5h2M1324 101.5h2M1325 104.5h2M1325 113.5h2M1326 101.5h2M1327 113.5h2M1327 98.5h2M1328 104.5h2M1329 110.5h2M1329 119.5h2M1330 104.5h2M1331 86.5h2M1331 92.5h2M1332 113.5h2M1333 92.5h2M1333 80.5h2M1334 77.5h2M1335 92.5h2M1336 101.5h2M1336 101.5h2M1337 101.5h2M1338 101.5h2M1338 95.5h2M1339 89.5h2M1340 95.5h2M1340 104.5h2M1341 95.5h2M1342 95.5h2M1342 98.5h2M1343 80.5h2M1344 89.5h2M1344 80.5h2M1345 86.5h2M1346 98.5h2M1346 74.5h2M1347 101.5h2M1348 77.5h2M1348 83.5h2M1349 92.5h2M1350 107.5h2M1351 86.5h2M1351 77.5h2M1352 89.5h2M1353 101.5h2M1353 107.5h2M1354 86.5h2M1355 83.5h2M1355 107.5h2M1356 92.5h2M1357 95.5h2M1357 74.5h2M1358 98.5h2M1359 83.5h2M1359 107.5h2M1360 83.5h2M1361 104.5h2M1361 116.5h2M1362 95.5h2M1363 98.5h2M1364 104.5h2M1364 104.5h2M1365 95.5h2M1366 92.5h2M1366 95.5h2M1367 74.5h2M1368 89.5h2M1368 104.5h2M1369 113.5h2M1370 86.5h2M1370 71.5h2M1371 101.5h2M1372 86.5h2M1372 80.5h2M1373 101.5h2M1374 107.5h2M1374 104.5h2M1375 92.5h2M1376 98.5h2M1376 113.5h2M1377 104.5h2M1378 77.5h2M1379 92.5h2M1379 98.5h2M1380 92.5h2M1381 86.5h2M1381 95.5h2M1382 119.5h2M1383 101.5h2M1383 83.5h2M1384 113.5h2M1385 68.5h2M1385 83.5h2M1386 98.5h2M1387 104.5h2M1387 95.5h2M1388 92.5h2M1389 101.5h2M1389 98.5h2M1390 89.5h2M1391 107.5h2M1392 107.5h2M1392 101.5h2M1393 101.5h2M1394 98.5h2M1394 107.5h2M1395 101.5h2M1396 101.5h2M1396 107.5h2M1397 110.5h2M1398 89.5h2M1398 101.5h2M1399 83.5h2M1400 107.5h2M1400 71.5h2M1401 92.5h2M1402 89.5h2M1402 92.5h2M1403 89.5h2M1404 92.5h2M1404 98.5h2M1405 116.5h2M1406 89.5h2M1407 86.5h2M1407 89.5h2M1408 107.5h2M1409 104.5h2M1409 110.5h2M1410 95.5h2M1411 113.5h2M1411 101.5h2M1412 101.5h2M1413 95.5h2M1413 113.5h2M1414 95.5h2M1415 107.5h2M1415 86.5h2M1416 107.5h2M1417 107.5h2M1417 110.5h2M1418 89.5h2M1419 101.5h2M1420 110.5h2M1420 89.5h2M1421 101.5h2M1422 95.5h2M1422 86.5h2M1423 98.5h2M1424 107.5h2M1424 95.5h2M1425 95.5h2M1426 110.5h2M1426 95.5h2M1427 113.5h2M1428 98.5h2M1428 86.5h2M1429 104.5h2M1430 98.5h2M1430 89.5h2M1431 107.5h2M1432 107.5h2M1433 107.5h2M1433 104.5h2M1434 98.5h2M1435 98.5h2M1435 92.5h2M1436 119.5h2M1437 113.5h2M1437 107.5h2M1438 110.5h2M1439 89.5h2M1439 98.5h2M1440 113.5h2M1441 98.5h2M1441 83.5h2M1442 116.5h2M1443 110.5h2M1443 83.5h2M1444 101.5h2M1445 110.5h2M1445 98.5h2M1446 98.5h2M1447 107.5h2M1448 101.5h2M1448 98.5h2M1449 101.5h2M1450 104.5h2M1450 110.5h2M1451 116.5h2M1452 101.5h2M1452 101.5h2M1453 89.5h2M1454 101.5h2M1454 89.5h2M1455 89.5h2M1456 92.5h2M1456 92.5h2M1457 101.5h2M1458 104.5h2M1458 86.5h2M1459 104.5h2M1460 98.5h2M1461 95.5h2M1461 110.5h2M1462 101.5h2M1463 95.5h2M1463 122.5h2M1464 95.5h2M1465 110.5h2M1465 122.5h2M1466 116.5h2M1467 119.5h2M1467 104.5h2M1468 98.5h2M1469 116.5h2M1469 92.5h2M1470 95.5h2M1471 116.5h2M1471 95.5h2M1472 80.5h2M1473 104.5h2M1473 125.5h2M1474 101.5h2M1475 110.5h2M1476 113.5h2M1476 92.5h2M1477 104.5h2M1478 92.5h2M1478 101.5h2M1479 107.5h2M1480 113.5h2M1480 122.5h2M1481 107.5h2M1482 89.5h2M1482 107.5h2M1483 113.5h2M1484 98.5h2M1484 119.5h2M1485 95.5h2M1486 95.5h2M1486 101.5h2M1487 95.5h2M1488 107.5h2M1489 98.5h2M1489 110.5h2M1490 113.5h2M1491 119.5h2M1491 95.5h2M1492 107.5h2M1493 92.5h2M1493 101.5h2M1494 116.5h2M1495 95.5h2M1495 104.5h2M1496 104.5h2M1497 98.5h2M1497 107.5h2M1498 98.5h2M1499 92.5h2M1499 110.5h2M1500 104.5h2M1501 98.5h2M1501 95.5h2M1502 116.5h2M1503 86.5h2M1504 110.5h2M1504 104.5h2M1505 107.5h2M1506 146.5h2M1506 116.5h2M1507 95.5h2M1508 101.5h2M1508 107.5h2M1509 95.5h2M1510 113.5h2M1510 104.5h2M1511 110.5h2M1512 125.5h2M1512 113.5h2M1513 98.5h2M1514 116.5h2M1514 134.5h2M1515 116.5h2M1516 89.5h2M1517 98.5h2M1517 104.5h2M1518 113.5h2M1519 122.5h2M1519 104.5h2M1520 107.5h2M1521 116.5h2M1521 113.5h2M1522 116.5h2M1523 128.5h2M1523 119.5h2M1524 92.5h2M1525 116.5h2M1525 131.5h2M1526 113.5h2M1527 119.5h2M1527 95.5h2M1528 119.5h2M1529 125.5h2M1530 116.5h2M1530 131.5h2M1531 116.5h2M1532 134.5h2M1532 116.5h2M1533 134.5h2M1534 119.5h2M1534 116.5h2M1535 119.5h2M1536 119.5h2M1536 98.5h2M1537 119.5h2M1538 107.5h2M1538 128.5h2M1539 116.5h2M1540 125.5h2M1540 95.5h2M1541 110.5h2M1542 116.5h2M1542 107.5h2M1543 113.5h2M1544 107.5h2M1545 113.5h2M1545 107.5h2M1546 104.5h2M1547 128.5h2M1547 101.5h2M1548 92.5h2M1549 125.5h2M1549 104.5h2M1550 92.5h2M1551 104.5h2M1551 86.5h2M1552 104.5h2M1553 122.5h2M1553 89.5h2M1554 113.5h2M1555 107.5h2M1555 101.5h2M1556 98.5h2M1557 104.5h2M1558 89.5h2M1558 101.5h2M1559 113.5h2M1560 95.5h2M1560 101.5h2M1561 116.5h2M1562 116.5h2M1562 98.5h2M1563 98.5h2M1564 110.5h2M1564 116.5h2M1565 86.5h2M1566 131.5h2M1566 101.5h2M1567 101.5h2M1568 110.5h2M1568 101.5h2M1569 104.5h2M1570 89.5h2M1570 92.5h2M1571 107.5h2M1572 110.5h2M1573 80.5h2M1573 86.5h2M1574 113.5h2M1575 92.5h2M1575 101.5h2M1576 95.5h2M1577 107.5h2M1577 113.5h2M1578 107.5h2M1579 68.5h2M1579 89.5h2M1580 110.5h2M1581 98.5h2M1581 95.5h2M1582 89.5h2M1583 98.5h2M1583 95.5h2M1584 101.5h2M1585 116.5h2M1586 98.5h2M1586 101.5h2M1587 101.5h2M1588 107.5h2M1588 68.5h2M1589 101.5h2M1590 77.5h2M1590 98.5h2M1591 83.5h2M1592 89.5h2M1592 89.5h2M1593 101.5h2M1594 98.5h2M1594 104.5h2M1595 92.5h2M1596 89.5h2M1596 104.5h2M1597 110.5h2M1598 107.5h2M1598 101.5h2M1599 98.5h2M1600 92.5h2M1601 98.5h2M1601 98.5h2M1602 83.5h2M1603 107.5h2M1603 101.5h2M1604 101.5h2M1605 98.5h2M1605 80.5h2M1606 98.5h2M1607 86.5h2M1607 77.5h2M1608 101.5h2M1609 80.5h2M1609 95.5h2M1610 83.5h2M1611 92.5h2M1611 68.5h2M1612 98.5h2M1613 101.5h2M1614 86.5h2M1614 65.5h2M1615 83.5h2M1616 92.5h2M1616 83.5h2M1617 71.5h2M1618 83.5h2M1618 89.5h2M1619 77.5h2M1620 107.5h2M1620 80.5h2M1621 104.5h2M1622 80.5h2M1622 107.5h2M1623 86.5h2M1624 86.5h2M1624 92.5h2M1625 71.5h2M1626 95.5h2M1627 80.5h2M1627 86.5h2M1628 101.5h2M1629 83.5h2M1629 68.5h2M1630 89.5h2M1631 92.5h2M1631 80.5h2M1632 80.5h2M1633 101.5h2M1633 113.5h2M1634 77.5h2M1635 77.5h2M1635 92.5h2M1636 83.5h2M1637 101.5h2M1637 101.5h2M1638 86.5h2M1639 89.5h2M1639 104.5h2M1640 101.5h2M1641 86.5h2M1642 98.5h2M1642 92.5h2M1643 89.5h2M1644 98.5h2M1644 95.5h2M1645 107.5h2M1646 110.5h2M1646 95.5h2M1647 98.5h2M1648 101.5h2M1648 110.5h2M1649 125.5h2M1650 107.5h2M1650 104.5h2M1651 104.5h2M1652 98.5h2M1652 92.5h2M1653 113.5h2M1654 95.5h2M1655 83.5h2M1655 122.5h2M1656 101.5h2M1657 98.5h2M1657 104.5h2M1658 104.5h2M1659 89.5h2M1659 104.5h2M1660 104.5h2M1661 95.5h2M1661 104.5h2M1662 92.5h2M1663 86.5h2M1663 116.5h2M1664 83.5h2M1665 92.5h2M1665 110.5h2M1666 101.5h2M1667 107.5h2M1667 116.5h2M1668 83.5h2M1669 95.5h2M1670 86.5h2M1670 116.5h2M1671 104.5h2M1672 104.5h2M1672 77.5h2M1673 77.5h2M1674 113.5h2M1674 98.5h2M1675 101.5h2M1676 110.5h2M1676 92.5h2M1677 89.5h2M1678 113.5h2M1678 101.5h2M1679 119.5h2M1680 107.5h2M1680 104.5h2M1681 95.5h2M1682 110.5h2M1683 101.5h2M1683 101.5h2M1684 101.5h2M1685 77.5h2M1685 116.5h2M1686 101.5h2M1687 104.5h2M1687 98.5h2M1688 89.5h2M1689 86.5h2M1689 95.5h2M1690 74.5h2M1691 110.5h2M1691 80.5h2M1692 107.5h2M1693 131.5h2M1693 83.5h2M1694 86.5h2M1695 95.5h2M1695 107.5h2M1696 104.5h2M1697 80.5h2M1698 98.5h2M1698 95.5h2M1699 107.5h2M1700 86.5h2M1700 113.5h2M1701 89.5h2M1702 89.5h2M1702 89.5h2M1703 110.5h2M1704 107.5h2M1704 110.5h2M1705 107.5h2M1706 95.5h2M1706 104.5h2M1707 83.5h2M1708 95.5h2M1708 107.5h2M1709 116.5h2M1710 92.5h2M1711 80.5h2M1711 101.5h2M1712 113.5h2M1713 101.5h2M1713 95.5h2M1714 101.5h2M1715 122.5h2M1715 98.5h2M1716 107.5h2M1717 101.5h2M1717 125.5h2M1718 98.5h2M1719 107.5h2M1719 95.5h2M1720 107.5h2M1721 104.5h2M1721 80.5h2M1722 98.5h2M1723 98.5h2M1724 74.5h2M1724 110.5h2M1725 74.5h2M1726 98.5h2M1726 98.5h2M1727 113.5h2M1728 92.5h2M1728 92.5h2M1729 89.5h2M1730 80.5h2M1730 98.5h2M1731 98.5h2M1732 107.5h2M1732 101.5h2M1733 131.5h2M1734 104.5h2M1734 95.5h2M1735 80.5h2M1736 74.5h2M1736 89.5h2M1737 122.5h2M1738 71.5h2M1739 86.5h2M1739 104.5h2M1740 95.5h2M1741 107.5h2M1741 101.5h2M1742 101.5h2M1743 86.5h2M1743 77.5h2M1744 95.5h2M1745 104.5h2M1745 86.5h2M1746 95.5h2M1747 110.5h2M1747 86.5h2M1748 86.5h2M1749 107.5h2M1749 95.5h2M1750 77.5h2M1751 77.5h2M1752 92.5h2M1752 89.5h2M1753 89.5h2M1754 83.5h2M1754 80.5h2M1755 104.5h2M1756 83.5h2M1756 101.5h2M1757 107.5h2M1758 107.5h2M1758 116.5h2M1759 107.5h2M1760 95.5h2M1760 95.5h2M1761 89.5h2M1762 113.5h2M1762 101.5h2M1763 86.5h2M1764 101.5h2M1764 101.5h2M1765 137.5h2M1766 98.5h2M1767 116.5h2M1767 113.5h2M1768 107.5h2M1769 128.5h2M1769 113.5h2M1770 95.5h2M1771 98.5h2M1771 119.5h2M1772 113.5h2M1773 116.5h2M1773 113.5h2M1774 110.5h2M1775 113.5h2M1775 107.5h2M1776 110.5h2" stroke="#ffa000" stroke-width="2" fill="none"/><rect x="1097" y="57" width="1" height="370" fill="#000"/><rect x="1097" y="422" width="681" height="1" fill="#000"/><rect x="1097.0" y="422" width="1.2" height="4.5" fill="#000"/><rect x="1131.2" y="422" width="1.2" height="4.5" fill="#000"/><rect x="1165.3" y="422" width="1.2" height="4.5" fill="#000"/><rect x="1199.5" y="422" width="1.2" height="4.5" fill="#000"/><rect x="1233.6" y="422" width="1.2" height="4.5" fill="#000"/><rect x="1267.8" y="422" width="1.2" height="4.5" fill="#000"/><rect x="1301.9" y="422" width="1.2" height="4.5" fill="#000"/><rect x="1336.0" y="422" width="1.2" height="4.5" fill="#000"/><rect x="1370.2" y="422" width="1.2" height="4.5" fill="#000"/><rect x="1404.3" y="422" width="1.2" height="4.5" fill="#000"/><rect x="1438.5" y="422" width="1.2" height="4.5" fill="#000"/><rect x="1472.7" y="422" width="1.2" height="4.5" fill="#000"/><rect x="1506.8" y="422" width="1.2" height="4.5" fill="#000"/><rect x="1541.0" y="422" width="1.2" height="4.5" fill="#000"/><rect x="1575.1" y="422" width="1.2" height="4.5" fill="#000"/><rect x="1609.2" y="422" width="1.2" height="4.5" fill="#000"/><rect x="1643.4" y="422" width="1.2" height="4.5" fill="#000"/><rect x="1677.5" y="422" width="1.2" height="4.5" fill="#000"/><rect x="1711.7" y="422" width="1.2" height="4.5" fill="#000"/><rect x="1745.8" y="422" width="1.2" height="4.5" fill="#000"/></svg>
<span class="t" style="left:1063.5px;top:370.4px;font-size:11.5px;transform:scale(0.927,1.120);">1000</span>
<span class="t" style="left:1063.5px;top:334.9px;font-size:11.5px;transform:scale(0.927,1.120);">2000</span>
<span class="t" style="left:1063.5px;top:299.4px;font-size:11.5px;transform:scale(0.927,1.120);">3000</span>
<span class="t" style="left:1063.5px;top:263.9px;font-size:11.5px;transform:scale(0.927,1.120);">4000</span>
<span class="t" style="left:1063.5px;top:228.4px;font-size:11.5px;transform:scale(0.927,1.120);">5000</span>
<span class="t" style="left:1063.5px;top:193.0px;font-size:11.5px;transform:scale(0.927,1.120);">6000</span>
<span class="t" style="left:1063.5px;top:157.5px;font-size:11.5px;transform:scale(0.927,1.120);">7000</span>
<span class="t" style="left:1063.5px;top:122.0px;font-size:11.5px;transform:scale(0.927,1.120);">8000</span>
<span class="t" style="left:1063.5px;top:86.5px;font-size:11.5px;transform:scale(0.927,1.120);">9000</span>
<span class="t" style="left:1089.7px;top:405.9px;font-size:11.5px;transform:scale(0.950,1.120);">0</span>
<span class="t" style="left:1097.5px;top:426.1px;font-size:11.5px;transform:scale(0.950,1.120);">0</span>
<span class="t" style="left:1124.9px;top:426.1px;font-size:11.5px;transform:scale(0.858,1.120);">100</span>
<span class="t" style="left:1159.0px;top:426.1px;font-size:11.5px;transform:scale(0.858,1.120);">200</span>
<span class="t" style="left:1193.2px;top:426.1px;font-size:11.5px;transform:scale(0.858,1.120);">300</span>
<span class="t" style="left:1227.3px;top:426.1px;font-size:11.5px;transform:scale(0.858,1.120);">400</span>
<span class="t" style="left:1261.5px;top:426.1px;font-size:11.5px;transform:scale(0.858,1.120);">500</span>
<span class="t" style="left:1295.6px;top:426.1px;font-size:11.5px;transform:scale(0.858,1.120);">600</span>
<span class="t" style="left:1329.8px;top:426.1px;font-size:11.5px;transform:scale(0.858,1.120);">700</span>
<span class="t" style="left:1363.9px;top:426.1px;font-size:11.5px;transform:scale(0.858,1.120);">800</span>
<span class="t" style="left:1398.0px;top:426.1px;font-size:11.5px;transform:scale(0.858,1.120);">900</span>
<span class="t" style="left:1429.6px;top:426.1px;font-size:11.5px;transform:scale(0.846,1.120);">1000</span>
<span class="t" style="left:1463.8px;top:426.1px;font-size:11.5px;transform:scale(0.876,1.120);">1100</span>
<span class="t" style="left:1497.9px;top:426.1px;font-size:11.5px;transform:scale(0.846,1.120);">1200</span>
<span class="t" style="left:1532.0px;top:426.1px;font-size:11.5px;transform:scale(0.846,1.120);">1300</span>
<span class="t" style="left:1566.2px;top:426.1px;font-size:11.5px;transform:scale(0.846,1.120);">1400</span>
<span class="t" style="left:1600.3px;top:426.1px;font-size:11.5px;transform:scale(0.846,1.120);">1500</span>
<span class="t" style="left:1634.5px;top:426.1px;font-size:11.5px;transform:scale(0.846,1.120);">1600</span>
<span class="t" style="left:1668.6px;top:426.1px;font-size:11.5px;transform:scale(0.846,1.120);">1700</span>
<span class="t" style="left:1702.8px;top:426.1px;font-size:11.5px;transform:scale(0.846,1.120);">1800</span>
<span class="t" style="left:1736.9px;top:426.1px;font-size:11.5px;transform:scale(0.846,1.120);">1900</span>
<div class="a" style="left:1039px;top:467px;width:754px;height:1px;background:#fff;"></div>
<span class="t" style="left:1046.9px;top:472.3px;font-size:13px;transform:scale(0.932,1.000);">Current-</span>
<span class="t" style="left:1055.5px;top:488.3px;font-size:13px;transform:scale(0.840,1.000);">Frame</span>
<span class="t" style="left:1107.4px;top:472.3px;font-size:13px;transform:scale(0.845,1.000);">Luminous</span>
<span class="t" style="left:1107.0px;top:488.3px;font-size:13px;transform:scale(0.907,1.000);">Intensity</span>
<div class="a" style="left:1047px;top:504px;width:48px;height:19px;background:#fff;border:1px solid;border-color:#a0a0a0 #fff #fff #a0a0a0;box-shadow:inset 1px 1px #696969,inset -1px -1px #e3e3e3;"></div>
<div class="a" style="left:1104px;top:504px;width:55px;height:19px;background:#fff;border:1px solid;border-color:#a0a0a0 #fff #fff #a0a0a0;box-shadow:inset 1px 1px #696969,inset -1px -1px #e3e3e3;"></div>
<div class="a" style="left:1166px;top:474px;width:159px;height:18px;background:#f4f4f4;background-image:repeating-linear-gradient(45deg,#ececec 0 1px,#fafafa 1px 2px);"></div>
<div class="a" style="left:1166px;top:474px;width:17px;height:18px;background:#f0f0f0;border:1px solid;border-color:#fff #696969 #696969 #fff;box-shadow:inset -1px -1px #a0a0a0,inset 1px 1px #e3e3e3;"></div>
<svg class="a" style="left:0;top:0;overflow:visible" width="1" height="1"><polygon points="1176.25,479.5 1176.25,486.5 1172.75,483" fill="#000"/></svg>
<div class="a" style="left:1183px;top:474px;width:17px;height:18px;background:#777;background-image:repeating-linear-gradient(45deg,#444 0 1px,#bbb 1px 2px);border:1px solid #f0f0f0;"></div>
<div class="a" style="left:1309px;top:474px;width:16px;height:18px;background:#f0f0f0;border:1px solid;border-color:#fff #696969 #696969 #fff;box-shadow:inset -1px -1px #a0a0a0,inset 1px 1px #e3e3e3;"></div>
<svg class="a" style="left:0;top:0;overflow:visible" width="1" height="1"><polygon points="1315.75,479.5 1315.75,486.5 1319.25,483" fill="#000"/></svg>
<span class="t" style="left:1332.4px;top:479.0px;font-size:13px;transform:scale(0.869,1.000);">Scale</span>
<div class="a" style="left:1371px;top:473px;width:21px;height:18px;background:#fff;border:1px solid;border-color:#a0a0a0 #fff #fff #a0a0a0;box-shadow:inset 1px 1px #696969,inset -1px -1px #e3e3e3;"></div>
<span class="t" style="left:1375.7px;top:474.8px;font-size:13px;transform:scale(0.800,1.000);">1</span>
<div class="a" style="left:1396px;top:472px;width:16px;height:11px;background:#f0f0f0;border:1px solid;border-color:#fff #696969 #696969 #fff;box-shadow:inset -1px -1px #a0a0a0,inset 1px 1px #e3e3e3;"></div>
<div class="a" style="left:1396px;top:483px;width:16px;height:11px;background:#f0f0f0;border:1px solid;border-color:#fff #696969 #696969 #fff;box-shadow:inset -1px -1px #a0a0a0,inset 1px 1px #e3e3e3;"></div>
<svg class="a" style="left:0;top:0;overflow:visible" width="1" height="1"><polygon points="1400.6,478.75 1406.6,478.75 1403.6,475.75" fill="#000"/></svg>
<svg class="a" style="left:0;top:0;overflow:visible" width="1" height="1"><polygon points="1400.6,487.04999999999995 1406.6,487.04999999999995 1403.6,490.04999999999995" fill="#000"/></svg>
<span class="t" style="left:1335.5px;top:503.3px;font-size:13px;transform:scale(0.846,1.000);">Radius</span>
<div class="a" style="left:1371px;top:504px;width:21px;height:19px;background:#fff;border:1px solid;border-color:#a0a0a0 #fff #fff #a0a0a0;box-shadow:inset 1px 1px #696969,inset -1px -1px #e3e3e3;"></div>
<span class="t" style="left:1375.7px;top:506.9px;font-size:13px;transform:scale(0.800,1.000);">1</span>
<div class="a" style="left:1396px;top:503px;width:16px;height:12px;background:#f0f0f0;border:1px solid;border-color:#fff #696969 #696969 #fff;box-shadow:inset -1px -1px #a0a0a0,inset 1px 1px #e3e3e3;"></div>
<div class="a" style="left:1396px;top:515px;width:16px;height:11px;background:#f0f0f0;border:1px solid;border-color:#fff #696969 #696969 #fff;box-shadow:inset -1px -1px #a0a0a0,inset 1px 1px #e3e3e3;"></div>
<svg class="a" style="left:0;top:0;overflow:visible" width="1" height="1"><polygon points="1400.6,510.6 1406.6,510.6 1403.6,507.6" fill="#000"/></svg>
<svg class="a" style="left:0;top:0;overflow:visible" width="1" height="1"><polygon points="1400.6,519.2 1406.6,519.2 1403.6,522.2" fill="#000"/></svg>
<div class="a" style="left:1168px;top:499px;width:40px;height:24px;background:#f0f0f0;border:1px solid;border-color:#fff #696969 #696969 #fff;box-shadow:inset -1px -1px #a0a0a0,inset 1px 1px #e3e3e3;"></div>
<span class="t" style="left:1170.5px;top:504.8px;font-size:13px;transform:scale(0.838,1.000);">-10Sec</span>
<div class="a" style="left:1211px;top:499px;width:33px;height:24px;background:#f0f0f0;border:1px solid;border-color:#fff #696969 #696969 #fff;box-shadow:inset -1px -1px #a0a0a0,inset 1px 1px #e3e3e3;"></div>
<span class="t" style="left:1213.5px;top:504.8px;font-size:13px;transform:scale(0.834,1.000);">-1Sec</span>
<div class="a" style="left:1248px;top:499px;width:34px;height:24px;background:#f0f0f0;border:1px solid;border-color:#fff #696969 #696969 #fff;box-shadow:inset -1px -1px #a0a0a0,inset 1px 1px #e3e3e3;"></div>
<span class="t" style="left:1249.4px;top:504.8px;font-size:13px;transform:scale(0.850,1.000);">+1Sec</span>
<div class="a" style="left:1285px;top:499px;width:41px;height:24px;background:#f0f0f0;border:1px solid;border-color:#fff #696969 #696969 #fff;box-shadow:inset -1px -1px #a0a0a0,inset 1px 1px #e3e3e3;"></div>
<span class="t" style="left:1287.4px;top:504.8px;font-size:13px;transform:scale(0.840,1.000);">+10Sec</span>
<div class="a" style="left:1047px;top:534px;width:12px;height:12px;background:#fff;border:1px solid;border-color:#a0a0a0 #fff #fff #a0a0a0;box-shadow:inset 1px 1px #696969,inset -1px -1px #e3e3e3;"></div>
<svg class="a" style="left:1047px;top:534px" width="12" height="12"><path d="M3 6.5 L5.5 9 L10 3.5" fill="none" stroke="#000" stroke-width="2"/></svg>
<span class="t" style="left:1064.3px;top:532.2px;font-size:13px;transform:scale(0.890,1.000);">Show Image of Clicked point</span>
<div class="a" style="left:1047px;top:550px;width:12px;height:12px;background:#fff;border:1px solid;border-color:#a0a0a0 #fff #fff #a0a0a0;box-shadow:inset 1px 1px #696969,inset -1px -1px #e3e3e3;"></div>
<span class="t" style="left:1065.3px;top:548.3px;font-size:13px;transform:scale(0.882,1.000);">Reproduce Aperture Position</span>
<div class="a" style="left:1222px;top:532px;width:71px;height:24px;background:#f0f0f0;border:1px solid;border-color:#fff #696969 #696969 #fff;box-shadow:inset -1px -1px #a0a0a0,inset 1px 1px #e3e3e3;"></div>
<span class="t" style="left:1227.5px;top:536.0px;font-size:13px;transform:scale(0.856,1.000);">Save Image</span>
<div class="a" style="left:1299px;top:532px;width:118px;height:24px;background:#f0f0f0;border:1px solid;border-color:#fff #696969 #696969 #fff;box-shadow:inset -1px -1px #a0a0a0,inset 1px 1px #e3e3e3;"></div>
<span class="t" style="left:1311.3px;top:536.0px;font-size:13px;transform:scale(0.899,1.000);">Copy to ClipBoard</span>
<div class="a" style="left:1280px;top:563px;width:120px;height:27px;background:#f0f0f0;border:1px solid;border-color:#fff #696969 #696969 #fff;box-shadow:inset -1px -1px #a0a0a0,inset 1px 1px #e3e3e3;"></div>
<div class="a" style="left:1281px;top:565px;width:117px;height:24px;overflow:hidden;">
<span class="t" style="left:-4.5px;top:4.1px;font-size:15px;font-weight:bold;color:#0c1446;transform:scale(0.876,1.000);">Lunar Identification</span>
</div>
<div class="a" style="left:1418px;top:473px;width:1px;height:80px;border-left:1px solid #a0a0a0;border-right:1px solid #fff;"></div>
<div class="a" style="left:1418px;top:474px;width:48px;height:79px;border:1px solid #a0a0a0;box-shadow:inset 1px 1px #fff,1px 1px #fff;"></div>
<span class="t" style="left:1425.2px;top:467.7px;font-size:13px;background:#f0f0f0;padding:0 1px;margin-left:-1px;transform:scale(0.911,1.000);">Y Axis</span>
<span class="t" style="left:1423.4px;top:479.6px;font-size:13px;transform:scale(0.823,1.000);">Min Max</span>
<div class="a" style="left:1423px;top:491px;width:16px;height:17px;background:#f0f0f0;border:1px solid;border-color:#fff #696969 #696969 #fff;box-shadow:inset -1px -1px #a0a0a0,inset 1px 1px #e3e3e3;"></div>
<svg class="a" style="left:0;top:0;overflow:visible" width="1" height="1"><polygon points="1426.1,502.05 1435.1,502.05 1430.6,497.55" fill="#000"/></svg>
<div class="a" style="left:1423px;top:510px;width:16px;height:17px;background:#f0f0f0;border:1px solid;border-color:#fff #696969 #696969 #fff;box-shadow:inset -1px -1px #a0a0a0,inset 1px 1px #e3e3e3;"></div>
<div class="a" style="left:1423px;top:533px;width:16px;height:15px;background:#f0f0f0;border:1px solid;border-color:#fff #696969 #696969 #fff;box-shadow:inset -1px -1px #a0a0a0,inset 1px 1px #e3e3e3;"></div>
<svg class="a" style="left:0;top:0;overflow:visible" width="1" height="1"><polygon points="1426.1,538.25 1435.1,538.25 1430.6,542.75" fill="#000"/></svg>
<div class="a" style="left:1444px;top:491px;width:18px;height:17px;background:#f0f0f0;border:1px solid;border-color:#fff #696969 #696969 #fff;box-shadow:inset -1px -1px #a0a0a0,inset 1px 1px #e3e3e3;"></div>
<svg class="a" style="left:0;top:0;overflow:visible" width="1" height="1"><polygon points="1448.4,502.05 1457.4,502.05 1452.9,497.55" fill="#000"/></svg>
<div class="a" style="left:1444px;top:510px;width:18px;height:17px;background:#f0f0f0;border:1px solid;border-color:#fff #696969 #696969 #fff;box-shadow:inset -1px -1px #a0a0a0,inset 1px 1px #e3e3e3;"></div>
<div class="a" style="left:1444px;top:533px;width:18px;height:15px;background:#f0f0f0;border:1px solid;border-color:#fff #696969 #696969 #fff;box-shadow:inset -1px -1px #a0a0a0,inset 1px 1px #e3e3e3;"></div>
<svg class="a" style="left:0;top:0;overflow:visible" width="1" height="1"><polygon points="1448.4,538.25 1457.4,538.25 1452.9,542.75" fill="#000"/></svg>
<div class="a" style="left:1470px;top:473px;width:58px;height:52px;border:1px solid #a0a0a0;box-shadow:inset 1px 1px #fff,1px 1px #fff;"></div>
<span class="t" style="left:1477.2px;top:468.3px;font-size:13px;background:#f0f0f0;padding:0 1px;margin-left:-1px;transform:scale(0.778,1.000);">Line</span>
<div class="a" style="left:1478px;top:483px;width:12px;height:12px;background:#fff;border:1px solid;border-color:#a0a0a0 #fff #fff #a0a0a0;box-shadow:inset 1px 1px #696969,inset -1px -1px #e3e3e3;"></div>
<svg class="a" style="left:1478px;top:483px" width="12" height="12"><path d="M3 6.5 L5.5 9 L10 3.5" fill="none" stroke="#000" stroke-width="2"/></svg>
<span class="t" style="left:1495.6px;top:480.7px;font-size:13px;transform:scale(0.921,1.000);">Axis</span>
<div class="a" style="left:1478px;top:497px;width:12px;height:12px;background:#fff;border:1px solid;border-color:#a0a0a0 #fff #fff #a0a0a0;box-shadow:inset 1px 1px #696969,inset -1px -1px #e3e3e3;"></div>
<svg class="a" style="left:1478px;top:497px" width="12" height="12"><path d="M3 6.5 L5.5 9 L10 3.5" fill="none" stroke="#000" stroke-width="2"/></svg>
<span class="t" style="left:1495.6px;top:495.2px;font-size:13px;transform:scale(0.858,1.000);">Data</span>
<div class="a" style="left:1477px;top:509px;width:46px;height:14px;background:#f0f0f0;border:1px solid;border-color:#fff #696969 #696969 #fff;box-shadow:inset -1px -1px #a0a0a0,inset 1px 1px #e3e3e3;"></div>
<span class="t" style="left:1483.7px;top:507.7px;font-size:13px;transform:scale(0.905,1.000);">Hilight</span>
<div class="a" style="left:1470px;top:532px;width:64px;height:27px;background:#f0f0f0;border:1px solid;border-color:#fff #696969 #696969 #fff;box-shadow:inset -1px -1px #a0a0a0,inset 1px 1px #e3e3e3;"></div>
<span class="t" style="left:1473.3px;top:536.3px;font-size:13px;transform:scale(0.875,1.000);">[3D] Image</span>
<div class="a" style="left:1534px;top:473px;width:54px;height:52px;border:1px solid #a0a0a0;box-shadow:inset 1px 1px #fff,1px 1px #fff;"></div>
<span class="t" style="left:1542.2px;top:468.3px;font-size:13px;background:#f0f0f0;padding:0 1px;margin-left:-1px;transform:scale(0.792,1.000);">Width</span>
<svg class="a" style="left:1542px;top:486px" width="13" height="13"><circle cx="6.5" cy="6.5" r="6" fill="url(#rgo)"/><circle cx="6.5" cy="6.5" r="5" fill="url(#rgi)"/><circle cx="6.5" cy="6.5" r="4" fill="#fff"/></svg>
<span class="t" style="left:1559.5px;top:485.6px;font-size:13px;transform:scale(0.805,1.000);">Part</span>
<svg class="a" style="left:1542px;top:507px" width="13" height="13"><circle cx="6.5" cy="6.5" r="6" fill="url(#rgo)"/><circle cx="6.5" cy="6.5" r="5" fill="url(#rgi)"/><circle cx="6.5" cy="6.5" r="4" fill="#fff"/><circle cx="6.5" cy="6.5" r="2" fill="#000"/></svg>
<span class="t" style="left:1559.5px;top:506.0px;font-size:13px;transform:scale(0.804,1.000);">Entire</span>
<div class="a" style="left:1595px;top:471px;width:143px;height:18px;background:#f0f0f0;border:1px solid;border-color:#fff #696969 #696969 #fff;box-shadow:inset -1px -1px #a0a0a0,inset 1px 1px #e3e3e3;"></div>
<span class="t" style="left:1601.8px;top:472.0px;font-size:13px;transform:scale(0.900,1.000);">Correction for absorption</span>
<div class="a" style="left:1595px;top:491px;width:103px;height:18px;background:#f0f0f0;border:1px solid;border-color:#fff #696969 #696969 #fff;box-shadow:inset -1px -1px #a0a0a0,inset 1px 1px #e3e3e3;"></div>
<span class="t" style="left:1605.4px;top:493.0px;font-size:13px;transform:scale(0.879,1.000);">Noise Reduction</span>
<div class="a" style="left:1701px;top:491px;width:37px;height:18px;background:#f0f0f0;border:1px solid;border-color:#fff #696969 #696969 #fff;box-shadow:inset -1px -1px #a0a0a0,inset 1px 1px #e3e3e3;"></div>
<span class="t" style="left:1704.7px;top:492.1px;font-size:13px;transform:scale(0.855,1.000);">Reset</span>
<div class="a" style="left:1751px;top:472px;width:36px;height:24px;background:#f0f0f0;border:1px solid;border-color:#fff #696969 #696969 #fff;box-shadow:inset -1px -1px #a0a0a0,inset 1px 1px #e3e3e3;"></div>
<span class="t" style="left:1754.5px;top:477.0px;font-size:13px;transform:scale(0.923,1.000);">close</span>
<div class="a" style="left:1594px;top:512px;width:12px;height:12px;background:#fff;border:1px solid;border-color:#a0a0a0 #fff #fff #a0a0a0;box-shadow:inset 1px 1px #696969,inset -1px -1px #e3e3e3;"></div>
<svg class="a" style="left:1594px;top:512px" width="12" height="12"><path d="M3 6.5 L5.5 9 L10 3.5" fill="none" stroke="#000" stroke-width="2"/></svg>
<span class="t" style="left:1611.1px;top:511.6px;font-size:13px;transform:scale(0.812,1.000);">Information</span>
<div class="a" style="left:1693px;top:523px;width:93px;height:33px;border:1px solid #a0a0a0;box-shadow:inset 1px 1px #fff,1px 1px #fff;"></div>
<span class="t" style="left:1700.4px;top:516.4px;font-size:13px;background:#f0f0f0;padding:0 1px;margin-left:-1px;transform:scale(0.842,1.000);">Object</span>
<div class="a" style="left:1744px;top:509px;width:12px;height:12px;background:#fff;border:1px solid;border-color:#a0a0a0 #fff #fff #a0a0a0;box-shadow:inset 1px 1px #696969,inset -1px -1px #e3e3e3;"></div>
<svg class="a" style="left:1744px;top:509px" width="12" height="12"><path d="M3 6.5 L5.5 9 L10 3.5" fill="none" stroke="#000" stroke-width="2"/></svg>
<span class="t" style="left:1760.6px;top:508.2px;font-size:13px;transform:scale(0.900,1.000);">ID</span>
<div class="a" style="left:1699px;top:533px;width:19px;height:16px;background:repeating-conic-gradient(#fafafa 0 25%,#e6e6e6 0 50%) 0 0/2px 2px;border:1px solid;border-color:#696969 #fff #fff #696969;box-shadow:inset 1px 1px #a0a0a0;"></div>
<span class="t" style="left:1705.8px;top:534.8px;font-size:13px;transform:scale(0.800,1.000);">A</span>
<div class="a" style="left:1721px;top:533px;width:19px;height:16px;background:repeating-conic-gradient(#fafafa 0 25%,#e6e6e6 0 50%) 0 0/2px 2px;border:1px solid;border-color:#696969 #fff #fff #696969;box-shadow:inset 1px 1px #a0a0a0;"></div>
<span class="t" style="left:1727.4px;top:534.8px;font-size:13px;transform:scale(0.800,1.000);">B</span>
<div class="a" style="left:1743px;top:533px;width:19px;height:16px;background:repeating-conic-gradient(#fafafa 0 25%,#e6e6e6 0 50%) 0 0/2px 2px;border:1px solid;border-color:#696969 #fff #fff #696969;box-shadow:inset 1px 1px #a0a0a0;"></div>
<span class="t" style="left:1748.5px;top:534.8px;font-size:13px;transform:scale(0.800,1.000);">C</span>
<div class="a" style="left:1765px;top:533px;width:17px;height:16px;background:#f0f0f0;border:1px solid;border-color:#fff #696969 #696969 #fff;box-shadow:inset -1px -1px #a0a0a0,inset 1px 1px #e3e3e3;"></div>
<span class="t" style="left:1770.1px;top:534.8px;font-size:13px;transform:scale(0.800,1.000);">L</span>
<div class="a" style="left:1410px;top:564px;width:168px;height:26px;background:#f0f0f0;border:1px solid;border-color:#fff #696969 #696969 #fff;box-shadow:inset -1px -1px #a0a0a0,inset 1px 1px #e3e3e3;"></div>
<span class="t" style="left:1427.8px;top:568.5px;font-size:15px;font-weight:bold;transform:scale(0.942,1.000);">Diffraction Analysis</span>
<div class="a" style="left:1583px;top:564px;width:105px;height:26px;background:#f0f0f0;border:1px solid;border-color:#fff #696969 #696969 #fff;box-shadow:inset -1px -1px #a0a0a0,inset 1px 1px #e3e3e3;"></div>
<span class="t" style="left:1595.9px;top:568.5px;font-size:15px;font-weight:bold;color:#0c1446;transform:scale(0.886,1.000);">Make Report</span>
<div class="a" style="left:1039px;top:597px;width:754px;height:2px;border-top:1px solid #a0a0a0;border-bottom:1px solid #fff;"></div>
<div class="a" style="left:1047px;top:624px;width:735px;height:89px;border:1px solid #a0a0a0;box-shadow:inset 1px 1px #fff,1px 1px #fff;"></div>
<span class="t" style="left:1054.7px;top:617.7px;font-size:13px;background:#f0f0f0;padding:0 1px;margin-left:-1px;transform:scale(0.904,1.000);">S/N vs Error</span>
<span class="t" style="left:1055.7px;top:635.6px;font-size:14.5px;font-weight:bold;transform:scale(0.913,1.000);">S/N (Full drop)</span>
<div class="a" style="left:1159px;top:633px;width:56px;height:26px;background:#fff;border:1px solid;border-color:#a0a0a0 #fff #fff #a0a0a0;box-shadow:inset 1px 1px #696969,inset -1px -1px #e3e3e3;"></div>
<span class="t" style="left:1166.2px;top:637.4px;font-size:16px;font-weight:bold;color:#1010ff;transform:scale(1.012,1.000);">7.2</span>
<span class="t" style="left:1239.9px;top:635.6px;font-size:14.5px;font-weight:bold;transform:scale(0.867,1.000);">S/N</span>
<div class="a" style="left:1271px;top:632px;width:48px;height:25px;background:#fff;border:1px solid;border-color:#a0a0a0 #fff #fff #a0a0a0;box-shadow:inset 1px 1px #696969,inset -1px -1px #e3e3e3;"></div>
<span class="t" style="left:1274.2px;top:636.9px;font-size:16px;font-weight:bold;color:#ff1010;transform:scale(0.913,1.000);">7.2</span>
<span class="t" style="left:1327.2px;top:635.6px;font-size:14.5px;font-weight:bold;transform:scale(0.935,1.000);">expected on</span>
<div class="a" style="left:1416px;top:632px;width:47px;height:25px;background:#fff;border:1px solid;border-color:#a0a0a0 #fff #fff #a0a0a0;box-shadow:inset 1px 1px #696969,inset -1px -1px #e3e3e3;"></div>
<span class="t" style="left:1418.2px;top:636.9px;font-size:16px;font-weight:bold;transform:scale(0.899,1.000);">8.0</span>
<span class="t" style="left:1471.4px;top:635.6px;font-size:14.5px;font-weight:bold;transform:scale(0.921,1.000);">Mag drop</span>
<span class="t" style="left:1567.7px;top:635.6px;font-size:14.5px;font-weight:bold;transform:scale(0.925,1.000);">Frame exposure</span>
<div class="a" style="left:1687px;top:632px;width:48px;height:25px;background:#fff;border:1px solid;border-color:#a0a0a0 #fff #fff #a0a0a0;box-shadow:inset 1px 1px #696969,inset -1px -1px #e3e3e3;"></div>
<span class="t" style="left:1690.0px;top:636.9px;font-size:16px;font-weight:bold;transform:scale(0.922,1.000);">90.5</span>
<span class="t" style="left:1743.5px;top:635.1px;font-size:14.5px;font-weight:bold;transform:scale(0.895,1.000);">msec</span>
<span class="t" style="left:1055.2px;top:667.2px;font-size:14.5px;font-weight:bold;transform:scale(0.913,1.000);">Fresnel</span>
<span class="t" style="left:1055.2px;top:682.3px;font-size:14.5px;font-weight:bold;transform:scale(0.915,1.000);">Number</span>
<div class="a" style="left:1111px;top:672px;width:48px;height:25px;background:#fff;border:1px solid;border-color:#a0a0a0 #fff #fff #a0a0a0;box-shadow:inset 1px 1px #696969,inset -1px -1px #e3e3e3;"></div>
<span class="t" style="left:1114.5px;top:675.9px;font-size:16px;font-weight:bold;transform:scale(0.914,1.000);">180</span>
<span class="t" style="left:1175.8px;top:667.2px;font-size:14.5px;font-weight:bold;transform:scale(0.932,1.000);">Lower Limit</span>
<span class="t" style="left:1182.6px;top:682.3px;font-size:14.5px;font-weight:bold;transform:scale(0.931,1.000);">for detect</span>
<div class="a" style="left:1255px;top:672px;width:55px;height:25px;background:#fff;border:1px solid;border-color:#a0a0a0 #fff #fff #a0a0a0;box-shadow:inset 1px 1px #696969,inset -1px -1px #e3e3e3;"></div>
<span class="t" style="left:1258.3px;top:675.9px;font-size:16px;font-weight:bold;color:#1a1aff;transform:scale(0.883,1.000);">561</span>
<span class="t" style="left:1311.3px;top:676.0px;font-size:14.5px;font-weight:bold;transform:scale(0.909,1.000);">msec</span>
<span class="t" style="left:1359.2px;top:667.2px;font-size:14.5px;font-weight:bold;transform:scale(0.952,1.000);">Predicted</span>
<span class="t" style="left:1359.2px;top:681.5px;font-size:14.5px;font-weight:bold;transform:scale(0.916,1.000);">Time Error</span>
<div class="a" style="left:1432px;top:672px;width:63px;height:25px;background:#fff;border:1px solid;border-color:#a0a0a0 #fff #fff #a0a0a0;box-shadow:inset 1px 1px #696969,inset -1px -1px #e3e3e3;"></div>
<span class="t" style="left:1434.0px;top:675.9px;font-size:16px;font-weight:bold;color:#ff1a1a;transform:scale(0.913,1.000);">4000</span>
<span class="t" style="left:1495.3px;top:683.5px;font-size:14.5px;font-weight:bold;transform:scale(0.909,1.000);">msec</span>
<span class="t" style="left:1543.3px;top:667.2px;font-size:14.5px;font-weight:bold;transform:scale(0.906,1.000);">Expected Error for</span>
<span class="t" style="left:1543.3px;top:682.3px;font-size:14.5px;font-weight:bold;transform:scale(0.933,1.000);">Analyzing event time</span>
<div class="a" style="left:1687px;top:672px;width:48px;height:25px;background:#fff;border:1px solid;border-color:#a0a0a0 #fff #fff #a0a0a0;box-shadow:inset 1px 1px #696969,inset -1px -1px #e3e3e3;"></div>
<span class="t" style="left:1690.5px;top:675.9px;font-size:16px;font-weight:bold;transform:scale(0.906,1.000);">12.6</span>
<span class="t" style="left:1740.5px;top:683.5px;font-size:14.5px;font-weight:bold;transform:scale(0.895,1.000);">msec</span>
</body></html>
